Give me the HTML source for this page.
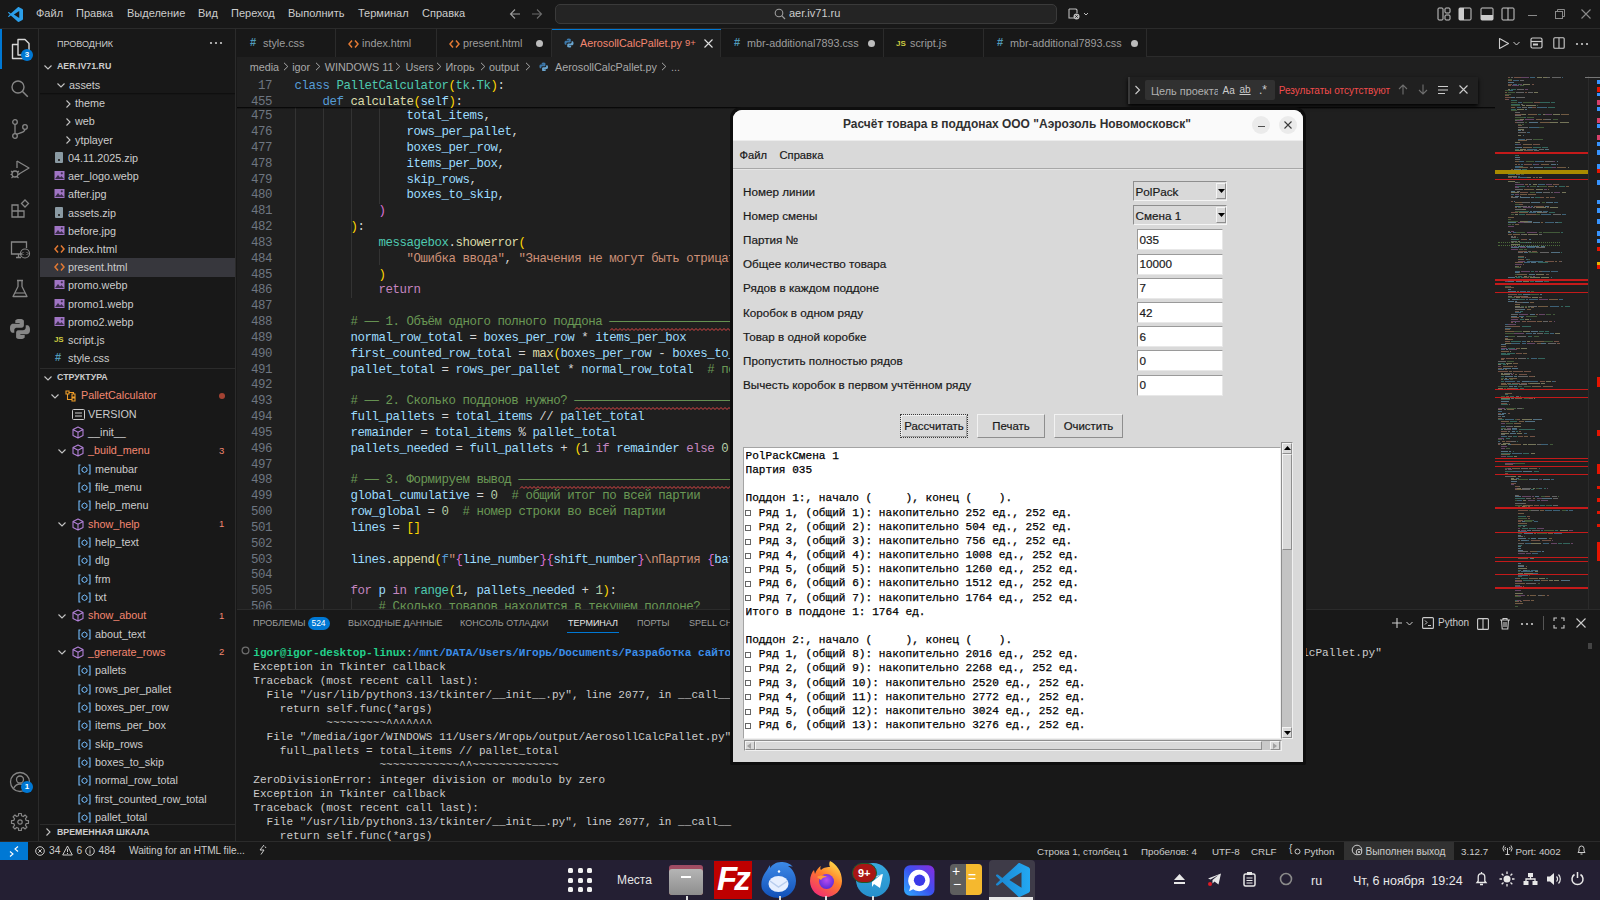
<!DOCTYPE html><html><head><meta charset="utf-8"><style>
*{box-sizing:border-box;margin:0;padding:0}
html,body{width:1600px;height:900px;overflow:hidden;background:#181818;font-family:"Liberation Sans",sans-serif;color:#ccc}
.a{position:absolute}
.t{position:absolute;white-space:pre;line-height:1}
.mono{font-family:"Liberation Mono",monospace}
svg{position:absolute;overflow:visible}
</style></head><body>
<div class="a" style="left:0;top:0;width:1600px;height:29px;background:#181818;border-bottom:1px solid #2b2b2b"></div>
<svg style="left:8px;top:7px" width="15" height="15" viewBox="0 0 100 100"><path d="M70.9 99.3L96 87.3C98.6 86 100 83.6 100 80.8V19.2C100 16.4 98.6 14 96 12.7L70.9.7C69.3 0 67.4 0 65.9 1L18.7 44 5.5 34.1C4.2 33.2 2.5 33.3 1.4 34.3L.9 34.8C-.3 35.9-.3 37.9.9 39L12.2 50 .9 61C-.3 62.1-.3 64.1.9 65.2L1.4 65.7C2.5 66.7 4.2 66.8 5.5 65.9L18.7 56 65.9 99C67.4 100 69.3 100 70.9 99.3ZM75 27.3L39.3 50 75 72.7Z" fill="#2b9fea" fill-rule="evenodd"/></svg>
<div class="t" style="left:36px;top:8px;font-size:11px;color:#cccccc">Файл</div>
<div class="t" style="left:76px;top:8px;font-size:11px;color:#cccccc">Правка</div>
<div class="t" style="left:127px;top:8px;font-size:11px;color:#cccccc">Выделение</div>
<div class="t" style="left:198px;top:8px;font-size:11px;color:#cccccc">Вид</div>
<div class="t" style="left:231px;top:8px;font-size:11px;color:#cccccc">Переход</div>
<div class="t" style="left:288px;top:8px;font-size:11px;color:#cccccc">Выполнить</div>
<div class="t" style="left:358px;top:8px;font-size:11px;color:#cccccc">Терминал</div>
<div class="t" style="left:422px;top:8px;font-size:11px;color:#cccccc">Справка</div>
<svg style="left:509px;top:8px" width="12" height="12" viewBox="0 0 12 12"><path d="M11 6H1.5M6 1.5L1.5 6 6 10.5" stroke="#9d9d9d" stroke-width="1.1" fill="none"/></svg>
<svg style="left:531px;top:8px" width="12" height="12" viewBox="0 0 12 12"><path d="M1 6h9.5M6 1.5l4.5 4.5L6 10.5" stroke="#6b6b6b" stroke-width="1.1" fill="none"/></svg>
<div class="a" style="left:555px;top:4px;width:502px;height:20px;background:#242424;border:1px solid #3a3a3a;border-radius:5px"></div>
<svg style="left:774px;top:8px" width="12" height="12" viewBox="0 0 12 12"><circle cx="5" cy="5" r="3.8" stroke="#9d9d9d" stroke-width="1.1" fill="none"/><path d="M7.7 7.7 11 11" stroke="#9d9d9d" stroke-width="1.2"/></svg>
<div class="t" style="left:789px;top:8px;font-size:11px;color:#cccccc">aer.iv71.ru</div>
<svg style="left:1067px;top:7px" width="24" height="14" viewBox="0 0 24 14"><path d="M2 2h7l1 1v3M2 2v9h5" stroke="#bdbdbd" stroke-width="1.1" fill="none"/><circle cx="9.5" cy="9.5" r="3" fill="#bdbdbd"/><path d="M8.3 8.3l2.4 2.4M10.7 8.3l-2.4 2.4" stroke="#181818" stroke-width=".9"/><path d="M17 6l2 2 2-2" stroke="#bdbdbd" stroke-width="1" fill="none"/></svg>
<svg style="left:1437px;top:7px" width="14" height="14" viewBox="0 0 14 14"><rect x="1" y="1" width="5" height="12" rx="1" stroke="#cccccc" fill="none"/><rect x="8" y="1" width="5" height="5" rx="1" stroke="#cccccc" fill="none"/><rect x="8" y="8" width="5" height="5" rx="1" stroke="#cccccc" fill="none"/></svg>
<svg style="left:1458px;top:7px" width="14" height="14" viewBox="0 0 14 14"><rect x="1" y="1" width="12" height="12" rx="1" stroke="#cccccc" fill="none"/><rect x="1" y="1" width="5" height="12" fill="#cccccc"/></svg>
<svg style="left:1480px;top:7px" width="14" height="14" viewBox="0 0 14 14"><rect x="1" y="1" width="12" height="12" rx="1" stroke="#cccccc" fill="none"/><rect x="1" y="8" width="12" height="5" fill="#cccccc"/></svg>
<svg style="left:1501px;top:7px" width="14" height="14" viewBox="0 0 14 14"><rect x="1" y="1" width="12" height="12" rx="1" stroke="#cccccc" fill="none"/><path d="M7 1v12" stroke="#cccccc"/></svg>
<div class="a" style="left:1528px;top:15px;width:9px;height:1px;background:#8a8a8a"></div>
<svg style="left:1555px;top:9px" width="10" height="10" viewBox="0 0 10 10"><rect x=".5" y="2.5" width="7" height="7" stroke="#8a8a8a" fill="none"/><path d="M2.5 2.5V.5h7v7h-2" stroke="#8a8a8a" fill="none"/></svg>
<svg style="left:1581px;top:9px" width="10" height="10" viewBox="0 0 10 10"><path d="M.5 .5l9 9M9.5 .5l-9 9" stroke="#8a8a8a" stroke-width="1.1"/></svg>
<div class="a" style="left:0;top:29px;width:39px;height:812px;background:#181818;border-right:1px solid #2b2b2b"></div>
<div class="a" style="left:0;top:29px;width:2px;height:40px;background:#0078d4"></div>
<svg style="left:10px;top:38px" width="22" height="22" viewBox="0 0 22 22"><path d="M8 1.5h7l4 4v11.5H8z" stroke="#d7d7d7" stroke-width="1.4" fill="none" stroke-linejoin="round"/><path d="M8 6.5H2.5v14h10.5v-3.5" stroke="#d7d7d7" stroke-width="1.4" fill="none" stroke-linejoin="round"/></svg>
<div class="a" style="left:21px;top:49px;width:12px;height:12px;border-radius:6px;background:#0078d4;color:#fff;font-size:8px;line-height:12px;text-align:center;font-weight:bold">3</div>
<svg style="left:9px;top:78px" width="22" height="22" viewBox="0 0 22 22"><circle cx="9" cy="9" r="6" stroke="#868686" stroke-width="1.4" fill="none"/><path d="M13.3 13.3l5.5 5.5" stroke="#868686" stroke-width="1.5"/></svg>
<svg style="left:9px;top:118px" width="22" height="22" viewBox="0 0 22 22"><circle cx="6" cy="4" r="2.3" stroke="#868686" stroke-width="1.3" fill="none"/><circle cx="6" cy="18" r="2.3" stroke="#868686" stroke-width="1.3" fill="none"/><circle cx="16" cy="9" r="2.3" stroke="#868686" stroke-width="1.3" fill="none"/><path d="M6 6.3v9.4M16 11.3c0 3-4 3.5-9 5" stroke="#868686" stroke-width="1.3" fill="none"/></svg>
<svg style="left:9px;top:158px" width="22" height="22" viewBox="0 0 22 22"><path d="M8 3l12 7-10 6" stroke="#868686" stroke-width="1.3" fill="none" stroke-linejoin="round"/><path d="M8 3v7" stroke="#868686" stroke-width="1.3"/><circle cx="6" cy="16" r="3" stroke="#868686" stroke-width="1.3" fill="none"/><path d="M2 13l2 1.5M10 13l-2 1.5M1.5 16.5h1.5M9 16.5h1.5M2.5 20l1.5-1.5M9.5 20L8 18.5" stroke="#868686" stroke-width="1.1"/></svg>
<svg style="left:9px;top:198px" width="22" height="22" viewBox="0 0 22 22"><path d="M3 7h6v6h6v6H3zM3 13h6v6M9 13v6" stroke="#868686" stroke-width="1.3" fill="none"/><path d="M12.5 5.5l3.5-3.5 3.5 3.5-3.5 3.5z" stroke="#868686" stroke-width="1.3" fill="none"/></svg>
<svg style="left:9px;top:238px" width="22" height="22" viewBox="0 0 22 22"><path d="M13 16H2.5V4h15v6" stroke="#868686" stroke-width="1.3" fill="none"/><path d="M7 19.5h5M9.5 16v3.5" stroke="#868686" stroke-width="1.3"/><circle cx="16" cy="15.5" r="4.5" stroke="#868686" stroke-width="1.2" fill="none"/><path d="M14.5 14l-1.5 1.5 1.5 1.5M17.5 14l1.5 1.5-1.5 1.5" stroke="#868686" stroke-width="1"/></svg>
<svg style="left:9px;top:278px" width="22" height="22" viewBox="0 0 22 22"><path d="M8 2.5h6M9 2.5v6L4 18.5h14L13 8.5v-6" stroke="#868686" stroke-width="1.3" fill="none" stroke-linejoin="round"/><path d="M6 15h10" stroke="#868686" stroke-width="1.2"/></svg>
<svg style="left:9px;top:318px" width="22" height="22" viewBox="0 0 22 22"><path d="M10.5 1C6 1 6.3 3 6.3 3v2.1h4.3v.7H4.1S1 5.5 1 10.2s2.7 4.5 2.7 4.5h1.6v-2.2s-.1-2.7 2.6-2.7h4.4s2.6 0 2.6-2.5V3.1S15.3 1 10.5 1z" fill="#868686"/><path d="M11.5 21c4.5 0 4.2-2 4.2-2v-2.1h-4.3v-.7h6.5s3.1.3 3.1-4.4-2.7-4.5-2.7-4.5h-1.6v2.2s.1 2.7-2.6 2.7H9.7s-2.6 0-2.6 2.5v4.2S6.7 21 11.5 21z" fill="#868686"/></svg>
<svg style="left:9px;top:771px" width="22" height="22" viewBox="0 0 22 22"><circle cx="11" cy="11" r="9.5" stroke="#868686" stroke-width="1.3" fill="none"/><circle cx="11" cy="8.5" r="3.5" stroke="#868686" stroke-width="1.3" fill="none"/><path d="M4.5 17.5c1.5-3 3.8-4.5 6.5-4.5s5 1.5 6.5 4.5" stroke="#868686" stroke-width="1.3" fill="none"/></svg>
<div class="a" style="left:21px;top:781px;width:12px;height:12px;border-radius:6px;background:#0078d4;color:#fff;font-size:8px;line-height:12px;text-align:center;font-weight:bold">1</div>
<svg style="left:10px;top:811.7px" width="20" height="20" viewBox="0 0 20 20"><path d="M18.49 8.65 L18.49 11.35 L16.22 11.49 L15.46 13.34 L16.96 15.05 L15.05 16.96 L13.34 15.46 L11.49 16.22 L11.35 18.49 L8.65 18.49 L8.51 16.22 L6.66 15.46 L4.95 16.96 L3.04 15.05 L4.54 13.34 L3.78 11.49 L1.51 11.35 L1.51 8.65 L3.78 8.51 L4.54 6.66 L3.04 4.95 L4.95 3.04 L6.66 4.54 L8.51 3.78 L8.65 1.51 L11.35 1.51 L11.49 3.78 L13.34 4.54 L15.05 3.04 L16.96 4.95 L15.46 6.66 L16.22 8.51Z" stroke="#868686" stroke-width="1.2" fill="none" stroke-linejoin="round"/><circle cx="10" cy="10" r="2.2" stroke="#868686" stroke-width="1.2" fill="none"/></svg>
<div class="a" style="left:39px;top:29px;width:197px;height:812px;background:#181818;border-right:1px solid #2b2b2b"></div>
<div class="t" style="left:57px;top:40px;font-size:9px;color:#cccccc">ПРОВОДНИК</div>
<svg style="left:209px;top:41px" width="14" height="4" viewBox="0 0 14 4"><circle cx="2" cy="2" r="1.1" fill="#cccccc"/><circle cx="7" cy="2" r="1.1" fill="#cccccc"/><circle cx="12" cy="2" r="1.1" fill="#cccccc"/></svg>
<svg style="left:43px;top:61.7px" width="10" height="10" viewBox="0 0 10 10"><path d="M1.5 3.5L5 7l3.5-3.5" stroke="#c5c5c5" stroke-width="1.1" fill="none"/></svg>
<div class="t" style="left:57px;top:62.2px;font-size:8.8px;font-weight:bold;color:#cccccc">AER.IV71.RU</div>
<div class="a" style="left:40px;top:258.23px;width:195px;height:18.33px;background:#37373d"></div>
<svg style="left:56px;top:80.43px" width="10" height="10" viewBox="0 0 10 10"><path d="M1.5 3.5L5 7l3.5-3.5" stroke="#c5c5c5" stroke-width="1.1" fill="none"/></svg>
<div class="t" style="left:69px;top:79.93px;font-size:10.8px;color:#cccccc">assets</div>
<svg style="left:63px;top:98.66px" width="10" height="10" viewBox="0 0 10 10"><path d="M3.5 1.5L7 5 3.5 8.5" stroke="#c5c5c5" stroke-width="1.1" fill="none"/></svg>
<div class="t" style="left:75px;top:98.16px;font-size:10.8px;color:#cccccc">theme</div>
<svg style="left:63px;top:116.89px" width="10" height="10" viewBox="0 0 10 10"><path d="M3.5 1.5L7 5 3.5 8.5" stroke="#c5c5c5" stroke-width="1.1" fill="none"/></svg>
<div class="t" style="left:75px;top:116.39px;font-size:10.8px;color:#cccccc">web</div>
<svg style="left:63px;top:135.12px" width="10" height="10" viewBox="0 0 10 10"><path d="M3.5 1.5L7 5 3.5 8.5" stroke="#c5c5c5" stroke-width="1.1" fill="none"/></svg>
<div class="t" style="left:75px;top:134.62px;font-size:10.8px;color:#cccccc">ytplayer</div>
<div class="a" style="left:55px;top:151.85000000000002px;width:8px;height:11px;background:#8a9aa3;border-radius:1px"></div><div class="a" style="left:58px;top:158.85000000000002px;width:2px;height:2px;background:#333"></div>
<div class="t" style="left:68px;top:152.85000000000002px;font-size:10.8px;color:#cccccc">04.11.2025.zip</div>
<svg style="left:54px;top:170.07999999999998px" width="11" height="11" viewBox="0 0 11 11"><rect x=".5" y="1" width="10" height="9" fill="#a074c4"/><path d="M1 9l3-4 2 2.5 1.5-1.5L10 9z" fill="#3a2d4a"/><circle cx="7.8" cy="3.3" r="1.1" fill="#3a2d4a"/></svg>
<div class="t" style="left:68px;top:171.07999999999998px;font-size:10.8px;color:#cccccc">aer_logo.webp</div>
<svg style="left:54px;top:188.31px" width="11" height="11" viewBox="0 0 11 11"><rect x=".5" y="1" width="10" height="9" fill="#a074c4"/><path d="M1 9l3-4 2 2.5 1.5-1.5L10 9z" fill="#3a2d4a"/><circle cx="7.8" cy="3.3" r="1.1" fill="#3a2d4a"/></svg>
<div class="t" style="left:68px;top:189.31px;font-size:10.8px;color:#cccccc">after.jpg</div>
<div class="a" style="left:55px;top:206.54000000000002px;width:8px;height:11px;background:#8a9aa3;border-radius:1px"></div><div class="a" style="left:58px;top:213.54000000000002px;width:2px;height:2px;background:#333"></div>
<div class="t" style="left:68px;top:207.54000000000002px;font-size:10.8px;color:#cccccc">assets.zip</div>
<svg style="left:54px;top:224.76999999999998px" width="11" height="11" viewBox="0 0 11 11"><rect x=".5" y="1" width="10" height="9" fill="#a074c4"/><path d="M1 9l3-4 2 2.5 1.5-1.5L10 9z" fill="#3a2d4a"/><circle cx="7.8" cy="3.3" r="1.1" fill="#3a2d4a"/></svg>
<div class="t" style="left:68px;top:225.76999999999998px;font-size:10.8px;color:#cccccc">before.jpg</div>
<svg style="left:54px;top:244.0px" width="11" height="10" viewBox="0 0 11 10"><path d="M4 1.5L1 5l3 3.5M7 1.5L10 5 7 8.5" stroke="#e37933" stroke-width="1.5" fill="none"/></svg>
<div class="t" style="left:68px;top:244.0px;font-size:10.8px;color:#cccccc">index.html</div>
<svg style="left:54px;top:262.23px" width="11" height="10" viewBox="0 0 11 10"><path d="M4 1.5L1 5l3 3.5M7 1.5L10 5 7 8.5" stroke="#e37933" stroke-width="1.5" fill="none"/></svg>
<div class="t" style="left:68px;top:262.23px;font-size:10.8px;color:#cccccc">present.html</div>
<svg style="left:54px;top:279.46px" width="11" height="11" viewBox="0 0 11 11"><rect x=".5" y="1" width="10" height="9" fill="#a074c4"/><path d="M1 9l3-4 2 2.5 1.5-1.5L10 9z" fill="#3a2d4a"/><circle cx="7.8" cy="3.3" r="1.1" fill="#3a2d4a"/></svg>
<div class="t" style="left:68px;top:280.46px;font-size:10.8px;color:#cccccc">promo.webp</div>
<svg style="left:54px;top:297.69px" width="11" height="11" viewBox="0 0 11 11"><rect x=".5" y="1" width="10" height="9" fill="#a074c4"/><path d="M1 9l3-4 2 2.5 1.5-1.5L10 9z" fill="#3a2d4a"/><circle cx="7.8" cy="3.3" r="1.1" fill="#3a2d4a"/></svg>
<div class="t" style="left:68px;top:298.69px;font-size:10.8px;color:#cccccc">promo1.webp</div>
<svg style="left:54px;top:315.92px" width="11" height="11" viewBox="0 0 11 11"><rect x=".5" y="1" width="10" height="9" fill="#a074c4"/><path d="M1 9l3-4 2 2.5 1.5-1.5L10 9z" fill="#3a2d4a"/><circle cx="7.8" cy="3.3" r="1.1" fill="#3a2d4a"/></svg>
<div class="t" style="left:68px;top:316.92px;font-size:10.8px;color:#cccccc">promo2.webp</div>
<div class="t" style="left:54px;top:336.15px;font-size:8px;font-weight:bold;color:#cbcb41;letter-spacing:-0.3px">JS</div>
<div class="t" style="left:68px;top:335.15px;font-size:10.8px;color:#cccccc">script.js</div>
<div class="t" style="left:55px;top:352.38px;font-size:11px;font-weight:bold;color:#519aba">#</div>
<div class="t" style="left:68px;top:353.38px;font-size:10.8px;color:#cccccc">style.css</div>
<div class="a" style="left:40px;top:93.16px;width:195px;height:2px;background:linear-gradient(#0c0c0c,#181818)"></div>
<div class="a" style="left:40px;top:368.2px;width:195px;height:1px;background:#2b2b2b"></div>
<svg style="left:43px;top:372.7px" width="10" height="10" viewBox="0 0 10 10"><path d="M1.5 3.5L5 7l3.5-3.5" stroke="#c5c5c5" stroke-width="1.1" fill="none"/></svg>
<div class="t" style="left:57px;top:373.2px;font-size:8.8px;font-weight:bold;color:#cccccc">СТРУКТУРА</div>
<svg style="left:50px;top:390.8px" width="10" height="10" viewBox="0 0 10 10"><path d="M1.5 3.5L5 7l3.5-3.5" stroke="#c5c5c5" stroke-width="1.1" fill="none"/></svg>
<svg style="left:64px;top:389.3px" width="13" height="13" viewBox="0 0 13 13"><path d="M2 2h3v3H2zM8 5h3v3H8zM8 9h3v3H8zM3.5 5v5.5H8M5 3.5h4.5V5" stroke="#ee9d28" stroke-width="1.1" fill="none"/></svg>
<div class="t" style="left:81px;top:390.3px;font-size:10.8px;color:#f48771">PalletCalculator</div>
<div class="a" style="left:219px;top:392.8px;width:6px;height:6px;border-radius:3px;background:#c74e39;opacity:.8"></div>
<svg style="left:72px;top:408.63px" width="13" height="11" viewBox="0 0 13 11"><rect x=".5" y=".5" width="12" height="10" rx="1" stroke="#cccccc" fill="none"/><path d="M3 4h7M3 7h7" stroke="#cccccc"/></svg>
<div class="t" style="left:88px;top:408.63px;font-size:10.8px;color:#cccccc">VERSION</div>
<svg style="left:72px;top:425.96000000000004px" width="12" height="13" viewBox="0 0 12 13"><path d="M6 1l5 2.6v5.8L6 12 1 9.4V3.6z M1 3.6l5 2.7 5-2.7M6 6.3V12" stroke="#b180d7" stroke-width="1.1" fill="none" stroke-linejoin="round"/></svg>
<div class="t" style="left:88px;top:426.96000000000004px;font-size:10.8px;color:#cccccc">__init__</div>
<svg style="left:57px;top:445.79px" width="10" height="10" viewBox="0 0 10 10"><path d="M1.5 3.5L5 7l3.5-3.5" stroke="#c5c5c5" stroke-width="1.1" fill="none"/></svg>
<svg style="left:72px;top:444.29px" width="12" height="13" viewBox="0 0 12 13"><path d="M6 1l5 2.6v5.8L6 12 1 9.4V3.6z M1 3.6l5 2.7 5-2.7M6 6.3V12" stroke="#b180d7" stroke-width="1.1" fill="none" stroke-linejoin="round"/></svg>
<div class="t" style="left:88px;top:445.29px;font-size:10.8px;color:#f48771">_build_menu</div>
<div class="t" style="left:219px;top:445.79px;font-size:9.5px;color:#f48771">3</div>
<svg style="left:78px;top:463.62px" width="13" height="11" viewBox="0 0 13 11"><path d="M2.5 1H1v9h1.5M10.5 1H12v9h-1.5" stroke="#75beff" stroke-width="1.1" fill="none"/><path d="M4 4.5l2.5-1.5 2.5 1.5v2.5L6.5 8.5 4 7z" stroke="#75beff" stroke-width="1" fill="none"/></svg>
<div class="t" style="left:95px;top:463.62px;font-size:10.8px;color:#cccccc">menubar</div>
<svg style="left:78px;top:481.95px" width="13" height="11" viewBox="0 0 13 11"><path d="M2.5 1H1v9h1.5M10.5 1H12v9h-1.5" stroke="#75beff" stroke-width="1.1" fill="none"/><path d="M4 4.5l2.5-1.5 2.5 1.5v2.5L6.5 8.5 4 7z" stroke="#75beff" stroke-width="1" fill="none"/></svg>
<div class="t" style="left:95px;top:481.95px;font-size:10.8px;color:#cccccc">file_menu</div>
<svg style="left:78px;top:500.28px" width="13" height="11" viewBox="0 0 13 11"><path d="M2.5 1H1v9h1.5M10.5 1H12v9h-1.5" stroke="#75beff" stroke-width="1.1" fill="none"/><path d="M4 4.5l2.5-1.5 2.5 1.5v2.5L6.5 8.5 4 7z" stroke="#75beff" stroke-width="1" fill="none"/></svg>
<div class="t" style="left:95px;top:500.28px;font-size:10.8px;color:#cccccc">help_menu</div>
<svg style="left:57px;top:519.11px" width="10" height="10" viewBox="0 0 10 10"><path d="M1.5 3.5L5 7l3.5-3.5" stroke="#c5c5c5" stroke-width="1.1" fill="none"/></svg>
<svg style="left:72px;top:517.61px" width="12" height="13" viewBox="0 0 12 13"><path d="M6 1l5 2.6v5.8L6 12 1 9.4V3.6z M1 3.6l5 2.7 5-2.7M6 6.3V12" stroke="#b180d7" stroke-width="1.1" fill="none" stroke-linejoin="round"/></svg>
<div class="t" style="left:88px;top:518.61px;font-size:10.8px;color:#f48771">show_help</div>
<div class="t" style="left:219px;top:519.11px;font-size:9.5px;color:#f48771">1</div>
<svg style="left:78px;top:536.94px" width="13" height="11" viewBox="0 0 13 11"><path d="M2.5 1H1v9h1.5M10.5 1H12v9h-1.5" stroke="#75beff" stroke-width="1.1" fill="none"/><path d="M4 4.5l2.5-1.5 2.5 1.5v2.5L6.5 8.5 4 7z" stroke="#75beff" stroke-width="1" fill="none"/></svg>
<div class="t" style="left:95px;top:536.94px;font-size:10.8px;color:#cccccc">help_text</div>
<svg style="left:78px;top:555.27px" width="13" height="11" viewBox="0 0 13 11"><path d="M2.5 1H1v9h1.5M10.5 1H12v9h-1.5" stroke="#75beff" stroke-width="1.1" fill="none"/><path d="M4 4.5l2.5-1.5 2.5 1.5v2.5L6.5 8.5 4 7z" stroke="#75beff" stroke-width="1" fill="none"/></svg>
<div class="t" style="left:95px;top:555.27px;font-size:10.8px;color:#cccccc">dlg</div>
<svg style="left:78px;top:573.6px" width="13" height="11" viewBox="0 0 13 11"><path d="M2.5 1H1v9h1.5M10.5 1H12v9h-1.5" stroke="#75beff" stroke-width="1.1" fill="none"/><path d="M4 4.5l2.5-1.5 2.5 1.5v2.5L6.5 8.5 4 7z" stroke="#75beff" stroke-width="1" fill="none"/></svg>
<div class="t" style="left:95px;top:573.6px;font-size:10.8px;color:#cccccc">frm</div>
<svg style="left:78px;top:591.9300000000001px" width="13" height="11" viewBox="0 0 13 11"><path d="M2.5 1H1v9h1.5M10.5 1H12v9h-1.5" stroke="#75beff" stroke-width="1.1" fill="none"/><path d="M4 4.5l2.5-1.5 2.5 1.5v2.5L6.5 8.5 4 7z" stroke="#75beff" stroke-width="1" fill="none"/></svg>
<div class="t" style="left:95px;top:591.9300000000001px;font-size:10.8px;color:#cccccc">txt</div>
<svg style="left:57px;top:610.76px" width="10" height="10" viewBox="0 0 10 10"><path d="M1.5 3.5L5 7l3.5-3.5" stroke="#c5c5c5" stroke-width="1.1" fill="none"/></svg>
<svg style="left:72px;top:609.26px" width="12" height="13" viewBox="0 0 12 13"><path d="M6 1l5 2.6v5.8L6 12 1 9.4V3.6z M1 3.6l5 2.7 5-2.7M6 6.3V12" stroke="#b180d7" stroke-width="1.1" fill="none" stroke-linejoin="round"/></svg>
<div class="t" style="left:88px;top:610.26px;font-size:10.8px;color:#f48771">show_about</div>
<div class="t" style="left:219px;top:610.76px;font-size:9.5px;color:#f48771">1</div>
<svg style="left:78px;top:628.5899999999999px" width="13" height="11" viewBox="0 0 13 11"><path d="M2.5 1H1v9h1.5M10.5 1H12v9h-1.5" stroke="#75beff" stroke-width="1.1" fill="none"/><path d="M4 4.5l2.5-1.5 2.5 1.5v2.5L6.5 8.5 4 7z" stroke="#75beff" stroke-width="1" fill="none"/></svg>
<div class="t" style="left:95px;top:628.5899999999999px;font-size:10.8px;color:#cccccc">about_text</div>
<svg style="left:57px;top:647.4200000000001px" width="10" height="10" viewBox="0 0 10 10"><path d="M1.5 3.5L5 7l3.5-3.5" stroke="#c5c5c5" stroke-width="1.1" fill="none"/></svg>
<svg style="left:72px;top:645.9200000000001px" width="12" height="13" viewBox="0 0 12 13"><path d="M6 1l5 2.6v5.8L6 12 1 9.4V3.6z M1 3.6l5 2.7 5-2.7M6 6.3V12" stroke="#b180d7" stroke-width="1.1" fill="none" stroke-linejoin="round"/></svg>
<div class="t" style="left:88px;top:646.9200000000001px;font-size:10.8px;color:#f48771">_generate_rows</div>
<div class="t" style="left:219px;top:647.4200000000001px;font-size:9.5px;color:#f48771">2</div>
<svg style="left:78px;top:665.25px" width="13" height="11" viewBox="0 0 13 11"><path d="M2.5 1H1v9h1.5M10.5 1H12v9h-1.5" stroke="#75beff" stroke-width="1.1" fill="none"/><path d="M4 4.5l2.5-1.5 2.5 1.5v2.5L6.5 8.5 4 7z" stroke="#75beff" stroke-width="1" fill="none"/></svg>
<div class="t" style="left:95px;top:665.25px;font-size:10.8px;color:#cccccc">pallets</div>
<svg style="left:78px;top:683.5799999999999px" width="13" height="11" viewBox="0 0 13 11"><path d="M2.5 1H1v9h1.5M10.5 1H12v9h-1.5" stroke="#75beff" stroke-width="1.1" fill="none"/><path d="M4 4.5l2.5-1.5 2.5 1.5v2.5L6.5 8.5 4 7z" stroke="#75beff" stroke-width="1" fill="none"/></svg>
<div class="t" style="left:95px;top:683.5799999999999px;font-size:10.8px;color:#cccccc">rows_per_pallet</div>
<svg style="left:78px;top:701.91px" width="13" height="11" viewBox="0 0 13 11"><path d="M2.5 1H1v9h1.5M10.5 1H12v9h-1.5" stroke="#75beff" stroke-width="1.1" fill="none"/><path d="M4 4.5l2.5-1.5 2.5 1.5v2.5L6.5 8.5 4 7z" stroke="#75beff" stroke-width="1" fill="none"/></svg>
<div class="t" style="left:95px;top:701.91px;font-size:10.8px;color:#cccccc">boxes_per_row</div>
<svg style="left:78px;top:720.24px" width="13" height="11" viewBox="0 0 13 11"><path d="M2.5 1H1v9h1.5M10.5 1H12v9h-1.5" stroke="#75beff" stroke-width="1.1" fill="none"/><path d="M4 4.5l2.5-1.5 2.5 1.5v2.5L6.5 8.5 4 7z" stroke="#75beff" stroke-width="1" fill="none"/></svg>
<div class="t" style="left:95px;top:720.24px;font-size:10.8px;color:#cccccc">items_per_box</div>
<svg style="left:78px;top:738.5699999999999px" width="13" height="11" viewBox="0 0 13 11"><path d="M2.5 1H1v9h1.5M10.5 1H12v9h-1.5" stroke="#75beff" stroke-width="1.1" fill="none"/><path d="M4 4.5l2.5-1.5 2.5 1.5v2.5L6.5 8.5 4 7z" stroke="#75beff" stroke-width="1" fill="none"/></svg>
<div class="t" style="left:95px;top:738.5699999999999px;font-size:10.8px;color:#cccccc">skip_rows</div>
<svg style="left:78px;top:756.9px" width="13" height="11" viewBox="0 0 13 11"><path d="M2.5 1H1v9h1.5M10.5 1H12v9h-1.5" stroke="#75beff" stroke-width="1.1" fill="none"/><path d="M4 4.5l2.5-1.5 2.5 1.5v2.5L6.5 8.5 4 7z" stroke="#75beff" stroke-width="1" fill="none"/></svg>
<div class="t" style="left:95px;top:756.9px;font-size:10.8px;color:#cccccc">boxes_to_skip</div>
<svg style="left:78px;top:775.23px" width="13" height="11" viewBox="0 0 13 11"><path d="M2.5 1H1v9h1.5M10.5 1H12v9h-1.5" stroke="#75beff" stroke-width="1.1" fill="none"/><path d="M4 4.5l2.5-1.5 2.5 1.5v2.5L6.5 8.5 4 7z" stroke="#75beff" stroke-width="1" fill="none"/></svg>
<div class="t" style="left:95px;top:775.23px;font-size:10.8px;color:#cccccc">normal_row_total</div>
<svg style="left:78px;top:793.56px" width="13" height="11" viewBox="0 0 13 11"><path d="M2.5 1H1v9h1.5M10.5 1H12v9h-1.5" stroke="#75beff" stroke-width="1.1" fill="none"/><path d="M4 4.5l2.5-1.5 2.5 1.5v2.5L6.5 8.5 4 7z" stroke="#75beff" stroke-width="1" fill="none"/></svg>
<div class="t" style="left:95px;top:793.56px;font-size:10.8px;color:#cccccc">first_counted_row_total</div>
<svg style="left:78px;top:811.89px" width="13" height="11" viewBox="0 0 13 11"><path d="M2.5 1H1v9h1.5M10.5 1H12v9h-1.5" stroke="#75beff" stroke-width="1.1" fill="none"/><path d="M4 4.5l2.5-1.5 2.5 1.5v2.5L6.5 8.5 4 7z" stroke="#75beff" stroke-width="1" fill="none"/></svg>
<div class="t" style="left:95px;top:811.89px;font-size:10.8px;color:#cccccc">pallet_total</div>
<div class="a" style="left:40px;top:823.5px;width:195px;height:1px;background:#2b2b2b"></div>
<svg style="left:43px;top:827.0px" width="10" height="10" viewBox="0 0 10 10"><path d="M3.5 1.5L7 5 3.5 8.5" stroke="#c5c5c5" stroke-width="1.1" fill="none"/></svg>
<div class="t" style="left:57px;top:827.5px;font-size:8.8px;font-weight:bold;color:#cccccc">ВРЕМЕННАЯ ШКАЛА</div>
<div class="a" style="left:237px;top:29px;width:1363px;height:28px;background:#181818;border-bottom:1px solid #2b2b2b"></div>
<div class="a" style="left:237px;top:29px;width:99px;height:28px;background:#181818;border-right:1px solid #2b2b2b"></div>
<div class="t" style="left:250px;top:37px;font-size:11px;font-weight:bold;color:#519aba">#</div>
<div class="t" style="left:263px;top:38px;font-size:10.8px;color:#9d9d9d">style.css</div>
<div class="a" style="left:336px;top:29px;width:101px;height:28px;background:#181818;border-right:1px solid #2b2b2b"></div>
<svg style="left:348px;top:39px" width="11" height="10" viewBox="0 0 11 10"><path d="M4 1.5L1 5l3 3.5M7 1.5L10 5 7 8.5" stroke="#e37933" stroke-width="1.5" fill="none"/></svg>
<div class="t" style="left:362px;top:38px;font-size:10.8px;color:#9d9d9d">index.html</div>
<div class="a" style="left:437px;top:29px;width:115px;height:28px;background:#181818;border-right:1px solid #2b2b2b"></div>
<svg style="left:449px;top:39px" width="11" height="10" viewBox="0 0 11 10"><path d="M4 1.5L1 5l3 3.5M7 1.5L10 5 7 8.5" stroke="#e37933" stroke-width="1.5" fill="none"/></svg>
<div class="t" style="left:463px;top:38px;font-size:10.8px;color:#9d9d9d">present.html</div>
<div class="a" style="left:536px;top:40px;width:7px;height:7px;border-radius:4px;background:#bcbcbc"></div>
<div class="a" style="left:552px;top:29px;width:169px;height:28px;background:#1f1f1f;border-right:1px solid #2b2b2b;border-bottom:1px solid #1f1f1f;height:29px"></div>
<div class="a" style="left:552px;top:29px;width:169px;height:1px;background:#0078d4"></div>
<svg style="left:564px;top:38px" width="10" height="10" viewBox="0 0 22 22"><path d="M10.5 1C6 1 6.3 3 6.3 3v2.1h4.3v.7H4.1S1 5.5 1 10.2s2.7 4.5 2.7 4.5h1.6v-2.2s-.1-2.7 2.6-2.7h4.4s2.6 0 2.6-2.5V3.1S15.3 1 10.5 1z" fill="#3c78aa"/><path d="M11.5 21c4.5 0 4.2-2 4.2-2v-2.1h-4.3v-.7h6.5s3.1.3 3.1-4.4-2.7-4.5-2.7-4.5h-1.6v2.2s.1 2.7-2.6 2.7H9.7s-2.6 0-2.6 2.5v4.2S6.7 21 11.5 21z" fill="#6aa5cf"/></svg>
<div class="t" style="left:580px;top:38px;font-size:10.8px;color:#f48771">AerosollCalcPallet.py</div>
<div class="t" style="left:685px;top:38px;font-size:9.5px;color:#f48771">9+</div>
<svg style="left:704px;top:39px" width="9" height="9" viewBox="0 0 9 9"><path d="M.5.5l8 8M8.5.5l-8 8" stroke="#e0e0e0" stroke-width="1.1"/></svg>
<div class="a" style="left:721px;top:29px;width:163px;height:28px;background:#181818;border-right:1px solid #2b2b2b"></div>
<div class="t" style="left:734px;top:37px;font-size:11px;font-weight:bold;color:#519aba">#</div>
<div class="t" style="left:747px;top:38px;font-size:10.8px;color:#9d9d9d">mbr-additional7893.css</div>
<div class="a" style="left:868px;top:40px;width:7px;height:7px;border-radius:4px;background:#bcbcbc"></div>
<div class="a" style="left:884px;top:29px;width:100px;height:28px;background:#181818;border-right:1px solid #2b2b2b"></div>
<div class="t" style="left:896px;top:40px;font-size:8px;font-weight:bold;color:#cbcb41">JS</div>
<div class="t" style="left:910px;top:38px;font-size:10.8px;color:#9d9d9d">script.js</div>
<div class="a" style="left:984px;top:29px;width:163px;height:28px;background:#181818;border-right:1px solid #2b2b2b"></div>
<div class="t" style="left:997px;top:37px;font-size:11px;font-weight:bold;color:#519aba">#</div>
<div class="t" style="left:1010px;top:38px;font-size:10.8px;color:#9d9d9d">mbr-additional7893.css</div>
<div class="a" style="left:1131px;top:40px;width:7px;height:7px;border-radius:4px;background:#bcbcbc"></div>
<svg style="left:1498px;top:37px" width="12" height="13" viewBox="0 0 12 13"><path d="M1.5 1.5l9 5-9 5z" stroke="#cccccc" stroke-width="1.1" fill="none" stroke-linejoin="round"/></svg>
<svg style="left:1513px;top:41px" width="7" height="5" viewBox="0 0 7 5"><path d="M.5 1l3 3 3-3" stroke="#cccccc" fill="none"/></svg>
<svg style="left:1530px;top:37px" width="13" height="12" viewBox="0 0 13 12"><rect x="1" y="1" width="11" height="10" rx="1.5" stroke="#cccccc" stroke-width="1.2" fill="none"/><path d="M1 4.5h11" stroke="#cccccc" stroke-width="1.2"/><rect x="3" y="6.5" width="5" height="2" fill="#cccccc"/></svg>
<svg style="left:1553px;top:37px" width="12" height="12" viewBox="0 0 12 12"><rect x=".8" y=".8" width="10.4" height="10.4" rx="1" stroke="#cccccc" stroke-width="1.1" fill="none"/><path d="M6 1v10" stroke="#cccccc" stroke-width="1.1"/></svg>
<svg style="left:1575px;top:42px" width="14" height="4" viewBox="0 0 14 4"><circle cx="2" cy="2" r="1.1" fill="#cccccc"/><circle cx="7" cy="2" r="1.1" fill="#cccccc"/><circle cx="12" cy="2" r="1.1" fill="#cccccc"/></svg>
<div class="a" style="left:237px;top:57px;width:1363px;height:552px;background:#1f1f1f"></div>
<div class="a" style="left:295px;top:107px;width:1px;height:502px;background:#333333"></div>
<div class="a" style="left:323px;top:107px;width:1px;height:502px;background:#333333"></div>
<div class="a" style="left:351px;top:107px;width:1px;height:191px;background:#333333"></div>
<div class="a" style="left:379px;top:107px;width:1px;height:97px;background:#333333"></div>
<div class="a" style="left:379px;top:249px;width:1px;height:16px;background:#333333"></div>
<div class="a" style="left:351px;top:598px;width:1px;height:11px;background:#333333"></div>
<div class="t mono" style="left:232px;top:109.3px;width:40px;text-align:right;font-size:12.4px;letter-spacing:-0.44px;line-height:15.83px;color:#6e7681">475</div>
<div class="t mono" style="left:294.5px;top:109.3px;font-size:12.4px;letter-spacing:-0.44px;line-height:15.83px;color:#cccccc"><span style="color:#d4d4d4">                </span><span style="color:#9cdcfe">total_items</span><span style="color:#d4d4d4">,</span></div>
<div class="t mono" style="left:232px;top:125.13px;width:40px;text-align:right;font-size:12.4px;letter-spacing:-0.44px;line-height:15.83px;color:#6e7681">476</div>
<div class="t mono" style="left:294.5px;top:125.13px;font-size:12.4px;letter-spacing:-0.44px;line-height:15.83px;color:#cccccc"><span style="color:#d4d4d4">                </span><span style="color:#9cdcfe">rows_per_pallet</span><span style="color:#d4d4d4">,</span></div>
<div class="t mono" style="left:232px;top:140.96px;width:40px;text-align:right;font-size:12.4px;letter-spacing:-0.44px;line-height:15.83px;color:#6e7681">477</div>
<div class="t mono" style="left:294.5px;top:140.96px;font-size:12.4px;letter-spacing:-0.44px;line-height:15.83px;color:#cccccc"><span style="color:#d4d4d4">                </span><span style="color:#9cdcfe">boxes_per_row</span><span style="color:#d4d4d4">,</span></div>
<div class="t mono" style="left:232px;top:156.79px;width:40px;text-align:right;font-size:12.4px;letter-spacing:-0.44px;line-height:15.83px;color:#6e7681">478</div>
<div class="t mono" style="left:294.5px;top:156.79px;font-size:12.4px;letter-spacing:-0.44px;line-height:15.83px;color:#cccccc"><span style="color:#d4d4d4">                </span><span style="color:#9cdcfe">items_per_box</span><span style="color:#d4d4d4">,</span></div>
<div class="t mono" style="left:232px;top:172.62px;width:40px;text-align:right;font-size:12.4px;letter-spacing:-0.44px;line-height:15.83px;color:#6e7681">479</div>
<div class="t mono" style="left:294.5px;top:172.62px;font-size:12.4px;letter-spacing:-0.44px;line-height:15.83px;color:#cccccc"><span style="color:#d4d4d4">                </span><span style="color:#9cdcfe">skip_rows</span><span style="color:#d4d4d4">,</span></div>
<div class="t mono" style="left:232px;top:188.45px;width:40px;text-align:right;font-size:12.4px;letter-spacing:-0.44px;line-height:15.83px;color:#6e7681">480</div>
<div class="t mono" style="left:294.5px;top:188.45px;font-size:12.4px;letter-spacing:-0.44px;line-height:15.83px;color:#cccccc"><span style="color:#d4d4d4">                </span><span style="color:#9cdcfe">boxes_to_skip</span><span style="color:#d4d4d4">,</span></div>
<div class="t mono" style="left:232px;top:204.28px;width:40px;text-align:right;font-size:12.4px;letter-spacing:-0.44px;line-height:15.83px;color:#6e7681">481</div>
<div class="t mono" style="left:294.5px;top:204.28px;font-size:12.4px;letter-spacing:-0.44px;line-height:15.83px;color:#cccccc"><span style="color:#d4d4d4">            </span><span style="color:#da70d6">)</span></div>
<div class="t mono" style="left:232px;top:220.11px;width:40px;text-align:right;font-size:12.4px;letter-spacing:-0.44px;line-height:15.83px;color:#6e7681">482</div>
<div class="t mono" style="left:294.5px;top:220.11px;font-size:12.4px;letter-spacing:-0.44px;line-height:15.83px;color:#cccccc"><span style="color:#d4d4d4">        </span><span style="color:#ffd700">)</span><span style="color:#d4d4d4">:</span></div>
<div class="t mono" style="left:232px;top:235.94px;width:40px;text-align:right;font-size:12.4px;letter-spacing:-0.44px;line-height:15.83px;color:#6e7681">483</div>
<div class="t mono" style="left:294.5px;top:235.94px;font-size:12.4px;letter-spacing:-0.44px;line-height:15.83px;color:#cccccc"><span style="color:#d4d4d4">            </span><span style="color:#4ec9b0">messagebox</span><span style="color:#d4d4d4">.</span><span style="color:#dcdcaa">showerror</span><span style="color:#ffd700">(</span></div>
<div class="t mono" style="left:232px;top:251.76999999999998px;width:40px;text-align:right;font-size:12.4px;letter-spacing:-0.44px;line-height:15.83px;color:#6e7681">484</div>
<div class="t mono" style="left:294.5px;top:251.76999999999998px;font-size:12.4px;letter-spacing:-0.44px;line-height:15.83px;color:#cccccc"><span style="color:#d4d4d4">                </span><span style="color:#ce9178">"Ошибка ввода"</span><span style="color:#d4d4d4">, </span><span style="color:#ce9178">"Значения не могут быть отрицательными"</span></div>
<div class="t mono" style="left:232px;top:267.6px;width:40px;text-align:right;font-size:12.4px;letter-spacing:-0.44px;line-height:15.83px;color:#6e7681">485</div>
<div class="t mono" style="left:294.5px;top:267.6px;font-size:12.4px;letter-spacing:-0.44px;line-height:15.83px;color:#cccccc"><span style="color:#d4d4d4">            </span><span style="color:#ffd700">)</span></div>
<div class="t mono" style="left:232px;top:283.43px;width:40px;text-align:right;font-size:12.4px;letter-spacing:-0.44px;line-height:15.83px;color:#6e7681">486</div>
<div class="t mono" style="left:294.5px;top:283.43px;font-size:12.4px;letter-spacing:-0.44px;line-height:15.83px;color:#cccccc"><span style="color:#d4d4d4">            </span><span style="color:#c586c0">return</span></div>
<div class="t mono" style="left:232px;top:299.26px;width:40px;text-align:right;font-size:12.4px;letter-spacing:-0.44px;line-height:15.83px;color:#6e7681">487</div>
<div class="t mono" style="left:294.5px;top:299.26px;font-size:12.4px;letter-spacing:-0.44px;line-height:15.83px;color:#cccccc"></div>
<div class="t mono" style="left:232px;top:315.09px;width:40px;text-align:right;font-size:12.4px;letter-spacing:-0.44px;line-height:15.83px;color:#6e7681">488</div>
<div class="t mono" style="left:294.5px;top:315.09px;font-size:12.4px;letter-spacing:-0.44px;line-height:15.83px;color:#cccccc"><span style="color:#d4d4d4">        </span><span style="color:#6a9955"># ── 1. Объём одного полного поддона ─────────────────────────────</span></div>
<div class="t mono" style="left:232px;top:330.92px;width:40px;text-align:right;font-size:12.4px;letter-spacing:-0.44px;line-height:15.83px;color:#6e7681">489</div>
<div class="t mono" style="left:294.5px;top:330.92px;font-size:12.4px;letter-spacing:-0.44px;line-height:15.83px;color:#cccccc"><span style="color:#d4d4d4">        </span><span style="color:#9cdcfe">normal_row_total</span><span style="color:#d4d4d4"> = </span><span style="color:#9cdcfe">boxes_per_row</span><span style="color:#d4d4d4"> * </span><span style="color:#9cdcfe">items_per_box</span></div>
<div class="t mono" style="left:232px;top:346.75px;width:40px;text-align:right;font-size:12.4px;letter-spacing:-0.44px;line-height:15.83px;color:#6e7681">490</div>
<div class="t mono" style="left:294.5px;top:346.75px;font-size:12.4px;letter-spacing:-0.44px;line-height:15.83px;color:#cccccc"><span style="color:#d4d4d4">        </span><span style="color:#9cdcfe">first_counted_row_total</span><span style="color:#d4d4d4"> = </span><span style="color:#dcdcaa">max</span><span style="color:#ffd700">(</span><span style="color:#9cdcfe">boxes_per_row</span><span style="color:#d4d4d4"> - </span><span style="color:#9cdcfe">boxes_to_skip</span><span style="color:#d4d4d4">, </span><span style="color:#b5cea8">0</span><span style="color:#ffd700">)</span></div>
<div class="t mono" style="left:232px;top:362.58px;width:40px;text-align:right;font-size:12.4px;letter-spacing:-0.44px;line-height:15.83px;color:#6e7681">491</div>
<div class="t mono" style="left:294.5px;top:362.58px;font-size:12.4px;letter-spacing:-0.44px;line-height:15.83px;color:#cccccc"><span style="color:#d4d4d4">        </span><span style="color:#9cdcfe">pallet_total</span><span style="color:#d4d4d4"> = </span><span style="color:#9cdcfe">rows_per_pallet</span><span style="color:#d4d4d4"> * </span><span style="color:#9cdcfe">normal_row_total</span><span style="color:#6a9955">  # полный поддон</span></div>
<div class="t mono" style="left:232px;top:378.41px;width:40px;text-align:right;font-size:12.4px;letter-spacing:-0.44px;line-height:15.83px;color:#6e7681">492</div>
<div class="t mono" style="left:294.5px;top:378.41px;font-size:12.4px;letter-spacing:-0.44px;line-height:15.83px;color:#cccccc"></div>
<div class="t mono" style="left:232px;top:394.24px;width:40px;text-align:right;font-size:12.4px;letter-spacing:-0.44px;line-height:15.83px;color:#6e7681">493</div>
<div class="t mono" style="left:294.5px;top:394.24px;font-size:12.4px;letter-spacing:-0.44px;line-height:15.83px;color:#cccccc"><span style="color:#d4d4d4">        </span><span style="color:#6a9955"># ── 2. Сколько поддонов нужно? ─────────────────────────────</span></div>
<div class="t mono" style="left:232px;top:410.07px;width:40px;text-align:right;font-size:12.4px;letter-spacing:-0.44px;line-height:15.83px;color:#6e7681">494</div>
<div class="t mono" style="left:294.5px;top:410.07px;font-size:12.4px;letter-spacing:-0.44px;line-height:15.83px;color:#cccccc"><span style="color:#d4d4d4">        </span><span style="color:#9cdcfe">full_pallets</span><span style="color:#d4d4d4"> = </span><span style="color:#9cdcfe">total_items</span><span style="color:#d4d4d4"> // </span><span style="color:#9cdcfe">pallet_total</span></div>
<div class="t mono" style="left:232px;top:425.90000000000003px;width:40px;text-align:right;font-size:12.4px;letter-spacing:-0.44px;line-height:15.83px;color:#6e7681">495</div>
<div class="t mono" style="left:294.5px;top:425.90000000000003px;font-size:12.4px;letter-spacing:-0.44px;line-height:15.83px;color:#cccccc"><span style="color:#d4d4d4">        </span><span style="color:#9cdcfe">remainder</span><span style="color:#d4d4d4"> = </span><span style="color:#9cdcfe">total_items</span><span style="color:#d4d4d4"> % </span><span style="color:#9cdcfe">pallet_total</span></div>
<div class="t mono" style="left:232px;top:441.73px;width:40px;text-align:right;font-size:12.4px;letter-spacing:-0.44px;line-height:15.83px;color:#6e7681">496</div>
<div class="t mono" style="left:294.5px;top:441.73px;font-size:12.4px;letter-spacing:-0.44px;line-height:15.83px;color:#cccccc"><span style="color:#d4d4d4">        </span><span style="color:#9cdcfe">pallets_needed</span><span style="color:#d4d4d4"> = </span><span style="color:#9cdcfe">full_pallets</span><span style="color:#d4d4d4"> + </span><span style="color:#ffd700">(</span><span style="color:#b5cea8">1</span><span style="color:#d4d4d4"> </span><span style="color:#c586c0">if</span><span style="color:#9cdcfe"> remainder </span><span style="color:#c586c0">else</span><span style="color:#d4d4d4"> </span><span style="color:#b5cea8">0</span><span style="color:#ffd700">)</span></div>
<div class="t mono" style="left:232px;top:457.56px;width:40px;text-align:right;font-size:12.4px;letter-spacing:-0.44px;line-height:15.83px;color:#6e7681">497</div>
<div class="t mono" style="left:294.5px;top:457.56px;font-size:12.4px;letter-spacing:-0.44px;line-height:15.83px;color:#cccccc"></div>
<div class="t mono" style="left:232px;top:473.39px;width:40px;text-align:right;font-size:12.4px;letter-spacing:-0.44px;line-height:15.83px;color:#6e7681">498</div>
<div class="t mono" style="left:294.5px;top:473.39px;font-size:12.4px;letter-spacing:-0.44px;line-height:15.83px;color:#cccccc"><span style="color:#d4d4d4">        </span><span style="color:#6a9955"># ── 3. Формируем вывод ──────────────────────────────────────</span></div>
<div class="t mono" style="left:232px;top:489.22px;width:40px;text-align:right;font-size:12.4px;letter-spacing:-0.44px;line-height:15.83px;color:#6e7681">499</div>
<div class="t mono" style="left:294.5px;top:489.22px;font-size:12.4px;letter-spacing:-0.44px;line-height:15.83px;color:#cccccc"><span style="color:#d4d4d4">        </span><span style="color:#9cdcfe">global_cumulative</span><span style="color:#d4d4d4"> = </span><span style="color:#b5cea8">0</span><span style="color:#6a9955">  # общий итог по всей партии</span></div>
<div class="t mono" style="left:232px;top:505.05px;width:40px;text-align:right;font-size:12.4px;letter-spacing:-0.44px;line-height:15.83px;color:#6e7681">500</div>
<div class="t mono" style="left:294.5px;top:505.05px;font-size:12.4px;letter-spacing:-0.44px;line-height:15.83px;color:#cccccc"><span style="color:#d4d4d4">        </span><span style="color:#9cdcfe">row_global</span><span style="color:#d4d4d4"> = </span><span style="color:#b5cea8">0</span><span style="color:#6a9955">  # номер строки во всей партии</span></div>
<div class="t mono" style="left:232px;top:520.88px;width:40px;text-align:right;font-size:12.4px;letter-spacing:-0.44px;line-height:15.83px;color:#6e7681">501</div>
<div class="t mono" style="left:294.5px;top:520.88px;font-size:12.4px;letter-spacing:-0.44px;line-height:15.83px;color:#cccccc"><span style="color:#d4d4d4">        </span><span style="color:#9cdcfe">lines</span><span style="color:#d4d4d4"> = </span><span style="color:#ffd700">[]</span></div>
<div class="t mono" style="left:232px;top:536.71px;width:40px;text-align:right;font-size:12.4px;letter-spacing:-0.44px;line-height:15.83px;color:#6e7681">502</div>
<div class="t mono" style="left:294.5px;top:536.71px;font-size:12.4px;letter-spacing:-0.44px;line-height:15.83px;color:#cccccc"></div>
<div class="t mono" style="left:232px;top:552.54px;width:40px;text-align:right;font-size:12.4px;letter-spacing:-0.44px;line-height:15.83px;color:#6e7681">503</div>
<div class="t mono" style="left:294.5px;top:552.54px;font-size:12.4px;letter-spacing:-0.44px;line-height:15.83px;color:#cccccc"><span style="color:#d4d4d4">        </span><span style="color:#9cdcfe">lines</span><span style="color:#d4d4d4">.</span><span style="color:#dcdcaa">append</span><span style="color:#ffd700">(</span><span style="color:#569cd6">f</span><span style="color:#ce9178">"</span><span style="color:#da70d6">{</span><span style="color:#9cdcfe">line_number</span><span style="color:#da70d6">}</span><span style="color:#da70d6">{</span><span style="color:#9cdcfe">shift_number</span><span style="color:#da70d6">}</span><span style="color:#ce9178">\n</span><span style="color:#ce9178">Партия </span><span style="color:#da70d6">{</span><span style="color:#9cdcfe">batch</span></div>
<div class="t mono" style="left:232px;top:568.37px;width:40px;text-align:right;font-size:12.4px;letter-spacing:-0.44px;line-height:15.83px;color:#6e7681">504</div>
<div class="t mono" style="left:294.5px;top:568.37px;font-size:12.4px;letter-spacing:-0.44px;line-height:15.83px;color:#cccccc"></div>
<div class="t mono" style="left:232px;top:584.1999999999999px;width:40px;text-align:right;font-size:12.4px;letter-spacing:-0.44px;line-height:15.83px;color:#6e7681">505</div>
<div class="t mono" style="left:294.5px;top:584.1999999999999px;font-size:12.4px;letter-spacing:-0.44px;line-height:15.83px;color:#cccccc"><span style="color:#d4d4d4">        </span><span style="color:#c586c0">for</span><span style="color:#9cdcfe"> p </span><span style="color:#c586c0">in</span><span style="color:#d4d4d4"> </span><span style="color:#4ec9b0">range</span><span style="color:#ffd700">(</span><span style="color:#b5cea8">1</span><span style="color:#d4d4d4">, </span><span style="color:#9cdcfe">pallets_needed</span><span style="color:#d4d4d4"> + </span><span style="color:#b5cea8">1</span><span style="color:#ffd700">)</span><span style="color:#d4d4d4">:</span></div>
<div class="t mono" style="left:232px;top:600.03px;width:40px;text-align:right;font-size:12.4px;letter-spacing:-0.44px;line-height:15.83px;color:#6e7681">506</div>
<div class="t mono" style="left:294.5px;top:600.03px;font-size:12.4px;letter-spacing:-0.44px;line-height:15.83px;color:#cccccc"><span style="color:#d4d4d4">            </span><span style="color:#6a9955"># Сколько товаров находится в текущем поддоне?</span></div>
<svg style="left:610px;top:328.09px" width="150" height="3" viewBox="0 0 150 3"><path d="M0 2.5l2-2 2 2M4 2.5l2-2 2 2M8 2.5l2-2 2 2M12 2.5l2-2 2 2M16 2.5l2-2 2 2M20 2.5l2-2 2 2M24 2.5l2-2 2 2M28 2.5l2-2 2 2M32 2.5l2-2 2 2M36 2.5l2-2 2 2M40 2.5l2-2 2 2M44 2.5l2-2 2 2M48 2.5l2-2 2 2M52 2.5l2-2 2 2M56 2.5l2-2 2 2M60 2.5l2-2 2 2M64 2.5l2-2 2 2M68 2.5l2-2 2 2M72 2.5l2-2 2 2M76 2.5l2-2 2 2M80 2.5l2-2 2 2M84 2.5l2-2 2 2M88 2.5l2-2 2 2M92 2.5l2-2 2 2M96 2.5l2-2 2 2M100 2.5l2-2 2 2M104 2.5l2-2 2 2M108 2.5l2-2 2 2M112 2.5l2-2 2 2M116 2.5l2-2 2 2M120 2.5l2-2 2 2M124 2.5l2-2 2 2M128 2.5l2-2 2 2M132 2.5l2-2 2 2M136 2.5l2-2 2 2M140 2.5l2-2 2 2M144 2.5l2-2 2 2" stroke="#f14c4c" stroke-width=".9" fill="none"/></svg>
<svg style="left:575px;top:407.24px" width="185" height="3" viewBox="0 0 185 3"><path d="M0 2.5l2-2 2 2M4 2.5l2-2 2 2M8 2.5l2-2 2 2M12 2.5l2-2 2 2M16 2.5l2-2 2 2M20 2.5l2-2 2 2M24 2.5l2-2 2 2M28 2.5l2-2 2 2M32 2.5l2-2 2 2M36 2.5l2-2 2 2M40 2.5l2-2 2 2M44 2.5l2-2 2 2M48 2.5l2-2 2 2M52 2.5l2-2 2 2M56 2.5l2-2 2 2M60 2.5l2-2 2 2M64 2.5l2-2 2 2M68 2.5l2-2 2 2M72 2.5l2-2 2 2M76 2.5l2-2 2 2M80 2.5l2-2 2 2M84 2.5l2-2 2 2M88 2.5l2-2 2 2M92 2.5l2-2 2 2M96 2.5l2-2 2 2M100 2.5l2-2 2 2M104 2.5l2-2 2 2M108 2.5l2-2 2 2M112 2.5l2-2 2 2M116 2.5l2-2 2 2M120 2.5l2-2 2 2M124 2.5l2-2 2 2M128 2.5l2-2 2 2M132 2.5l2-2 2 2M136 2.5l2-2 2 2M140 2.5l2-2 2 2M144 2.5l2-2 2 2M148 2.5l2-2 2 2M152 2.5l2-2 2 2M156 2.5l2-2 2 2M160 2.5l2-2 2 2M164 2.5l2-2 2 2M168 2.5l2-2 2 2M172 2.5l2-2 2 2M176 2.5l2-2 2 2M180 2.5l2-2 2 2" stroke="#f14c4c" stroke-width=".9" fill="none"/></svg>
<svg style="left:520px;top:486.39px" width="240" height="3" viewBox="0 0 240 3"><path d="M0 2.5l2-2 2 2M4 2.5l2-2 2 2M8 2.5l2-2 2 2M12 2.5l2-2 2 2M16 2.5l2-2 2 2M20 2.5l2-2 2 2M24 2.5l2-2 2 2M28 2.5l2-2 2 2M32 2.5l2-2 2 2M36 2.5l2-2 2 2M40 2.5l2-2 2 2M44 2.5l2-2 2 2M48 2.5l2-2 2 2M52 2.5l2-2 2 2M56 2.5l2-2 2 2M60 2.5l2-2 2 2M64 2.5l2-2 2 2M68 2.5l2-2 2 2M72 2.5l2-2 2 2M76 2.5l2-2 2 2M80 2.5l2-2 2 2M84 2.5l2-2 2 2M88 2.5l2-2 2 2M92 2.5l2-2 2 2M96 2.5l2-2 2 2M100 2.5l2-2 2 2M104 2.5l2-2 2 2M108 2.5l2-2 2 2M112 2.5l2-2 2 2M116 2.5l2-2 2 2M120 2.5l2-2 2 2M124 2.5l2-2 2 2M128 2.5l2-2 2 2M132 2.5l2-2 2 2M136 2.5l2-2 2 2M140 2.5l2-2 2 2M144 2.5l2-2 2 2M148 2.5l2-2 2 2M152 2.5l2-2 2 2M156 2.5l2-2 2 2M160 2.5l2-2 2 2M164 2.5l2-2 2 2M168 2.5l2-2 2 2M172 2.5l2-2 2 2M176 2.5l2-2 2 2M180 2.5l2-2 2 2M184 2.5l2-2 2 2M188 2.5l2-2 2 2M192 2.5l2-2 2 2M196 2.5l2-2 2 2M200 2.5l2-2 2 2M204 2.5l2-2 2 2M208 2.5l2-2 2 2M212 2.5l2-2 2 2M216 2.5l2-2 2 2M220 2.5l2-2 2 2M224 2.5l2-2 2 2M228 2.5l2-2 2 2M232 2.5l2-2 2 2M236 2.5l2-2 2 2" stroke="#f14c4c" stroke-width=".9" fill="none"/></svg>
<div class="a" style="left:237px;top:76px;width:1258px;height:31px;background:#1f1f1f"></div>
<div class="a" style="left:237px;top:107px;width:1258px;height:2px;background:linear-gradient(#000000,rgba(0,0,0,0))"></div>
<div class="t mono" style="left:232px;top:78.9px;width:40px;text-align:right;font-size:12.4px;letter-spacing:-0.44px;line-height:15.83px;color:#6e7681">17</div>
<div class="t mono" style="left:294.5px;top:78.9px;font-size:12.4px;letter-spacing:-0.44px;line-height:15.83px;color:#cccccc"><span style="color:#569cd6">class</span><span style="color:#d4d4d4"> </span><span style="color:#4ec9b0">PalletCalculator</span><span style="color:#ffd700">(</span><span style="color:#4ec9b0">tk</span><span style="color:#d4d4d4">.</span><span style="color:#4ec9b0">Tk</span><span style="color:#ffd700">)</span><span style="color:#d4d4d4">:</span></div>
<div class="t mono" style="left:232px;top:94.75px;width:40px;text-align:right;font-size:12.4px;letter-spacing:-0.44px;line-height:15.83px;color:#6e7681">455</div>
<div class="t mono" style="left:294.5px;top:94.75px;font-size:12.4px;letter-spacing:-0.44px;line-height:15.83px;color:#cccccc"><span style="color:#d4d4d4">    </span><span style="color:#569cd6">def</span><span style="color:#d4d4d4"> </span><span style="color:#dcdcaa">calculate</span><span style="color:#ffd700">(</span><span style="color:#9cdcfe">self</span><span style="color:#ffd700">)</span><span style="color:#d4d4d4">:</span></div>
<div class="t" style="left:249.7px;top:62px;font-size:10.8px;color:#a9a9a9">media</div>
<div class="t" style="left:292.2px;top:62px;font-size:10.8px;color:#a9a9a9">igor</div>
<div class="t" style="left:324.7px;top:62px;font-size:10.8px;color:#a9a9a9">WINDOWS 11</div>
<div class="t" style="left:405.5px;top:62px;font-size:10.8px;color:#a9a9a9">Users</div>
<div class="t" style="left:445.5px;top:62px;font-size:10.8px;color:#a9a9a9">Игорь</div>
<div class="t" style="left:489px;top:62px;font-size:10.8px;color:#a9a9a9">output</div>
<svg style="left:282.8px;top:62px" width="6" height="9" viewBox="0 0 6 9"><path d="M1 .8L4.8 4.5 1 8.2" stroke="#a9a9a9" stroke-width="1" fill="none"/></svg>
<svg style="left:315.3px;top:62px" width="6" height="9" viewBox="0 0 6 9"><path d="M1 .8L4.8 4.5 1 8.2" stroke="#a9a9a9" stroke-width="1" fill="none"/></svg>
<svg style="left:395.3px;top:62px" width="6" height="9" viewBox="0 0 6 9"><path d="M1 .8L4.8 4.5 1 8.2" stroke="#a9a9a9" stroke-width="1" fill="none"/></svg>
<svg style="left:436px;top:62px" width="6" height="9" viewBox="0 0 6 9"><path d="M1 .8L4.8 4.5 1 8.2" stroke="#a9a9a9" stroke-width="1" fill="none"/></svg>
<svg style="left:480.3px;top:62px" width="6" height="9" viewBox="0 0 6 9"><path d="M1 .8L4.8 4.5 1 8.2" stroke="#a9a9a9" stroke-width="1" fill="none"/></svg>
<svg style="left:525.3px;top:62px" width="6" height="9" viewBox="0 0 6 9"><path d="M1 .8L4.8 4.5 1 8.2" stroke="#a9a9a9" stroke-width="1" fill="none"/></svg>
<svg style="left:539px;top:62px" width="9.5" height="9.5" viewBox="0 0 22 22"><path d="M10.5 1C6 1 6.3 3 6.3 3v2.1h4.3v.7H4.1S1 5.5 1 10.2s2.7 4.5 2.7 4.5h1.6v-2.2s-.1-2.7 2.6-2.7h4.4s2.6 0 2.6-2.5V3.1S15.3 1 10.5 1z" fill="#3c78aa"/><path d="M11.5 21c4.5 0 4.2-2 4.2-2v-2.1h-4.3v-.7h6.5s3.1.3 3.1-4.4-2.7-4.5-2.7-4.5h-1.6v2.2s.1 2.7-2.6 2.7H9.7s-2.6 0-2.6 2.5v4.2S6.7 21 11.5 21z" fill="#6aa5cf"/></svg>
<div class="t" style="left:555px;top:62px;font-size:10.8px;color:#a9a9a9">AerosollCalcPallet.py</div>
<svg style="left:661px;top:62px" width="6" height="9" viewBox="0 0 6 9"><path d="M1 .8L4.8 4.5 1 8.2" stroke="#a9a9a9" stroke-width="1" fill="none"/></svg>
<div class="t" style="left:671px;top:62px;font-size:10.8px;color:#a9a9a9">...</div>
<div class="a" style="left:1128px;top:77px;width:350px;height:27px;background:#202020;box-shadow:0 2px 4px 0 #000;border-left:2px solid #3a3a3a"></div>
<svg style="left:1134px;top:85px" width="7" height="10" viewBox="0 0 7 10"><path d="M1.5 1l4 4-4 4" stroke="#cccccc" stroke-width="1.1" fill="none"/></svg>
<div class="a" style="left:1145px;top:80px;width:130px;height:20px;background:#313131;border-radius:2px"></div>
<div class="t" style="left:1151px;top:85.5px;font-size:10.9px;color:#b0b0b0;width:67px;overflow:hidden">Цель проекта</div>
<div class="t" style="left:1222.5px;top:85.5px;font-size:10px;color:#cccccc">Aa</div>
<div class="t" style="left:1239.5px;top:85px;font-size:10px;color:#cccccc;text-decoration:underline">ab</div>
<div class="t" style="left:1259px;top:84px;font-size:12px;color:#cccccc">.*</div>
<div class="t" style="left:1278.8px;top:85.5px;font-size:10px;color:#f14c4c">Результаты отсутствуют</div>
<svg style="left:1398px;top:84px" width="10" height="11" viewBox="0 0 10 11"><path d="M5 10.5V1M1 5l4-4 4 4" stroke="#6f6f6f" stroke-width="1.1" fill="none"/></svg>
<svg style="left:1418px;top:84px" width="10" height="11" viewBox="0 0 10 11"><path d="M5 .5V10M1 6l4 4 4-4" stroke="#6f6f6f" stroke-width="1.1" fill="none"/></svg>
<svg style="left:1437px;top:85px" width="12" height="10" viewBox="0 0 12 10"><path d="M1 1.5h10M1 5h10M1 8.5h7" stroke="#cccccc" stroke-width="1.1"/></svg>
<svg style="left:1459px;top:85px" width="9" height="9" viewBox="0 0 9 9"><path d="M.5.5l8 8M8.5.5l-8 8" stroke="#cccccc" stroke-width="1.1"/></svg>
<div class="a" style="left:1507.9px;top:77.00px;width:2.0px;height:1px;background:#a06e5a;opacity:.65"></div>
<div class="a" style="left:1510.7px;top:77.00px;width:2.0px;height:1px;background:#8a8a8a;opacity:.65"></div>
<div class="a" style="left:1513.5px;top:77.00px;width:7.0px;height:1px;background:#a06e5a;opacity:.65"></div>
<div class="a" style="left:1521.3px;top:77.00px;width:8.0px;height:1px;background:#8c5a8c;opacity:.65"></div>
<div class="a" style="left:1530.1px;top:77.00px;width:5.0px;height:1px;background:#4f86a8;opacity:.65"></div>
<div class="a" style="left:1536.8px;top:77.00px;width:5.0px;height:1px;background:#a5a57a;opacity:.65"></div>
<div class="a" style="left:1542.6px;top:77.00px;width:4.0px;height:1px;background:#a5a57a;opacity:.65"></div>
<div class="a" style="left:1547.4px;top:77.00px;width:3.0px;height:1px;background:#8a8a8a;opacity:.65"></div>
<div class="a" style="left:1552.1px;top:77.00px;width:9.0px;height:1px;background:#8a8a8a;opacity:.65"></div>
<div class="a" style="left:1561.9px;top:77.00px;width:1.0px;height:1px;background:#4f86a8;opacity:.65"></div>
<div class="a" style="left:1507.9px;top:78.67px;width:4.0px;height:1px;background:#547a48;opacity:.65"></div>
<div class="a" style="left:1507.9px;top:80.34px;width:4.0px;height:1px;background:#a07c58;opacity:.65"></div>
<div class="a" style="left:1512.7px;top:80.34px;width:6.0px;height:1px;background:#4f86a8;opacity:.65"></div>
<div class="a" style="left:1519.5px;top:80.34px;width:4.4px;height:1px;background:#8a8a8a;opacity:.65"></div>
<div class="a" style="left:1507.9px;top:82.01px;width:6.0px;height:1px;background:#6f9cb8;opacity:.65"></div>
<div class="a" style="left:1507.9px;top:83.68px;width:4.0px;height:1px;background:#a06e5a;opacity:.65"></div>
<div class="a" style="left:1512.7px;top:83.68px;width:4.0px;height:1px;background:#4f86a8;opacity:.65"></div>
<div class="a" style="left:1517.5px;top:83.68px;width:2.0px;height:1px;background:#3f8c7e;opacity:.65"></div>
<div class="a" style="left:1520.3px;top:83.68px;width:2.0px;height:1px;background:#8c5a8c;opacity:.65"></div>
<div class="a" style="left:1523.1px;top:83.68px;width:7.0px;height:1px;background:#a5a57a;opacity:.65"></div>
<div class="a" style="left:1531.8px;top:83.68px;width:2.0px;height:1px;background:#a06e5a;opacity:.65"></div>
<div class="a" style="left:1507.9px;top:85.35px;width:3.0px;height:1px;background:#a07c58;opacity:.65"></div>
<div class="a" style="left:1511.7px;top:85.35px;width:7.0px;height:1px;background:#8c5a8c;opacity:.65"></div>
<div class="a" style="left:1519.5px;top:85.35px;width:4.4px;height:1px;background:#547a48;opacity:.65"></div>
<div class="a" style="left:1507.9px;top:88.69px;width:2.0px;height:1px;background:#a5a57a;opacity:.65"></div>
<div class="a" style="left:1510.7px;top:88.69px;width:5.0px;height:1px;background:#3f8c7e;opacity:.65"></div>
<div class="a" style="left:1517.4px;top:88.69px;width:7.0px;height:1px;background:#8a8a8a;opacity:.65"></div>
<div class="a" style="left:1525.2px;top:88.69px;width:2.7px;height:1px;background:#8c5a8c;opacity:.65"></div>
<div class="a" style="left:1504.6px;top:90.36px;width:4.0px;height:1px;background:#547a48;opacity:.65"></div>
<div class="a" style="left:1509.4px;top:90.36px;width:4.0px;height:1px;background:#4f86a8;opacity:.65"></div>
<div class="a" style="left:1504.6px;top:92.03px;width:2.0px;height:1px;background:#a07c58;opacity:.65"></div>
<div class="a" style="left:1508.3px;top:92.03px;width:7.0px;height:1px;background:#547a48;opacity:.65"></div>
<div class="a" style="left:1516.1px;top:92.03px;width:8.0px;height:1px;background:#8a8a8a;opacity:.65"></div>
<div class="a" style="left:1524.9px;top:92.03px;width:2.0px;height:1px;background:#a06e5a;opacity:.65"></div>
<div class="a" style="left:1527.7px;top:92.03px;width:5.0px;height:1px;background:#8a8a8a;opacity:.65"></div>
<div class="a" style="left:1534.4px;top:92.03px;width:4.0px;height:1px;background:#a5a57a;opacity:.65"></div>
<div class="a" style="left:1504.6px;top:93.70px;width:6.0px;height:1px;background:#547a48;opacity:.65"></div>
<div class="a" style="left:1504.6px;top:95.37px;width:4.0px;height:1px;background:#a06e5a;opacity:.65"></div>
<div class="a" style="left:1504.6px;top:97.04px;width:6.0px;height:1px;background:#a06e5a;opacity:.65"></div>
<div class="a" style="left:1511.4px;top:97.04px;width:4.0px;height:1px;background:#6f9cb8;opacity:.65"></div>
<div class="a" style="left:1516.2px;top:97.04px;width:8.4px;height:1px;background:#8a8a8a;opacity:.65"></div>
<div class="a" style="left:1504.6px;top:98.71px;width:3.0px;height:1px;background:#a06e5a;opacity:.65"></div>
<div class="a" style="left:1508.4px;top:98.71px;width:0.2px;height:1px;background:#8c5a8c;opacity:.65"></div>
<div class="a" style="left:1511.2px;top:100.38px;width:6.0px;height:1px;background:#3f8c7e;opacity:.65"></div>
<div class="a" style="left:1511.2px;top:102.05px;width:6.0px;height:1px;background:#547a48;opacity:.65"></div>
<div class="a" style="left:1518.0px;top:102.05px;width:4.0px;height:1px;background:#4f86a8;opacity:.65"></div>
<div class="a" style="left:1522.8px;top:102.05px;width:10.0px;height:1px;background:#547a48;opacity:.65"></div>
<div class="a" style="left:1533.6px;top:102.05px;width:6.0px;height:1px;background:#a06e5a;opacity:.65"></div>
<div class="a" style="left:1540.4px;top:102.05px;width:10.0px;height:1px;background:#3f8c7e;opacity:.65"></div>
<div class="a" style="left:1551.2px;top:102.05px;width:4.0px;height:1px;background:#3f8c7e;opacity:.65"></div>
<div class="a" style="left:1511.2px;top:103.72px;width:9.0px;height:1px;background:#3f8c7e;opacity:.65"></div>
<div class="a" style="left:1521.0px;top:103.72px;width:2.2px;height:1px;background:#8a8a8a;opacity:.65"></div>
<div class="a" style="left:1511.2px;top:105.39px;width:9.0px;height:1px;background:#547a48;opacity:.65"></div>
<div class="a" style="left:1521.9px;top:105.39px;width:3.0px;height:1px;background:#a5a57a;opacity:.65"></div>
<div class="a" style="left:1525.7px;top:105.39px;width:10.0px;height:1px;background:#a5a57a;opacity:.65"></div>
<div class="a" style="left:1536.5px;top:105.39px;width:0.7px;height:1px;background:#547a48;opacity:.65"></div>
<div class="a" style="left:1511.2px;top:107.06px;width:4.0px;height:1px;background:#a07c58;opacity:.65"></div>
<div class="a" style="left:1516.9px;top:107.06px;width:4.0px;height:1px;background:#4f86a8;opacity:.65"></div>
<div class="a" style="left:1521.7px;top:107.06px;width:5.0px;height:1px;background:#8a8a8a;opacity:.65"></div>
<div class="a" style="left:1527.5px;top:107.06px;width:4.0px;height:1px;background:#6f9cb8;opacity:.65"></div>
<div class="a" style="left:1532.3px;top:107.06px;width:4.0px;height:1px;background:#a06e5a;opacity:.65"></div>
<div class="a" style="left:1537.1px;top:107.06px;width:10.0px;height:1px;background:#4f86a8;opacity:.65"></div>
<div class="a" style="left:1547.9px;top:107.06px;width:7.3px;height:1px;background:#3f8c7e;opacity:.65"></div>
<div class="a" style="left:1511.2px;top:108.73px;width:5.0px;height:1px;background:#3f8c7e;opacity:.65"></div>
<div class="a" style="left:1517.0px;top:108.73px;width:7.0px;height:1px;background:#a5a57a;opacity:.65"></div>
<div class="a" style="left:1524.8px;top:108.73px;width:2.4px;height:1px;background:#6f9cb8;opacity:.65"></div>
<div class="a" style="left:1511.2px;top:110.40px;width:6.0px;height:1px;background:#547a48;opacity:.65"></div>
<div class="a" style="left:1514.5px;top:112.07px;width:5.0px;height:1px;background:#8a8a8a;opacity:.65"></div>
<div class="a" style="left:1514.5px;top:113.74px;width:7.0px;height:1px;background:#a06e5a;opacity:.65"></div>
<div class="a" style="left:1522.3px;top:113.74px;width:4.0px;height:1px;background:#a5a57a;opacity:.65"></div>
<div class="a" style="left:1528.0px;top:113.74px;width:9.0px;height:1px;background:#a07c58;opacity:.65"></div>
<div class="a" style="left:1537.8px;top:113.74px;width:3.0px;height:1px;background:#3f8c7e;opacity:.65"></div>
<div class="a" style="left:1542.5px;top:113.74px;width:2.0px;height:1px;background:#a5a57a;opacity:.65"></div>
<div class="a" style="left:1545.3px;top:113.74px;width:7.0px;height:1px;background:#8c5a8c;opacity:.65"></div>
<div class="a" style="left:1553.1px;top:113.74px;width:7.0px;height:1px;background:#a5a57a;opacity:.65"></div>
<div class="a" style="left:1560.9px;top:113.74px;width:8.0px;height:1px;background:#a07c58;opacity:.65"></div>
<div class="a" style="left:1514.5px;top:115.41px;width:6.0px;height:1px;background:#8a8a8a;opacity:.65"></div>
<div class="a" style="left:1514.5px;top:117.08px;width:9.0px;height:1px;background:#547a48;opacity:.65"></div>
<div class="a" style="left:1524.3px;top:117.08px;width:2.0px;height:1px;background:#3f8c7e;opacity:.65"></div>
<div class="a" style="left:1527.1px;top:117.08px;width:7.4px;height:1px;background:#547a48;opacity:.65"></div>
<div class="a" style="left:1514.5px;top:118.75px;width:5.0px;height:1px;background:#547a48;opacity:.65"></div>
<div class="a" style="left:1520.3px;top:118.75px;width:4.0px;height:1px;background:#a5a57a;opacity:.65"></div>
<div class="a" style="left:1525.1px;top:118.75px;width:9.0px;height:1px;background:#8c5a8c;opacity:.65"></div>
<div class="a" style="left:1535.8px;top:118.75px;width:6.0px;height:1px;background:#a07c58;opacity:.65"></div>
<div class="a" style="left:1542.6px;top:118.75px;width:2.0px;height:1px;background:#a07c58;opacity:.65"></div>
<div class="a" style="left:1545.4px;top:118.75px;width:6.0px;height:1px;background:#8a8a8a;opacity:.65"></div>
<div class="a" style="left:1553.1px;top:118.75px;width:5.4px;height:1px;background:#547a48;opacity:.65"></div>
<div class="a" style="left:1514.5px;top:120.42px;width:2.0px;height:1px;background:#8a8a8a;opacity:.65"></div>
<div class="a" style="left:1517.3px;top:120.42px;width:6.0px;height:1px;background:#8c5a8c;opacity:.65"></div>
<div class="a" style="left:1514.5px;top:122.09px;width:2.0px;height:1px;background:#a06e5a;opacity:.65"></div>
<div class="a" style="left:1517.3px;top:122.09px;width:7.0px;height:1px;background:#8a8a8a;opacity:.65"></div>
<div class="a" style="left:1525.1px;top:122.09px;width:2.0px;height:1px;background:#547a48;opacity:.65"></div>
<div class="a" style="left:1528.8px;top:122.09px;width:9.0px;height:1px;background:#6f9cb8;opacity:.65"></div>
<div class="a" style="left:1539.5px;top:122.09px;width:10.0px;height:1px;background:#a07c58;opacity:.65"></div>
<div class="a" style="left:1550.3px;top:122.09px;width:8.0px;height:1px;background:#a5a57a;opacity:.65"></div>
<div class="a" style="left:1560.0px;top:122.09px;width:9.0px;height:1px;background:#a5a57a;opacity:.65"></div>
<div class="a" style="left:1517.8px;top:123.76px;width:3.0px;height:1px;background:#547a48;opacity:.65"></div>
<div class="a" style="left:1521.6px;top:123.76px;width:2.2px;height:1px;background:#547a48;opacity:.65"></div>
<div class="a" style="left:1517.8px;top:125.43px;width:4.0px;height:1px;background:#a06e5a;opacity:.65"></div>
<div class="a" style="left:1517.8px;top:127.10px;width:10.0px;height:1px;background:#8a8a8a;opacity:.65"></div>
<div class="a" style="left:1528.6px;top:127.10px;width:10.0px;height:1px;background:#4f86a8;opacity:.65"></div>
<div class="a" style="left:1539.4px;top:127.10px;width:4.4px;height:1px;background:#547a48;opacity:.65"></div>
<div class="a" style="left:1517.8px;top:128.77px;width:6.0px;height:1px;background:#a5a57a;opacity:.65"></div>
<div class="a" style="left:1517.8px;top:130.44px;width:3.0px;height:1px;background:#6f9cb8;opacity:.65"></div>
<div class="a" style="left:1521.6px;top:130.44px;width:2.2px;height:1px;background:#8a8a8a;opacity:.65"></div>
<div class="a" style="left:1517.8px;top:132.11px;width:8.0px;height:1px;background:#8a8a8a;opacity:.65"></div>
<div class="a" style="left:1526.6px;top:132.11px;width:3.2px;height:1px;background:#4f86a8;opacity:.65"></div>
<div class="a" style="left:1517.8px;top:135.45px;width:3.0px;height:1px;background:#a5a57a;opacity:.65"></div>
<div class="a" style="left:1522.5px;top:135.45px;width:1.3px;height:1px;background:#4f86a8;opacity:.65"></div>
<div class="a" style="left:1517.8px;top:138.79px;width:7.0px;height:1px;background:#4f86a8;opacity:.65"></div>
<div class="a" style="left:1525.6px;top:138.79px;width:6.0px;height:1px;background:#8a8a8a;opacity:.65"></div>
<div class="a" style="left:1533.3px;top:138.79px;width:10.0px;height:1px;background:#547a48;opacity:.65"></div>
<div class="a" style="left:1517.8px;top:140.46px;width:9.0px;height:1px;background:#a07c58;opacity:.65"></div>
<div class="a" style="left:1514.5px;top:142.13px;width:5.0px;height:1px;background:#a5a57a;opacity:.65"></div>
<div class="a" style="left:1514.5px;top:143.80px;width:3.0px;height:1px;background:#4f86a8;opacity:.65"></div>
<div class="a" style="left:1518.3px;top:143.80px;width:3.0px;height:1px;background:#8c5a8c;opacity:.65"></div>
<div class="a" style="left:1523.0px;top:143.80px;width:9.0px;height:1px;background:#a07c58;opacity:.65"></div>
<div class="a" style="left:1532.8px;top:143.80px;width:7.7px;height:1px;background:#a06e5a;opacity:.65"></div>
<div class="a" style="left:1514.5px;top:147.14px;width:2.0px;height:1px;background:#8a8a8a;opacity:.65"></div>
<div class="a" style="left:1517.3px;top:147.14px;width:5.0px;height:1px;background:#6f9cb8;opacity:.65"></div>
<div class="a" style="left:1523.1px;top:147.14px;width:9.0px;height:1px;background:#a07c58;opacity:.65"></div>
<div class="a" style="left:1532.9px;top:147.14px;width:8.0px;height:1px;background:#3f8c7e;opacity:.65"></div>
<div class="a" style="left:1541.7px;top:147.14px;width:6.0px;height:1px;background:#3f8c7e;opacity:.65"></div>
<div class="a" style="left:1514.5px;top:148.81px;width:4.0px;height:1px;background:#3f8c7e;opacity:.65"></div>
<div class="a" style="left:1520.2px;top:148.81px;width:6.0px;height:1px;background:#a5a57a;opacity:.65"></div>
<div class="a" style="left:1527.0px;top:148.81px;width:10.0px;height:1px;background:#4f86a8;opacity:.65"></div>
<div class="a" style="left:1538.7px;top:148.81px;width:5.0px;height:1px;background:#8a8a8a;opacity:.65"></div>
<div class="a" style="left:1544.5px;top:148.81px;width:3.0px;height:1px;background:#6f9cb8;opacity:.65"></div>
<div class="a" style="left:1548.3px;top:148.81px;width:0.2px;height:1px;background:#8a8a8a;opacity:.65"></div>
<div class="a" style="left:1514.5px;top:150.48px;width:2.0px;height:1px;background:#a5a57a;opacity:.65"></div>
<div class="a" style="left:1517.3px;top:150.48px;width:6.0px;height:1px;background:#a5a57a;opacity:.65"></div>
<div class="a" style="left:1524.1px;top:150.48px;width:9.0px;height:1px;background:#a06e5a;opacity:.65"></div>
<div class="a" style="left:1533.9px;top:150.48px;width:5.0px;height:1px;background:#8a8a8a;opacity:.65"></div>
<div class="a" style="left:1514.5px;top:152.15px;width:9.0px;height:1px;background:#8a8a8a;opacity:.65"></div>
<div class="a" style="left:1525.2px;top:152.15px;width:6.0px;height:1px;background:#6f9cb8;opacity:.65"></div>
<div class="a" style="left:1532.0px;top:152.15px;width:4.0px;height:1px;background:#547a48;opacity:.65"></div>
<div class="a" style="left:1537.7px;top:152.15px;width:5.0px;height:1px;background:#4f86a8;opacity:.65"></div>
<div class="a" style="left:1543.5px;top:152.15px;width:2.0px;height:1px;background:#3f8c7e;opacity:.65"></div>
<div class="a" style="left:1546.3px;top:152.15px;width:2.2px;height:1px;background:#4f86a8;opacity:.65"></div>
<div class="a" style="left:1514.5px;top:155.49px;width:3.0px;height:1px;background:#3f8c7e;opacity:.65"></div>
<div class="a" style="left:1518.3px;top:155.49px;width:0.2px;height:1px;background:#a07c58;opacity:.65"></div>
<div class="a" style="left:1514.5px;top:157.16px;width:5.0px;height:1px;background:#6f9cb8;opacity:.65"></div>
<div class="a" style="left:1514.5px;top:158.83px;width:5.0px;height:1px;background:#8a8a8a;opacity:.65"></div>
<div class="a" style="left:1514.5px;top:160.50px;width:4.0px;height:1px;background:#a07c58;opacity:.65"></div>
<div class="a" style="left:1519.3px;top:160.50px;width:5.0px;height:1px;background:#4f86a8;opacity:.65"></div>
<div class="a" style="left:1526.0px;top:160.50px;width:8.0px;height:1px;background:#547a48;opacity:.65"></div>
<div class="a" style="left:1534.8px;top:160.50px;width:9.0px;height:1px;background:#4f86a8;opacity:.65"></div>
<div class="a" style="left:1544.6px;top:160.50px;width:8.0px;height:1px;background:#8a8a8a;opacity:.65"></div>
<div class="a" style="left:1553.4px;top:160.50px;width:2.0px;height:1px;background:#8c5a8c;opacity:.65"></div>
<div class="a" style="left:1557.1px;top:160.50px;width:1.4px;height:1px;background:#6f9cb8;opacity:.65"></div>
<div class="a" style="left:1514.5px;top:163.84px;width:2.0px;height:1px;background:#a07c58;opacity:.65"></div>
<div class="a" style="left:1518.2px;top:163.84px;width:2.0px;height:1px;background:#a06e5a;opacity:.65"></div>
<div class="a" style="left:1521.0px;top:163.84px;width:2.0px;height:1px;background:#4f86a8;opacity:.65"></div>
<div class="a" style="left:1523.8px;top:163.84px;width:8.0px;height:1px;background:#a06e5a;opacity:.65"></div>
<div class="a" style="left:1532.6px;top:163.84px;width:2.0px;height:1px;background:#4f86a8;opacity:.65"></div>
<div class="a" style="left:1535.4px;top:163.84px;width:4.0px;height:1px;background:#8c5a8c;opacity:.65"></div>
<div class="a" style="left:1541.1px;top:163.84px;width:8.0px;height:1px;background:#a07c58;opacity:.65"></div>
<div class="a" style="left:1550.8px;top:163.84px;width:5.0px;height:1px;background:#6f9cb8;opacity:.65"></div>
<div class="a" style="left:1556.6px;top:163.84px;width:1.9px;height:1px;background:#6f9cb8;opacity:.65"></div>
<div class="a" style="left:1514.5px;top:165.51px;width:5.0px;height:1px;background:#4f86a8;opacity:.65"></div>
<div class="a" style="left:1520.3px;top:165.51px;width:3.2px;height:1px;background:#3f8c7e;opacity:.65"></div>
<div class="a" style="left:1514.5px;top:167.18px;width:4.0px;height:1px;background:#4f86a8;opacity:.65"></div>
<div class="a" style="left:1519.3px;top:167.18px;width:9.0px;height:1px;background:#a07c58;opacity:.65"></div>
<div class="a" style="left:1530.0px;top:167.18px;width:3.0px;height:1px;background:#8a8a8a;opacity:.65"></div>
<div class="a" style="left:1533.8px;top:167.18px;width:9.0px;height:1px;background:#6f9cb8;opacity:.65"></div>
<div class="a" style="left:1543.6px;top:167.18px;width:8.0px;height:1px;background:#3f8c7e;opacity:.65"></div>
<div class="a" style="left:1552.4px;top:167.18px;width:4.0px;height:1px;background:#8c5a8c;opacity:.65"></div>
<div class="a" style="left:1557.2px;top:167.18px;width:9.0px;height:1px;background:#a07c58;opacity:.65"></div>
<div class="a" style="left:1567.9px;top:167.18px;width:1.6px;height:1px;background:#a5a57a;opacity:.65"></div>
<div class="a" style="left:1511.2px;top:168.85px;width:2.0px;height:1px;background:#a07c58;opacity:.65"></div>
<div class="a" style="left:1514.0px;top:168.85px;width:7.0px;height:1px;background:#6f9cb8;opacity:.65"></div>
<div class="a" style="left:1521.8px;top:168.85px;width:5.4px;height:1px;background:#3f8c7e;opacity:.65"></div>
<div class="a" style="left:1511.2px;top:170.52px;width:4.0px;height:1px;background:#4f86a8;opacity:.65"></div>
<div class="a" style="left:1516.0px;top:170.52px;width:4.0px;height:1px;background:#4f86a8;opacity:.65"></div>
<div class="a" style="left:1521.7px;top:170.52px;width:2.0px;height:1px;background:#a5a57a;opacity:.65"></div>
<div class="a" style="left:1524.5px;top:170.52px;width:3.0px;height:1px;background:#a5a57a;opacity:.65"></div>
<div class="a" style="left:1529.2px;top:170.52px;width:2.0px;height:1px;background:#3f8c7e;opacity:.65"></div>
<div class="a" style="left:1507.9px;top:172.19px;width:6.0px;height:1px;background:#4f86a8;opacity:.65"></div>
<div class="a" style="left:1514.7px;top:172.19px;width:10.0px;height:1px;background:#8c5a8c;opacity:.65"></div>
<div class="a" style="left:1525.5px;top:172.19px;width:2.0px;height:1px;background:#6f9cb8;opacity:.65"></div>
<div class="a" style="left:1528.3px;top:172.19px;width:4.0px;height:1px;background:#3f8c7e;opacity:.65"></div>
<div class="a" style="left:1533.1px;top:172.19px;width:0.8px;height:1px;background:#4f86a8;opacity:.65"></div>
<div class="a" style="left:1507.9px;top:173.86px;width:7.0px;height:1px;background:#3f8c7e;opacity:.65"></div>
<div class="a" style="left:1515.7px;top:173.86px;width:4.0px;height:1px;background:#8a8a8a;opacity:.65"></div>
<div class="a" style="left:1521.4px;top:173.86px;width:2.5px;height:1px;background:#547a48;opacity:.65"></div>
<div class="a" style="left:1507.9px;top:175.53px;width:9.0px;height:1px;background:#a5a57a;opacity:.65"></div>
<div class="a" style="left:1517.7px;top:175.53px;width:2.2px;height:1px;background:#3f8c7e;opacity:.65"></div>
<div class="a" style="left:1507.9px;top:177.20px;width:4.0px;height:1px;background:#a06e5a;opacity:.65"></div>
<div class="a" style="left:1512.7px;top:177.20px;width:4.0px;height:1px;background:#8c5a8c;opacity:.65"></div>
<div class="a" style="left:1517.5px;top:177.20px;width:9.0px;height:1px;background:#4f86a8;opacity:.65"></div>
<div class="a" style="left:1527.3px;top:177.20px;width:4.0px;height:1px;background:#a5a57a;opacity:.65"></div>
<div class="a" style="left:1533.0px;top:177.20px;width:2.0px;height:1px;background:#a07c58;opacity:.65"></div>
<div class="a" style="left:1535.8px;top:177.20px;width:2.0px;height:1px;background:#a07c58;opacity:.65"></div>
<div class="a" style="left:1538.6px;top:177.20px;width:3.3px;height:1px;background:#a5a57a;opacity:.65"></div>
<div class="a" style="left:1507.9px;top:178.87px;width:6.0px;height:1px;background:#8c5a8c;opacity:.65"></div>
<div class="a" style="left:1515.6px;top:178.87px;width:7.0px;height:1px;background:#a07c58;opacity:.65"></div>
<div class="a" style="left:1523.4px;top:178.87px;width:0.5px;height:1px;background:#a07c58;opacity:.65"></div>
<div class="a" style="left:1507.9px;top:180.54px;width:7.0px;height:1px;background:#a5a57a;opacity:.65"></div>
<div class="a" style="left:1514.5px;top:182.21px;width:3.0px;height:1px;background:#8a8a8a;opacity:.65"></div>
<div class="a" style="left:1518.3px;top:182.21px;width:2.2px;height:1px;background:#547a48;opacity:.65"></div>
<div class="a" style="left:1514.5px;top:183.88px;width:9.0px;height:1px;background:#8c5a8c;opacity:.65"></div>
<div class="a" style="left:1525.2px;top:183.88px;width:3.0px;height:1px;background:#a07c58;opacity:.65"></div>
<div class="a" style="left:1529.0px;top:183.88px;width:2.0px;height:1px;background:#6f9cb8;opacity:.65"></div>
<div class="a" style="left:1532.7px;top:183.88px;width:4.0px;height:1px;background:#a5a57a;opacity:.65"></div>
<div class="a" style="left:1537.5px;top:183.88px;width:7.0px;height:1px;background:#4f86a8;opacity:.65"></div>
<div class="a" style="left:1546.2px;top:183.88px;width:6.0px;height:1px;background:#8c5a8c;opacity:.65"></div>
<div class="a" style="left:1553.0px;top:183.88px;width:5.5px;height:1px;background:#a06e5a;opacity:.65"></div>
<div class="a" style="left:1514.5px;top:185.55px;width:2.0px;height:1px;background:#8c5a8c;opacity:.65"></div>
<div class="a" style="left:1517.3px;top:185.55px;width:8.0px;height:1px;background:#3f8c7e;opacity:.65"></div>
<div class="a" style="left:1527.0px;top:185.55px;width:2.0px;height:1px;background:#8c5a8c;opacity:.65"></div>
<div class="a" style="left:1529.8px;top:185.55px;width:6.0px;height:1px;background:#547a48;opacity:.65"></div>
<div class="a" style="left:1536.6px;top:185.55px;width:2.0px;height:1px;background:#6f9cb8;opacity:.65"></div>
<div class="a" style="left:1539.4px;top:185.55px;width:8.0px;height:1px;background:#547a48;opacity:.65"></div>
<div class="a" style="left:1548.2px;top:185.55px;width:6.0px;height:1px;background:#a07c58;opacity:.65"></div>
<div class="a" style="left:1555.0px;top:185.55px;width:2.0px;height:1px;background:#6f9cb8;opacity:.65"></div>
<div class="a" style="left:1558.7px;top:185.55px;width:6.0px;height:1px;background:#3f8c7e;opacity:.65"></div>
<div class="a" style="left:1566.4px;top:185.55px;width:3.1px;height:1px;background:#a07c58;opacity:.65"></div>
<div class="a" style="left:1514.5px;top:187.22px;width:4.0px;height:1px;background:#8c5a8c;opacity:.65"></div>
<div class="a" style="left:1514.5px;top:188.89px;width:8.0px;height:1px;background:#8a8a8a;opacity:.65"></div>
<div class="a" style="left:1524.2px;top:188.89px;width:10.0px;height:1px;background:#a07c58;opacity:.65"></div>
<div class="a" style="left:1535.9px;top:188.89px;width:7.0px;height:1px;background:#a5a57a;opacity:.65"></div>
<div class="a" style="left:1543.7px;top:188.89px;width:3.0px;height:1px;background:#8c5a8c;opacity:.65"></div>
<div class="a" style="left:1548.4px;top:188.89px;width:0.1px;height:1px;background:#a07c58;opacity:.65"></div>
<div class="a" style="left:1511.2px;top:190.56px;width:4.0px;height:1px;background:#6f9cb8;opacity:.65"></div>
<div class="a" style="left:1516.9px;top:190.56px;width:3.3px;height:1px;background:#8a8a8a;opacity:.65"></div>
<div class="a" style="left:1511.2px;top:192.23px;width:8.0px;height:1px;background:#a5a57a;opacity:.65"></div>
<div class="a" style="left:1520.0px;top:192.23px;width:8.0px;height:1px;background:#a06e5a;opacity:.65"></div>
<div class="a" style="left:1529.7px;top:192.23px;width:5.0px;height:1px;background:#547a48;opacity:.65"></div>
<div class="a" style="left:1535.5px;top:192.23px;width:6.0px;height:1px;background:#6f9cb8;opacity:.65"></div>
<div class="a" style="left:1543.2px;top:192.23px;width:7.0px;height:1px;background:#8a8a8a;opacity:.65"></div>
<div class="a" style="left:1551.0px;top:192.23px;width:2.0px;height:1px;background:#8a8a8a;opacity:.65"></div>
<div class="a" style="left:1553.8px;top:192.23px;width:6.0px;height:1px;background:#8c5a8c;opacity:.65"></div>
<div class="a" style="left:1561.5px;top:192.23px;width:4.0px;height:1px;background:#a5a57a;opacity:.65"></div>
<div class="a" style="left:1511.2px;top:193.90px;width:3.0px;height:1px;background:#4f86a8;opacity:.65"></div>
<div class="a" style="left:1515.0px;top:193.90px;width:4.0px;height:1px;background:#8c5a8c;opacity:.65"></div>
<div class="a" style="left:1519.8px;top:193.90px;width:7.0px;height:1px;background:#a07c58;opacity:.65"></div>
<div class="a" style="left:1527.6px;top:193.90px;width:8.0px;height:1px;background:#a07c58;opacity:.65"></div>
<div class="a" style="left:1511.2px;top:195.57px;width:2.0px;height:1px;background:#a07c58;opacity:.65"></div>
<div class="a" style="left:1514.9px;top:195.57px;width:4.0px;height:1px;background:#6f9cb8;opacity:.65"></div>
<div class="a" style="left:1519.7px;top:195.57px;width:0.5px;height:1px;background:#8a8a8a;opacity:.65"></div>
<div class="a" style="left:1511.2px;top:197.24px;width:7.0px;height:1px;background:#8a8a8a;opacity:.65"></div>
<div class="a" style="left:1519.9px;top:197.24px;width:10.0px;height:1px;background:#6f9cb8;opacity:.65"></div>
<div class="a" style="left:1530.7px;top:197.24px;width:3.0px;height:1px;background:#6f9cb8;opacity:.65"></div>
<div class="a" style="left:1534.5px;top:197.24px;width:5.0px;height:1px;background:#3f8c7e;opacity:.65"></div>
<div class="a" style="left:1540.3px;top:197.24px;width:4.0px;height:1px;background:#a06e5a;opacity:.65"></div>
<div class="a" style="left:1546.0px;top:197.24px;width:3.0px;height:1px;background:#a07c58;opacity:.65"></div>
<div class="a" style="left:1549.8px;top:197.24px;width:5.4px;height:1px;background:#a06e5a;opacity:.65"></div>
<div class="a" style="left:1511.2px;top:200.58px;width:2.0px;height:1px;background:#a06e5a;opacity:.65"></div>
<div class="a" style="left:1514.0px;top:200.58px;width:1.2px;height:1px;background:#6f9cb8;opacity:.65"></div>
<div class="a" style="left:1514.5px;top:202.25px;width:7.0px;height:1px;background:#a07c58;opacity:.65"></div>
<div class="a" style="left:1522.3px;top:202.25px;width:8.0px;height:1px;background:#8a8a8a;opacity:.65"></div>
<div class="a" style="left:1531.1px;top:202.25px;width:9.0px;height:1px;background:#6f9cb8;opacity:.65"></div>
<div class="a" style="left:1541.8px;top:202.25px;width:3.0px;height:1px;background:#547a48;opacity:.65"></div>
<div class="a" style="left:1545.6px;top:202.25px;width:7.0px;height:1px;background:#6f9cb8;opacity:.65"></div>
<div class="a" style="left:1554.3px;top:202.25px;width:4.2px;height:1px;background:#4f86a8;opacity:.65"></div>
<div class="a" style="left:1514.5px;top:203.92px;width:4.0px;height:1px;background:#547a48;opacity:.65"></div>
<div class="a" style="left:1519.3px;top:203.92px;width:4.2px;height:1px;background:#a06e5a;opacity:.65"></div>
<div class="a" style="left:1514.5px;top:205.59px;width:5.0px;height:1px;background:#6f9cb8;opacity:.65"></div>
<div class="a" style="left:1520.3px;top:205.59px;width:7.0px;height:1px;background:#8a8a8a;opacity:.65"></div>
<div class="a" style="left:1528.1px;top:205.59px;width:2.0px;height:1px;background:#8a8a8a;opacity:.65"></div>
<div class="a" style="left:1530.9px;top:205.59px;width:2.0px;height:1px;background:#4f86a8;opacity:.65"></div>
<div class="a" style="left:1533.7px;top:205.59px;width:10.0px;height:1px;background:#a06e5a;opacity:.65"></div>
<div class="a" style="left:1544.5px;top:205.59px;width:4.0px;height:1px;background:#6f9cb8;opacity:.65"></div>
<div class="a" style="left:1514.5px;top:207.26px;width:2.0px;height:1px;background:#a06e5a;opacity:.65"></div>
<div class="a" style="left:1518.2px;top:207.26px;width:3.0px;height:1px;background:#547a48;opacity:.65"></div>
<div class="a" style="left:1522.9px;top:207.26px;width:9.0px;height:1px;background:#8c5a8c;opacity:.65"></div>
<div class="a" style="left:1532.7px;top:207.26px;width:2.0px;height:1px;background:#8a8a8a;opacity:.65"></div>
<div class="a" style="left:1535.5px;top:207.26px;width:10.0px;height:1px;background:#a5a57a;opacity:.65"></div>
<div class="a" style="left:1547.2px;top:207.26px;width:2.0px;height:1px;background:#a07c58;opacity:.65"></div>
<div class="a" style="left:1550.0px;top:207.26px;width:8.0px;height:1px;background:#a5a57a;opacity:.65"></div>
<div class="a" style="left:1514.5px;top:208.93px;width:7.0px;height:1px;background:#8a8a8a;opacity:.65"></div>
<div class="a" style="left:1522.3px;top:208.93px;width:4.2px;height:1px;background:#a5a57a;opacity:.65"></div>
<div class="a" style="left:1514.5px;top:210.60px;width:5.0px;height:1px;background:#547a48;opacity:.65"></div>
<div class="a" style="left:1520.3px;top:210.60px;width:9.0px;height:1px;background:#3f8c7e;opacity:.65"></div>
<div class="a" style="left:1530.1px;top:210.60px;width:2.0px;height:1px;background:#6f9cb8;opacity:.65"></div>
<div class="a" style="left:1532.9px;top:210.60px;width:9.0px;height:1px;background:#6f9cb8;opacity:.65"></div>
<div class="a" style="left:1542.7px;top:210.60px;width:5.8px;height:1px;background:#4f86a8;opacity:.65"></div>
<div class="a" style="left:1511.2px;top:212.27px;width:7.0px;height:1px;background:#a06e5a;opacity:.65"></div>
<div class="a" style="left:1519.0px;top:212.27px;width:9.0px;height:1px;background:#a07c58;opacity:.65"></div>
<div class="a" style="left:1528.8px;top:212.27px;width:7.0px;height:1px;background:#4f86a8;opacity:.65"></div>
<div class="a" style="left:1536.6px;top:212.27px;width:4.0px;height:1px;background:#a5a57a;opacity:.65"></div>
<div class="a" style="left:1541.4px;top:212.27px;width:6.0px;height:1px;background:#8a8a8a;opacity:.65"></div>
<div class="a" style="left:1549.1px;top:212.27px;width:6.1px;height:1px;background:#3f8c7e;opacity:.65"></div>
<div class="a" style="left:1511.2px;top:213.94px;width:3.0px;height:1px;background:#547a48;opacity:.65"></div>
<div class="a" style="left:1515.0px;top:213.94px;width:3.0px;height:1px;background:#a5a57a;opacity:.65"></div>
<div class="a" style="left:1518.8px;top:213.94px;width:6.0px;height:1px;background:#3f8c7e;opacity:.65"></div>
<div class="a" style="left:1525.6px;top:213.94px;width:10.0px;height:1px;background:#a06e5a;opacity:.65"></div>
<div class="a" style="left:1536.4px;top:213.94px;width:4.0px;height:1px;background:#547a48;opacity:.65"></div>
<div class="a" style="left:1541.2px;top:213.94px;width:10.0px;height:1px;background:#4f86a8;opacity:.65"></div>
<div class="a" style="left:1552.9px;top:213.94px;width:8.0px;height:1px;background:#8a8a8a;opacity:.65"></div>
<div class="a" style="left:1561.7px;top:213.94px;width:4.5px;height:1px;background:#4f86a8;opacity:.65"></div>
<div class="a" style="left:1507.9px;top:217.28px;width:6.0px;height:1px;background:#a07c58;opacity:.65"></div>
<div class="a" style="left:1507.9px;top:218.95px;width:3.0px;height:1px;background:#547a48;opacity:.65"></div>
<div class="a" style="left:1507.9px;top:220.62px;width:10.0px;height:1px;background:#547a48;opacity:.65"></div>
<div class="a" style="left:1519.6px;top:220.62px;width:8.0px;height:1px;background:#a5a57a;opacity:.65"></div>
<div class="a" style="left:1528.4px;top:220.62px;width:4.0px;height:1px;background:#6f9cb8;opacity:.65"></div>
<div class="a" style="left:1507.9px;top:222.29px;width:8.0px;height:1px;background:#6f9cb8;opacity:.65"></div>
<div class="a" style="left:1517.6px;top:222.29px;width:6.0px;height:1px;background:#8c5a8c;opacity:.65"></div>
<div class="a" style="left:1524.4px;top:222.29px;width:8.0px;height:1px;background:#8a8a8a;opacity:.65"></div>
<div class="a" style="left:1533.2px;top:222.29px;width:7.0px;height:1px;background:#6f9cb8;opacity:.65"></div>
<div class="a" style="left:1541.0px;top:222.29px;width:2.0px;height:1px;background:#a07c58;opacity:.65"></div>
<div class="a" style="left:1544.7px;top:222.29px;width:9.0px;height:1px;background:#4f86a8;opacity:.65"></div>
<div class="a" style="left:1554.5px;top:222.29px;width:3.0px;height:1px;background:#6f9cb8;opacity:.65"></div>
<div class="a" style="left:1558.3px;top:222.29px;width:4.0px;height:1px;background:#3f8c7e;opacity:.65"></div>
<div class="a" style="left:1507.9px;top:223.96px;width:3.0px;height:1px;background:#547a48;opacity:.65"></div>
<div class="a" style="left:1511.7px;top:223.96px;width:2.0px;height:1px;background:#547a48;opacity:.65"></div>
<div class="a" style="left:1514.5px;top:223.96px;width:4.0px;height:1px;background:#a07c58;opacity:.65"></div>
<div class="a" style="left:1507.9px;top:225.63px;width:6.0px;height:1px;background:#8c5a8c;opacity:.65"></div>
<div class="a" style="left:1507.9px;top:230.64px;width:2.0px;height:1px;background:#a5a57a;opacity:.65"></div>
<div class="a" style="left:1510.7px;top:230.64px;width:3.2px;height:1px;background:#8c5a8c;opacity:.65"></div>
<div class="a" style="left:1507.9px;top:232.31px;width:3.0px;height:1px;background:#6f9cb8;opacity:.65"></div>
<div class="a" style="left:1512.6px;top:232.31px;width:3.0px;height:1px;background:#4f86a8;opacity:.65"></div>
<div class="a" style="left:1516.4px;top:232.31px;width:9.0px;height:1px;background:#547a48;opacity:.65"></div>
<div class="a" style="left:1527.1px;top:232.31px;width:10.0px;height:1px;background:#8c5a8c;opacity:.65"></div>
<div class="a" style="left:1538.8px;top:232.31px;width:3.0px;height:1px;background:#547a48;opacity:.65"></div>
<div class="a" style="left:1542.6px;top:232.31px;width:8.0px;height:1px;background:#547a48;opacity:.65"></div>
<div class="a" style="left:1551.4px;top:232.31px;width:9.0px;height:1px;background:#547a48;opacity:.65"></div>
<div class="a" style="left:1561.2px;top:232.31px;width:1.7px;height:1px;background:#3f8c7e;opacity:.65"></div>
<div class="a" style="left:1507.9px;top:233.98px;width:4.0px;height:1px;background:#a07c58;opacity:.65"></div>
<div class="a" style="left:1512.7px;top:233.98px;width:7.0px;height:1px;background:#a07c58;opacity:.65"></div>
<div class="a" style="left:1520.5px;top:233.98px;width:3.0px;height:1px;background:#8a8a8a;opacity:.65"></div>
<div class="a" style="left:1524.3px;top:233.98px;width:3.0px;height:1px;background:#a5a57a;opacity:.65"></div>
<div class="a" style="left:1528.1px;top:233.98px;width:10.0px;height:1px;background:#a5a57a;opacity:.65"></div>
<div class="a" style="left:1538.9px;top:233.98px;width:3.0px;height:1px;background:#8a8a8a;opacity:.65"></div>
<div class="a" style="left:1511.2px;top:235.65px;width:2.0px;height:1px;background:#8a8a8a;opacity:.65"></div>
<div class="a" style="left:1514.0px;top:235.65px;width:2.2px;height:1px;background:#a06e5a;opacity:.65"></div>
<div class="a" style="left:1511.2px;top:237.32px;width:5.0px;height:1px;background:#8a8a8a;opacity:.65"></div>
<div class="a" style="left:1517.0px;top:237.32px;width:1.2px;height:1px;background:#547a48;opacity:.65"></div>
<div class="a" style="left:1511.2px;top:238.99px;width:8.0px;height:1px;background:#3f8c7e;opacity:.65"></div>
<div class="a" style="left:1520.9px;top:238.99px;width:6.0px;height:1px;background:#a06e5a;opacity:.65"></div>
<div class="a" style="left:1528.6px;top:238.99px;width:2.6px;height:1px;background:#6f9cb8;opacity:.65"></div>
<div class="a" style="left:1511.2px;top:240.66px;width:6.0px;height:1px;background:#8a8a8a;opacity:.65"></div>
<div class="a" style="left:1518.0px;top:240.66px;width:2.2px;height:1px;background:#a5a57a;opacity:.65"></div>
<div class="a" style="left:1511.2px;top:242.33px;width:3.0px;height:1px;background:#a5a57a;opacity:.65"></div>
<div class="a" style="left:1515.0px;top:242.33px;width:3.0px;height:1px;background:#547a48;opacity:.65"></div>
<div class="a" style="left:1518.8px;top:242.33px;width:6.0px;height:1px;background:#3f8c7e;opacity:.65"></div>
<div class="a" style="left:1525.6px;top:242.33px;width:5.6px;height:1px;background:#6f9cb8;opacity:.65"></div>
<div class="a" style="left:1511.2px;top:244.00px;width:9.0px;height:1px;background:#a5a57a;opacity:.65"></div>
<div class="a" style="left:1511.2px;top:245.67px;width:2.0px;height:1px;background:#8c5a8c;opacity:.65"></div>
<div class="a" style="left:1514.0px;top:245.67px;width:3.0px;height:1px;background:#8c5a8c;opacity:.65"></div>
<div class="a" style="left:1517.8px;top:245.67px;width:7.0px;height:1px;background:#6f9cb8;opacity:.65"></div>
<div class="a" style="left:1525.6px;top:245.67px;width:8.0px;height:1px;background:#6f9cb8;opacity:.65"></div>
<div class="a" style="left:1534.4px;top:245.67px;width:5.0px;height:1px;background:#6f9cb8;opacity:.65"></div>
<div class="a" style="left:1541.1px;top:245.67px;width:4.1px;height:1px;background:#6f9cb8;opacity:.65"></div>
<div class="a" style="left:1511.2px;top:247.34px;width:8.0px;height:1px;background:#6f9cb8;opacity:.65"></div>
<div class="a" style="left:1520.0px;top:247.34px;width:6.0px;height:1px;background:#8c5a8c;opacity:.65"></div>
<div class="a" style="left:1526.8px;top:247.34px;width:8.0px;height:1px;background:#4f86a8;opacity:.65"></div>
<div class="a" style="left:1535.6px;top:247.34px;width:9.6px;height:1px;background:#8a8a8a;opacity:.65"></div>
<div class="a" style="left:1511.2px;top:249.01px;width:7.0px;height:1px;background:#8c5a8c;opacity:.65"></div>
<div class="a" style="left:1519.0px;top:249.01px;width:4.0px;height:1px;background:#547a48;opacity:.65"></div>
<div class="a" style="left:1523.8px;top:249.01px;width:3.4px;height:1px;background:#547a48;opacity:.65"></div>
<div class="a" style="left:1517.8px;top:250.68px;width:9.0px;height:1px;background:#a06e5a;opacity:.65"></div>
<div class="a" style="left:1527.6px;top:250.68px;width:3.0px;height:1px;background:#8a8a8a;opacity:.65"></div>
<div class="a" style="left:1532.3px;top:250.68px;width:5.0px;height:1px;background:#a06e5a;opacity:.65"></div>
<div class="a" style="left:1517.8px;top:252.35px;width:5.0px;height:1px;background:#8a8a8a;opacity:.65"></div>
<div class="a" style="left:1523.6px;top:252.35px;width:4.0px;height:1px;background:#6f9cb8;opacity:.65"></div>
<div class="a" style="left:1529.3px;top:252.35px;width:9.0px;height:1px;background:#547a48;opacity:.65"></div>
<div class="a" style="left:1540.0px;top:252.35px;width:9.0px;height:1px;background:#8a8a8a;opacity:.65"></div>
<div class="a" style="left:1550.7px;top:252.35px;width:9.0px;height:1px;background:#6f9cb8;opacity:.65"></div>
<div class="a" style="left:1560.5px;top:252.35px;width:1.3px;height:1px;background:#3f8c7e;opacity:.65"></div>
<div class="a" style="left:1517.8px;top:255.69px;width:6.0px;height:1px;background:#a06e5a;opacity:.65"></div>
<div class="a" style="left:1517.8px;top:257.36px;width:6.0px;height:1px;background:#3f8c7e;opacity:.65"></div>
<div class="a" style="left:1524.6px;top:257.36px;width:0.2px;height:1px;background:#8a8a8a;opacity:.65"></div>
<div class="a" style="left:1517.8px;top:259.03px;width:6.0px;height:1px;background:#a07c58;opacity:.65"></div>
<div class="a" style="left:1525.5px;top:259.03px;width:2.0px;height:1px;background:#4f86a8;opacity:.65"></div>
<div class="a" style="left:1528.3px;top:259.03px;width:1.5px;height:1px;background:#547a48;opacity:.65"></div>
<div class="a" style="left:1517.8px;top:260.70px;width:7.0px;height:1px;background:#8c5a8c;opacity:.65"></div>
<div class="a" style="left:1526.5px;top:260.70px;width:7.0px;height:1px;background:#4f86a8;opacity:.65"></div>
<div class="a" style="left:1534.3px;top:260.70px;width:9.0px;height:1px;background:#4f86a8;opacity:.65"></div>
<div class="a" style="left:1545.0px;top:260.70px;width:9.0px;height:1px;background:#a06e5a;opacity:.65"></div>
<div class="a" style="left:1554.8px;top:260.70px;width:2.0px;height:1px;background:#a07c58;opacity:.65"></div>
<div class="a" style="left:1558.5px;top:260.70px;width:2.0px;height:1px;background:#a06e5a;opacity:.65"></div>
<div class="a" style="left:1561.3px;top:260.70px;width:0.5px;height:1px;background:#8a8a8a;opacity:.65"></div>
<div class="a" style="left:1514.5px;top:262.37px;width:8.0px;height:1px;background:#a07c58;opacity:.65"></div>
<div class="a" style="left:1524.2px;top:262.37px;width:6.0px;height:1px;background:#4f86a8;opacity:.65"></div>
<div class="a" style="left:1531.0px;top:262.37px;width:5.0px;height:1px;background:#6f9cb8;opacity:.65"></div>
<div class="a" style="left:1537.7px;top:262.37px;width:10.0px;height:1px;background:#3f8c7e;opacity:.65"></div>
<div class="a" style="left:1514.5px;top:264.04px;width:7.0px;height:1px;background:#8c5a8c;opacity:.65"></div>
<div class="a" style="left:1523.2px;top:264.04px;width:0.3px;height:1px;background:#a06e5a;opacity:.65"></div>
<div class="a" style="left:1514.5px;top:265.71px;width:2.0px;height:1px;background:#8a8a8a;opacity:.65"></div>
<div class="a" style="left:1517.3px;top:265.71px;width:2.0px;height:1px;background:#a06e5a;opacity:.65"></div>
<div class="a" style="left:1520.1px;top:265.71px;width:1.4px;height:1px;background:#a07c58;opacity:.65"></div>
<div class="a" style="left:1514.5px;top:267.38px;width:6.0px;height:1px;background:#547a48;opacity:.65"></div>
<div class="a" style="left:1514.5px;top:270.72px;width:5.0px;height:1px;background:#4f86a8;opacity:.65"></div>
<div class="a" style="left:1521.2px;top:270.72px;width:9.0px;height:1px;background:#8c5a8c;opacity:.65"></div>
<div class="a" style="left:1531.0px;top:270.72px;width:3.0px;height:1px;background:#3f8c7e;opacity:.65"></div>
<div class="a" style="left:1534.8px;top:270.72px;width:3.0px;height:1px;background:#8c5a8c;opacity:.65"></div>
<div class="a" style="left:1538.6px;top:270.72px;width:3.0px;height:1px;background:#8a8a8a;opacity:.65"></div>
<div class="a" style="left:1542.4px;top:270.72px;width:8.0px;height:1px;background:#4f86a8;opacity:.65"></div>
<div class="a" style="left:1551.2px;top:270.72px;width:7.3px;height:1px;background:#4f86a8;opacity:.65"></div>
<div class="a" style="left:1514.5px;top:272.39px;width:4.0px;height:1px;background:#6f9cb8;opacity:.65"></div>
<div class="a" style="left:1519.3px;top:272.39px;width:1.2px;height:1px;background:#a07c58;opacity:.65"></div>
<div class="a" style="left:1514.5px;top:274.06px;width:2.0px;height:1px;background:#547a48;opacity:.65"></div>
<div class="a" style="left:1517.3px;top:274.06px;width:10.0px;height:1px;background:#a07c58;opacity:.65"></div>
<div class="a" style="left:1529.0px;top:274.06px;width:6.0px;height:1px;background:#6f9cb8;opacity:.65"></div>
<div class="a" style="left:1535.8px;top:274.06px;width:8.0px;height:1px;background:#a5a57a;opacity:.65"></div>
<div class="a" style="left:1545.5px;top:274.06px;width:3.0px;height:1px;background:#a06e5a;opacity:.65"></div>
<div class="a" style="left:1514.5px;top:275.73px;width:2.0px;height:1px;background:#a07c58;opacity:.65"></div>
<div class="a" style="left:1518.2px;top:275.73px;width:4.0px;height:1px;background:#3f8c7e;opacity:.65"></div>
<div class="a" style="left:1523.9px;top:275.73px;width:3.0px;height:1px;background:#a5a57a;opacity:.65"></div>
<div class="a" style="left:1527.7px;top:275.73px;width:4.0px;height:1px;background:#547a48;opacity:.65"></div>
<div class="a" style="left:1532.5px;top:275.73px;width:2.0px;height:1px;background:#8c5a8c;opacity:.65"></div>
<div class="a" style="left:1507.9px;top:277.40px;width:7.0px;height:1px;background:#6f9cb8;opacity:.65"></div>
<div class="a" style="left:1515.7px;top:277.40px;width:4.0px;height:1px;background:#3f8c7e;opacity:.65"></div>
<div class="a" style="left:1520.5px;top:277.40px;width:2.0px;height:1px;background:#3f8c7e;opacity:.65"></div>
<div class="a" style="left:1523.3px;top:277.40px;width:6.0px;height:1px;background:#a06e5a;opacity:.65"></div>
<div class="a" style="left:1530.1px;top:277.40px;width:10.0px;height:1px;background:#a5a57a;opacity:.65"></div>
<div class="a" style="left:1540.9px;top:277.40px;width:8.0px;height:1px;background:#a5a57a;opacity:.65"></div>
<div class="a" style="left:1550.6px;top:277.40px;width:1.3px;height:1px;background:#4f86a8;opacity:.65"></div>
<div class="a" style="left:1507.9px;top:279.07px;width:3.0px;height:1px;background:#8c5a8c;opacity:.65"></div>
<div class="a" style="left:1511.7px;top:279.07px;width:5.0px;height:1px;background:#6f9cb8;opacity:.65"></div>
<div class="a" style="left:1518.4px;top:279.07px;width:7.0px;height:1px;background:#6f9cb8;opacity:.65"></div>
<div class="a" style="left:1526.2px;top:279.07px;width:7.0px;height:1px;background:#a5a57a;opacity:.65"></div>
<div class="a" style="left:1534.0px;top:279.07px;width:7.0px;height:1px;background:#3f8c7e;opacity:.65"></div>
<div class="a" style="left:1541.8px;top:279.07px;width:6.0px;height:1px;background:#6f9cb8;opacity:.65"></div>
<div class="a" style="left:1549.5px;top:279.07px;width:3.0px;height:1px;background:#6f9cb8;opacity:.65"></div>
<div class="a" style="left:1553.3px;top:279.07px;width:9.0px;height:1px;background:#8c5a8c;opacity:.65"></div>
<div class="a" style="left:1504.6px;top:280.74px;width:3.0px;height:1px;background:#8c5a8c;opacity:.65"></div>
<div class="a" style="left:1508.4px;top:280.74px;width:6.0px;height:1px;background:#6f9cb8;opacity:.65"></div>
<div class="a" style="left:1516.1px;top:280.74px;width:6.0px;height:1px;background:#6f9cb8;opacity:.65"></div>
<div class="a" style="left:1522.9px;top:280.74px;width:6.0px;height:1px;background:#a5a57a;opacity:.65"></div>
<div class="a" style="left:1529.7px;top:280.74px;width:4.0px;height:1px;background:#3f8c7e;opacity:.65"></div>
<div class="a" style="left:1535.4px;top:280.74px;width:8.0px;height:1px;background:#6f9cb8;opacity:.65"></div>
<div class="a" style="left:1544.2px;top:280.74px;width:4.4px;height:1px;background:#3f8c7e;opacity:.65"></div>
<div class="a" style="left:1504.6px;top:284.08px;width:6.0px;height:1px;background:#4f86a8;opacity:.65"></div>
<div class="a" style="left:1504.6px;top:285.75px;width:5.0px;height:1px;background:#547a48;opacity:.65"></div>
<div class="a" style="left:1510.4px;top:285.75px;width:0.2px;height:1px;background:#a06e5a;opacity:.65"></div>
<div class="a" style="left:1504.6px;top:287.42px;width:9.0px;height:1px;background:#a06e5a;opacity:.65"></div>
<div class="a" style="left:1507.9px;top:289.09px;width:3.0px;height:1px;background:#6f9cb8;opacity:.65"></div>
<div class="a" style="left:1507.9px;top:290.76px;width:8.0px;height:1px;background:#6f9cb8;opacity:.65"></div>
<div class="a" style="left:1516.7px;top:290.76px;width:2.0px;height:1px;background:#a06e5a;opacity:.65"></div>
<div class="a" style="left:1519.5px;top:290.76px;width:6.0px;height:1px;background:#4f86a8;opacity:.65"></div>
<div class="a" style="left:1527.2px;top:290.76px;width:3.0px;height:1px;background:#4f86a8;opacity:.65"></div>
<div class="a" style="left:1531.0px;top:290.76px;width:2.9px;height:1px;background:#547a48;opacity:.65"></div>
<div class="a" style="left:1507.9px;top:292.43px;width:2.0px;height:1px;background:#a5a57a;opacity:.65"></div>
<div class="a" style="left:1510.7px;top:292.43px;width:6.0px;height:1px;background:#8a8a8a;opacity:.65"></div>
<div class="a" style="left:1518.4px;top:292.43px;width:5.5px;height:1px;background:#8c5a8c;opacity:.65"></div>
<div class="a" style="left:1507.9px;top:294.10px;width:9.0px;height:1px;background:#a06e5a;opacity:.65"></div>
<div class="a" style="left:1517.7px;top:294.10px;width:4.0px;height:1px;background:#3f8c7e;opacity:.65"></div>
<div class="a" style="left:1522.5px;top:294.10px;width:7.0px;height:1px;background:#6f9cb8;opacity:.65"></div>
<div class="a" style="left:1530.3px;top:294.10px;width:9.0px;height:1px;background:#547a48;opacity:.65"></div>
<div class="a" style="left:1540.1px;top:294.10px;width:1.8px;height:1px;background:#6f9cb8;opacity:.65"></div>
<div class="a" style="left:1507.9px;top:295.77px;width:4.0px;height:1px;background:#8a8a8a;opacity:.65"></div>
<div class="a" style="left:1513.6px;top:295.77px;width:10.0px;height:1px;background:#a06e5a;opacity:.65"></div>
<div class="a" style="left:1524.4px;top:295.77px;width:3.5px;height:1px;background:#8a8a8a;opacity:.65"></div>
<div class="a" style="left:1507.9px;top:297.44px;width:7.0px;height:1px;background:#547a48;opacity:.65"></div>
<div class="a" style="left:1515.7px;top:297.44px;width:4.0px;height:1px;background:#a5a57a;opacity:.65"></div>
<div class="a" style="left:1521.4px;top:297.44px;width:10.0px;height:1px;background:#a06e5a;opacity:.65"></div>
<div class="a" style="left:1532.2px;top:297.44px;width:6.0px;height:1px;background:#a5a57a;opacity:.65"></div>
<div class="a" style="left:1539.0px;top:297.44px;width:2.9px;height:1px;background:#a07c58;opacity:.65"></div>
<div class="a" style="left:1507.9px;top:299.11px;width:2.0px;height:1px;background:#6f9cb8;opacity:.65"></div>
<div class="a" style="left:1511.6px;top:299.11px;width:6.0px;height:1px;background:#6f9cb8;opacity:.65"></div>
<div class="a" style="left:1518.4px;top:299.11px;width:7.0px;height:1px;background:#3f8c7e;opacity:.65"></div>
<div class="a" style="left:1526.2px;top:299.11px;width:2.0px;height:1px;background:#4f86a8;opacity:.65"></div>
<div class="a" style="left:1529.0px;top:299.11px;width:9.0px;height:1px;background:#4f86a8;opacity:.65"></div>
<div class="a" style="left:1538.8px;top:299.11px;width:9.0px;height:1px;background:#8c5a8c;opacity:.65"></div>
<div class="a" style="left:1548.6px;top:299.11px;width:2.0px;height:1px;background:#a07c58;opacity:.65"></div>
<div class="a" style="left:1551.4px;top:299.11px;width:7.0px;height:1px;background:#a07c58;opacity:.65"></div>
<div class="a" style="left:1559.2px;top:299.11px;width:3.7px;height:1px;background:#4f86a8;opacity:.65"></div>
<div class="a" style="left:1507.9px;top:300.78px;width:6.0px;height:1px;background:#6f9cb8;opacity:.65"></div>
<div class="a" style="left:1514.7px;top:300.78px;width:2.2px;height:1px;background:#6f9cb8;opacity:.65"></div>
<div class="a" style="left:1514.5px;top:302.45px;width:8.0px;height:1px;background:#8a8a8a;opacity:.65"></div>
<div class="a" style="left:1523.3px;top:302.45px;width:6.0px;height:1px;background:#6f9cb8;opacity:.65"></div>
<div class="a" style="left:1530.1px;top:302.45px;width:4.0px;height:1px;background:#a07c58;opacity:.65"></div>
<div class="a" style="left:1514.5px;top:304.12px;width:5.0px;height:1px;background:#a07c58;opacity:.65"></div>
<div class="a" style="left:1514.5px;top:305.79px;width:5.0px;height:1px;background:#a5a57a;opacity:.65"></div>
<div class="a" style="left:1521.2px;top:305.79px;width:3.0px;height:1px;background:#547a48;opacity:.65"></div>
<div class="a" style="left:1525.0px;top:305.79px;width:2.0px;height:1px;background:#547a48;opacity:.65"></div>
<div class="a" style="left:1527.8px;top:305.79px;width:9.0px;height:1px;background:#8a8a8a;opacity:.65"></div>
<div class="a" style="left:1537.6px;top:305.79px;width:3.0px;height:1px;background:#a07c58;opacity:.65"></div>
<div class="a" style="left:1541.4px;top:305.79px;width:7.0px;height:1px;background:#a07c58;opacity:.65"></div>
<div class="a" style="left:1550.1px;top:305.79px;width:9.0px;height:1px;background:#4f86a8;opacity:.65"></div>
<div class="a" style="left:1560.8px;top:305.79px;width:2.0px;height:1px;background:#3f8c7e;opacity:.65"></div>
<div class="a" style="left:1564.5px;top:305.79px;width:5.0px;height:1px;background:#3f8c7e;opacity:.65"></div>
<div class="a" style="left:1514.5px;top:307.46px;width:9.0px;height:1px;background:#8a8a8a;opacity:.65"></div>
<div class="a" style="left:1525.2px;top:307.46px;width:2.0px;height:1px;background:#a07c58;opacity:.65"></div>
<div class="a" style="left:1528.0px;top:307.46px;width:2.0px;height:1px;background:#547a48;opacity:.65"></div>
<div class="a" style="left:1530.8px;top:307.46px;width:3.7px;height:1px;background:#a07c58;opacity:.65"></div>
<div class="a" style="left:1514.5px;top:309.13px;width:6.0px;height:1px;background:#8a8a8a;opacity:.65"></div>
<div class="a" style="left:1521.3px;top:309.13px;width:4.0px;height:1px;background:#6f9cb8;opacity:.65"></div>
<div class="a" style="left:1527.0px;top:309.13px;width:3.5px;height:1px;background:#a07c58;opacity:.65"></div>
<div class="a" style="left:1514.5px;top:310.80px;width:4.0px;height:1px;background:#a06e5a;opacity:.65"></div>
<div class="a" style="left:1520.2px;top:310.80px;width:3.0px;height:1px;background:#3f8c7e;opacity:.65"></div>
<div class="a" style="left:1514.5px;top:312.47px;width:6.0px;height:1px;background:#4f86a8;opacity:.65"></div>
<div class="a" style="left:1511.2px;top:314.14px;width:7.0px;height:1px;background:#8a8a8a;opacity:.65"></div>
<div class="a" style="left:1519.0px;top:314.14px;width:9.0px;height:1px;background:#8c5a8c;opacity:.65"></div>
<div class="a" style="left:1529.7px;top:314.14px;width:5.0px;height:1px;background:#6f9cb8;opacity:.65"></div>
<div class="a" style="left:1536.4px;top:314.14px;width:2.0px;height:1px;background:#a06e5a;opacity:.65"></div>
<div class="a" style="left:1539.2px;top:314.14px;width:6.0px;height:1px;background:#8c5a8c;opacity:.65"></div>
<div class="a" style="left:1546.0px;top:314.14px;width:5.0px;height:1px;background:#547a48;opacity:.65"></div>
<div class="a" style="left:1552.7px;top:314.14px;width:2.5px;height:1px;background:#547a48;opacity:.65"></div>
<div class="a" style="left:1511.2px;top:315.81px;width:6.0px;height:1px;background:#6f9cb8;opacity:.65"></div>
<div class="a" style="left:1518.9px;top:315.81px;width:5.0px;height:1px;background:#4f86a8;opacity:.65"></div>
<div class="a" style="left:1525.6px;top:315.81px;width:5.0px;height:1px;background:#547a48;opacity:.65"></div>
<div class="a" style="left:1531.4px;top:315.81px;width:5.8px;height:1px;background:#547a48;opacity:.65"></div>
<div class="a" style="left:1511.2px;top:317.48px;width:8.0px;height:1px;background:#a06e5a;opacity:.65"></div>
<div class="a" style="left:1520.9px;top:317.48px;width:2.0px;height:1px;background:#a5a57a;opacity:.65"></div>
<div class="a" style="left:1511.2px;top:319.15px;width:7.0px;height:1px;background:#8c5a8c;opacity:.65"></div>
<div class="a" style="left:1519.9px;top:319.15px;width:4.0px;height:1px;background:#3f8c7e;opacity:.65"></div>
<div class="a" style="left:1524.7px;top:319.15px;width:4.0px;height:1px;background:#a5a57a;opacity:.65"></div>
<div class="a" style="left:1530.4px;top:319.15px;width:0.8px;height:1px;background:#4f86a8;opacity:.65"></div>
<div class="a" style="left:1511.2px;top:320.82px;width:9.0px;height:1px;background:#8c5a8c;opacity:.65"></div>
<div class="a" style="left:1521.9px;top:320.82px;width:4.0px;height:1px;background:#a06e5a;opacity:.65"></div>
<div class="a" style="left:1526.7px;top:320.82px;width:9.0px;height:1px;background:#a06e5a;opacity:.65"></div>
<div class="a" style="left:1537.4px;top:320.82px;width:5.0px;height:1px;background:#a07c58;opacity:.65"></div>
<div class="a" style="left:1543.2px;top:320.82px;width:5.0px;height:1px;background:#8a8a8a;opacity:.65"></div>
<div class="a" style="left:1549.0px;top:320.82px;width:3.0px;height:1px;background:#a06e5a;opacity:.65"></div>
<div class="a" style="left:1553.7px;top:320.82px;width:1.5px;height:1px;background:#8c5a8c;opacity:.65"></div>
<div class="a" style="left:1511.2px;top:322.49px;width:2.0px;height:1px;background:#a06e5a;opacity:.65"></div>
<div class="a" style="left:1514.9px;top:322.49px;width:0.3px;height:1px;background:#6f9cb8;opacity:.65"></div>
<div class="a" style="left:1504.6px;top:324.16px;width:3.0px;height:1px;background:#4f86a8;opacity:.65"></div>
<div class="a" style="left:1508.4px;top:324.16px;width:8.0px;height:1px;background:#8c5a8c;opacity:.65"></div>
<div class="a" style="left:1504.6px;top:325.83px;width:5.0px;height:1px;background:#8a8a8a;opacity:.65"></div>
<div class="a" style="left:1510.4px;top:325.83px;width:10.0px;height:1px;background:#a06e5a;opacity:.65"></div>
<div class="a" style="left:1522.1px;top:325.83px;width:8.5px;height:1px;background:#3f8c7e;opacity:.65"></div>
<div class="a" style="left:1504.6px;top:327.50px;width:6.0px;height:1px;background:#4f86a8;opacity:.65"></div>
<div class="a" style="left:1504.6px;top:329.17px;width:5.0px;height:1px;background:#a07c58;opacity:.65"></div>
<div class="a" style="left:1504.6px;top:330.84px;width:9.0px;height:1px;background:#a07c58;opacity:.65"></div>
<div class="a" style="left:1514.4px;top:330.84px;width:8.0px;height:1px;background:#547a48;opacity:.65"></div>
<div class="a" style="left:1523.2px;top:330.84px;width:7.0px;height:1px;background:#a5a57a;opacity:.65"></div>
<div class="a" style="left:1531.0px;top:330.84px;width:7.0px;height:1px;background:#6f9cb8;opacity:.65"></div>
<div class="a" style="left:1538.8px;top:330.84px;width:5.0px;height:1px;background:#3f8c7e;opacity:.65"></div>
<div class="a" style="left:1544.6px;top:330.84px;width:4.0px;height:1px;background:#3f8c7e;opacity:.65"></div>
<div class="a" style="left:1504.6px;top:332.51px;width:9.0px;height:1px;background:#547a48;opacity:.65"></div>
<div class="a" style="left:1514.4px;top:332.51px;width:10.0px;height:1px;background:#8c5a8c;opacity:.65"></div>
<div class="a" style="left:1526.1px;top:332.51px;width:6.0px;height:1px;background:#4f86a8;opacity:.65"></div>
<div class="a" style="left:1532.9px;top:332.51px;width:3.0px;height:1px;background:#6f9cb8;opacity:.65"></div>
<div class="a" style="left:1536.7px;top:332.51px;width:6.0px;height:1px;background:#8a8a8a;opacity:.65"></div>
<div class="a" style="left:1544.4px;top:332.51px;width:5.0px;height:1px;background:#3f8c7e;opacity:.65"></div>
<div class="a" style="left:1550.2px;top:332.51px;width:4.0px;height:1px;background:#4f86a8;opacity:.65"></div>
<div class="a" style="left:1555.0px;top:332.51px;width:4.6px;height:1px;background:#a5a57a;opacity:.65"></div>
<div class="a" style="left:1504.6px;top:335.85px;width:3.0px;height:1px;background:#6f9cb8;opacity:.65"></div>
<div class="a" style="left:1508.4px;top:335.85px;width:7.0px;height:1px;background:#547a48;opacity:.65"></div>
<div class="a" style="left:1517.1px;top:335.85px;width:9.0px;height:1px;background:#8a8a8a;opacity:.65"></div>
<div class="a" style="left:1527.8px;top:335.85px;width:4.0px;height:1px;background:#3f8c7e;opacity:.65"></div>
<div class="a" style="left:1533.5px;top:335.85px;width:5.1px;height:1px;background:#547a48;opacity:.65"></div>
<div class="a" style="left:1504.6px;top:337.52px;width:3.0px;height:1px;background:#a06e5a;opacity:.65"></div>
<div class="a" style="left:1504.6px;top:339.19px;width:5.0px;height:1px;background:#a5a57a;opacity:.65"></div>
<div class="a" style="left:1510.4px;top:339.19px;width:3.0px;height:1px;background:#a07c58;opacity:.65"></div>
<div class="a" style="left:1504.6px;top:340.86px;width:5.0px;height:1px;background:#a06e5a;opacity:.65"></div>
<div class="a" style="left:1511.3px;top:340.86px;width:10.0px;height:1px;background:#3f8c7e;opacity:.65"></div>
<div class="a" style="left:1522.1px;top:340.86px;width:4.0px;height:1px;background:#4f86a8;opacity:.65"></div>
<div class="a" style="left:1526.9px;top:340.86px;width:3.0px;height:1px;background:#a5a57a;opacity:.65"></div>
<div class="a" style="left:1530.7px;top:340.86px;width:2.0px;height:1px;background:#a06e5a;opacity:.65"></div>
<div class="a" style="left:1533.5px;top:340.86px;width:10.0px;height:1px;background:#a07c58;opacity:.65"></div>
<div class="a" style="left:1544.3px;top:340.86px;width:9.0px;height:1px;background:#547a48;opacity:.65"></div>
<div class="a" style="left:1554.1px;top:340.86px;width:5.0px;height:1px;background:#a06e5a;opacity:.65"></div>
<div class="a" style="left:1504.6px;top:342.53px;width:6.0px;height:1px;background:#a5a57a;opacity:.65"></div>
<div class="a" style="left:1511.4px;top:342.53px;width:9.0px;height:1px;background:#4f86a8;opacity:.65"></div>
<div class="a" style="left:1522.1px;top:342.53px;width:4.0px;height:1px;background:#4f86a8;opacity:.65"></div>
<div class="a" style="left:1526.9px;top:342.53px;width:8.0px;height:1px;background:#8c5a8c;opacity:.65"></div>
<div class="a" style="left:1536.6px;top:342.53px;width:4.0px;height:1px;background:#a07c58;opacity:.65"></div>
<div class="a" style="left:1541.4px;top:342.53px;width:5.0px;height:1px;background:#6f9cb8;opacity:.65"></div>
<div class="a" style="left:1548.1px;top:342.53px;width:8.0px;height:1px;background:#8a8a8a;opacity:.65"></div>
<div class="a" style="left:1556.9px;top:342.53px;width:2.7px;height:1px;background:#a06e5a;opacity:.65"></div>
<div class="a" style="left:1501.3px;top:344.20px;width:5.0px;height:1px;background:#6f9cb8;opacity:.65"></div>
<div class="a" style="left:1501.3px;top:345.87px;width:5.0px;height:1px;background:#a07c58;opacity:.65"></div>
<div class="a" style="left:1501.3px;top:347.54px;width:6.0px;height:1px;background:#8c5a8c;opacity:.65"></div>
<div class="a" style="left:1508.1px;top:347.54px;width:7.0px;height:1px;background:#3f8c7e;opacity:.65"></div>
<div class="a" style="left:1515.9px;top:347.54px;width:4.0px;height:1px;background:#a07c58;opacity:.65"></div>
<div class="a" style="left:1520.7px;top:347.54px;width:6.6px;height:1px;background:#a5a57a;opacity:.65"></div>
<div class="a" style="left:1501.3px;top:349.21px;width:4.0px;height:1px;background:#4f86a8;opacity:.65"></div>
<div class="a" style="left:1506.1px;top:349.21px;width:2.0px;height:1px;background:#6f9cb8;opacity:.65"></div>
<div class="a" style="left:1508.9px;top:349.21px;width:8.0px;height:1px;background:#8c5a8c;opacity:.65"></div>
<div class="a" style="left:1501.3px;top:350.88px;width:8.0px;height:1px;background:#a07c58;opacity:.65"></div>
<div class="a" style="left:1510.1px;top:350.88px;width:0.2px;height:1px;background:#a5a57a;opacity:.65"></div>
<div class="a" style="left:1501.3px;top:352.55px;width:5.0px;height:1px;background:#3f8c7e;opacity:.65"></div>
<div class="a" style="left:1507.1px;top:352.55px;width:8.0px;height:1px;background:#3f8c7e;opacity:.65"></div>
<div class="a" style="left:1515.9px;top:352.55px;width:6.0px;height:1px;background:#a06e5a;opacity:.65"></div>
<div class="a" style="left:1522.7px;top:352.55px;width:4.0px;height:1px;background:#a07c58;opacity:.65"></div>
<div class="a" style="left:1501.3px;top:354.22px;width:9.0px;height:1px;background:#3f8c7e;opacity:.65"></div>
<div class="a" style="left:1501.3px;top:357.56px;width:4.0px;height:1px;background:#a06e5a;opacity:.65"></div>
<div class="a" style="left:1506.1px;top:357.56px;width:8.0px;height:1px;background:#a06e5a;opacity:.65"></div>
<div class="a" style="left:1514.9px;top:357.56px;width:2.0px;height:1px;background:#a07c58;opacity:.65"></div>
<div class="a" style="left:1517.7px;top:357.56px;width:8.0px;height:1px;background:#8a8a8a;opacity:.65"></div>
<div class="a" style="left:1527.4px;top:357.56px;width:2.0px;height:1px;background:#3f8c7e;opacity:.65"></div>
<div class="a" style="left:1531.1px;top:357.56px;width:6.0px;height:1px;background:#4f86a8;opacity:.65"></div>
<div class="a" style="left:1537.9px;top:357.56px;width:7.4px;height:1px;background:#3f8c7e;opacity:.65"></div>
<div class="a" style="left:1501.3px;top:359.23px;width:3.0px;height:1px;background:#a07c58;opacity:.65"></div>
<div class="a" style="left:1498.0px;top:360.90px;width:8.0px;height:1px;background:#8a8a8a;opacity:.65"></div>
<div class="a" style="left:1506.8px;top:360.90px;width:7.2px;height:1px;background:#547a48;opacity:.65"></div>
<div class="a" style="left:1498.0px;top:362.57px;width:7.0px;height:1px;background:#3f8c7e;opacity:.65"></div>
<div class="a" style="left:1505.8px;top:362.57px;width:6.0px;height:1px;background:#a5a57a;opacity:.65"></div>
<div class="a" style="left:1512.6px;top:362.57px;width:5.4px;height:1px;background:#a07c58;opacity:.65"></div>
<div class="a" style="left:1498.0px;top:364.24px;width:3.0px;height:1px;background:#a5a57a;opacity:.65"></div>
<div class="a" style="left:1502.7px;top:364.24px;width:3.0px;height:1px;background:#3f8c7e;opacity:.65"></div>
<div class="a" style="left:1506.5px;top:364.24px;width:0.5px;height:1px;background:#a5a57a;opacity:.65"></div>
<div class="a" style="left:1498.0px;top:365.91px;width:3.0px;height:1px;background:#8c5a8c;opacity:.65"></div>
<div class="a" style="left:1502.7px;top:365.91px;width:10.0px;height:1px;background:#a07c58;opacity:.65"></div>
<div class="a" style="left:1514.4px;top:365.91px;width:3.0px;height:1px;background:#a06e5a;opacity:.65"></div>
<div class="a" style="left:1498.0px;top:367.58px;width:4.0px;height:1px;background:#a07c58;opacity:.65"></div>
<div class="a" style="left:1502.8px;top:367.58px;width:8.0px;height:1px;background:#6f9cb8;opacity:.65"></div>
<div class="a" style="left:1511.6px;top:367.58px;width:6.4px;height:1px;background:#6f9cb8;opacity:.65"></div>
<div class="a" style="left:1498.0px;top:369.25px;width:6.0px;height:1px;background:#4f86a8;opacity:.65"></div>
<div class="a" style="left:1504.8px;top:369.25px;width:2.2px;height:1px;background:#a07c58;opacity:.65"></div>
<div class="a" style="left:1498.0px;top:370.92px;width:10.0px;height:1px;background:#a06e5a;opacity:.65"></div>
<div class="a" style="left:1508.8px;top:370.92px;width:3.0px;height:1px;background:#a07c58;opacity:.65"></div>
<div class="a" style="left:1512.6px;top:370.92px;width:10.0px;height:1px;background:#a06e5a;opacity:.65"></div>
<div class="a" style="left:1524.3px;top:370.92px;width:7.0px;height:1px;background:#a06e5a;opacity:.65"></div>
<div class="a" style="left:1501.3px;top:372.59px;width:2.0px;height:1px;background:#a5a57a;opacity:.65"></div>
<div class="a" style="left:1504.1px;top:372.59px;width:8.0px;height:1px;background:#8a8a8a;opacity:.65"></div>
<div class="a" style="left:1512.9px;top:372.59px;width:0.4px;height:1px;background:#a06e5a;opacity:.65"></div>
<div class="a" style="left:1501.3px;top:374.26px;width:9.0px;height:1px;background:#a5a57a;opacity:.65"></div>
<div class="a" style="left:1511.1px;top:374.26px;width:2.0px;height:1px;background:#8c5a8c;opacity:.65"></div>
<div class="a" style="left:1514.8px;top:374.26px;width:2.0px;height:1px;background:#a07c58;opacity:.65"></div>
<div class="a" style="left:1518.5px;top:374.26px;width:8.8px;height:1px;background:#a06e5a;opacity:.65"></div>
<div class="a" style="left:1501.3px;top:375.93px;width:3.0px;height:1px;background:#3f8c7e;opacity:.65"></div>
<div class="a" style="left:1505.1px;top:375.93px;width:8.0px;height:1px;background:#6f9cb8;opacity:.65"></div>
<div class="a" style="left:1513.9px;top:375.93px;width:3.0px;height:1px;background:#6f9cb8;opacity:.65"></div>
<div class="a" style="left:1517.7px;top:375.93px;width:10.0px;height:1px;background:#8a8a8a;opacity:.65"></div>
<div class="a" style="left:1528.5px;top:375.93px;width:5.0px;height:1px;background:#a06e5a;opacity:.65"></div>
<div class="a" style="left:1534.3px;top:375.93px;width:1.0px;height:1px;background:#a5a57a;opacity:.65"></div>
<div class="a" style="left:1501.3px;top:377.60px;width:3.0px;height:1px;background:#547a48;opacity:.65"></div>
<div class="a" style="left:1505.1px;top:377.60px;width:2.0px;height:1px;background:#a5a57a;opacity:.65"></div>
<div class="a" style="left:1508.8px;top:377.60px;width:8.0px;height:1px;background:#a07c58;opacity:.65"></div>
<div class="a" style="left:1501.3px;top:379.27px;width:2.0px;height:1px;background:#a07c58;opacity:.65"></div>
<div class="a" style="left:1504.1px;top:379.27px;width:5.0px;height:1px;background:#4f86a8;opacity:.65"></div>
<div class="a" style="left:1509.9px;top:379.27px;width:3.4px;height:1px;background:#547a48;opacity:.65"></div>
<div class="a" style="left:1501.3px;top:380.94px;width:3.0px;height:1px;background:#3f8c7e;opacity:.65"></div>
<div class="a" style="left:1505.1px;top:380.94px;width:10.0px;height:1px;background:#4f86a8;opacity:.65"></div>
<div class="a" style="left:1516.8px;top:380.94px;width:3.0px;height:1px;background:#4f86a8;opacity:.65"></div>
<div class="a" style="left:1521.5px;top:380.94px;width:7.0px;height:1px;background:#6f9cb8;opacity:.65"></div>
<div class="a" style="left:1529.3px;top:380.94px;width:9.0px;height:1px;background:#4f86a8;opacity:.65"></div>
<div class="a" style="left:1540.0px;top:380.94px;width:5.0px;height:1px;background:#a06e5a;opacity:.65"></div>
<div class="a" style="left:1545.8px;top:380.94px;width:5.0px;height:1px;background:#a5a57a;opacity:.65"></div>
<div class="a" style="left:1551.6px;top:380.94px;width:3.0px;height:1px;background:#4f86a8;opacity:.65"></div>
<div class="a" style="left:1555.4px;top:380.94px;width:0.9px;height:1px;background:#a06e5a;opacity:.65"></div>
<div class="a" style="left:1501.3px;top:382.61px;width:5.0px;height:1px;background:#a07c58;opacity:.65"></div>
<div class="a" style="left:1507.1px;top:382.61px;width:4.0px;height:1px;background:#a07c58;opacity:.65"></div>
<div class="a" style="left:1511.9px;top:382.61px;width:8.0px;height:1px;background:#a06e5a;opacity:.65"></div>
<div class="a" style="left:1520.7px;top:382.61px;width:6.0px;height:1px;background:#a06e5a;opacity:.65"></div>
<div class="a" style="left:1527.5px;top:382.61px;width:2.0px;height:1px;background:#a07c58;opacity:.65"></div>
<div class="a" style="left:1530.3px;top:382.61px;width:10.0px;height:1px;background:#a5a57a;opacity:.65"></div>
<div class="a" style="left:1541.1px;top:382.61px;width:4.0px;height:1px;background:#a5a57a;opacity:.65"></div>
<div class="a" style="left:1501.3px;top:384.28px;width:6.0px;height:1px;background:#a07c58;opacity:.65"></div>
<div class="a" style="left:1508.1px;top:384.28px;width:10.0px;height:1px;background:#3f8c7e;opacity:.65"></div>
<div class="a" style="left:1518.9px;top:384.28px;width:8.0px;height:1px;background:#8a8a8a;opacity:.65"></div>
<div class="a" style="left:1498.0px;top:385.95px;width:10.0px;height:1px;background:#547a48;opacity:.65"></div>
<div class="a" style="left:1508.8px;top:385.95px;width:4.0px;height:1px;background:#6f9cb8;opacity:.65"></div>
<div class="a" style="left:1513.6px;top:385.95px;width:3.0px;height:1px;background:#6f9cb8;opacity:.65"></div>
<div class="a" style="left:1518.3px;top:385.95px;width:4.0px;height:1px;background:#547a48;opacity:.65"></div>
<div class="a" style="left:1524.0px;top:385.95px;width:7.0px;height:1px;background:#547a48;opacity:.65"></div>
<div class="a" style="left:1531.8px;top:385.95px;width:9.0px;height:1px;background:#a07c58;opacity:.65"></div>
<div class="a" style="left:1542.5px;top:385.95px;width:9.0px;height:1px;background:#a07c58;opacity:.65"></div>
<div class="a" style="left:1552.3px;top:385.95px;width:0.7px;height:1px;background:#8c5a8c;opacity:.65"></div>
<div class="a" style="left:1498.0px;top:387.62px;width:5.0px;height:1px;background:#a5a57a;opacity:.65"></div>
<div class="a" style="left:1503.8px;top:387.62px;width:2.0px;height:1px;background:#547a48;opacity:.65"></div>
<div class="a" style="left:1506.6px;top:387.62px;width:8.0px;height:1px;background:#a07c58;opacity:.65"></div>
<div class="a" style="left:1515.4px;top:387.62px;width:3.0px;height:1px;background:#4f86a8;opacity:.65"></div>
<div class="a" style="left:1520.1px;top:387.62px;width:3.9px;height:1px;background:#3f8c7e;opacity:.65"></div>
<div class="a" style="left:1504.6px;top:389.29px;width:6.0px;height:1px;background:#a5a57a;opacity:.65"></div>
<div class="a" style="left:1504.6px;top:392.63px;width:7.0px;height:1px;background:#a07c58;opacity:.65"></div>
<div class="a" style="left:1504.6px;top:394.30px;width:3.0px;height:1px;background:#3f8c7e;opacity:.65"></div>
<div class="a" style="left:1501.3px;top:395.97px;width:4.0px;height:1px;background:#547a48;opacity:.65"></div>
<div class="a" style="left:1506.1px;top:395.97px;width:3.0px;height:1px;background:#a07c58;opacity:.65"></div>
<div class="a" style="left:1509.9px;top:395.97px;width:4.0px;height:1px;background:#3f8c7e;opacity:.65"></div>
<div class="a" style="left:1515.6px;top:395.97px;width:3.0px;height:1px;background:#8a8a8a;opacity:.65"></div>
<div class="a" style="left:1520.3px;top:395.97px;width:1.0px;height:1px;background:#547a48;opacity:.65"></div>
<div class="a" style="left:1501.3px;top:397.64px;width:9.0px;height:1px;background:#a5a57a;opacity:.65"></div>
<div class="a" style="left:1511.1px;top:397.64px;width:3.0px;height:1px;background:#8a8a8a;opacity:.65"></div>
<div class="a" style="left:1514.9px;top:397.64px;width:7.0px;height:1px;background:#a07c58;opacity:.65"></div>
<div class="a" style="left:1523.6px;top:397.64px;width:5.0px;height:1px;background:#547a48;opacity:.65"></div>
<div class="a" style="left:1529.4px;top:397.64px;width:4.0px;height:1px;background:#a06e5a;opacity:.65"></div>
<div class="a" style="left:1534.2px;top:397.64px;width:1.1px;height:1px;background:#a5a57a;opacity:.65"></div>
<div class="a" style="left:1501.3px;top:399.31px;width:9.0px;height:1px;background:#3f8c7e;opacity:.65"></div>
<div class="a" style="left:1501.3px;top:400.98px;width:8.0px;height:1px;background:#6f9cb8;opacity:.65"></div>
<div class="a" style="left:1501.3px;top:402.65px;width:6.0px;height:1px;background:#a06e5a;opacity:.65"></div>
<div class="a" style="left:1501.3px;top:404.32px;width:7.0px;height:1px;background:#3f8c7e;opacity:.65"></div>
<div class="a" style="left:1509.1px;top:404.32px;width:1.2px;height:1px;background:#a06e5a;opacity:.65"></div>
<div class="a" style="left:1498.0px;top:407.66px;width:7.0px;height:1px;background:#8c5a8c;opacity:.65"></div>
<div class="a" style="left:1505.8px;top:407.66px;width:10.0px;height:1px;background:#547a48;opacity:.65"></div>
<div class="a" style="left:1516.6px;top:407.66px;width:5.0px;height:1px;background:#8a8a8a;opacity:.65"></div>
<div class="a" style="left:1522.4px;top:407.66px;width:1.6px;height:1px;background:#547a48;opacity:.65"></div>
<div class="a" style="left:1498.0px;top:409.33px;width:4.0px;height:1px;background:#a5a57a;opacity:.65"></div>
<div class="a" style="left:1503.7px;top:409.33px;width:2.0px;height:1px;background:#8a8a8a;opacity:.65"></div>
<div class="a" style="left:1506.5px;top:409.33px;width:7.0px;height:1px;background:#a07c58;opacity:.65"></div>
<div class="a" style="left:1498.0px;top:411.00px;width:4.0px;height:1px;background:#4f86a8;opacity:.65"></div>
<div class="a" style="left:1498.0px;top:412.67px;width:3.0px;height:1px;background:#a06e5a;opacity:.65"></div>
<div class="a" style="left:1501.8px;top:412.67px;width:4.0px;height:1px;background:#6f9cb8;opacity:.65"></div>
<div class="a" style="left:1507.5px;top:412.67px;width:2.5px;height:1px;background:#a06e5a;opacity:.65"></div>
<div class="a" style="left:1498.0px;top:414.34px;width:6.0px;height:1px;background:#6f9cb8;opacity:.65"></div>
<div class="a" style="left:1498.0px;top:416.01px;width:3.0px;height:1px;background:#8a8a8a;opacity:.65"></div>
<div class="a" style="left:1501.8px;top:416.01px;width:3.0px;height:1px;background:#6f9cb8;opacity:.65"></div>
<div class="a" style="left:1498.0px;top:417.68px;width:4.0px;height:1px;background:#a06e5a;opacity:.65"></div>
<div class="a" style="left:1498.0px;top:419.35px;width:6.0px;height:1px;background:#3f8c7e;opacity:.65"></div>
<div class="a" style="left:1504.8px;top:419.35px;width:9.0px;height:1px;background:#4f86a8;opacity:.65"></div>
<div class="a" style="left:1514.6px;top:419.35px;width:2.0px;height:1px;background:#547a48;opacity:.65"></div>
<div class="a" style="left:1517.4px;top:419.35px;width:3.0px;height:1px;background:#a06e5a;opacity:.65"></div>
<div class="a" style="left:1522.1px;top:419.35px;width:10.0px;height:1px;background:#a5a57a;opacity:.65"></div>
<div class="a" style="left:1532.9px;top:419.35px;width:9.0px;height:1px;background:#6f9cb8;opacity:.65"></div>
<div class="a" style="left:1501.3px;top:421.02px;width:8.0px;height:1px;background:#a07c58;opacity:.65"></div>
<div class="a" style="left:1510.1px;top:421.02px;width:7.0px;height:1px;background:#3f8c7e;opacity:.65"></div>
<div class="a" style="left:1518.8px;top:421.02px;width:5.0px;height:1px;background:#a07c58;opacity:.65"></div>
<div class="a" style="left:1524.6px;top:421.02px;width:10.0px;height:1px;background:#6f9cb8;opacity:.65"></div>
<div class="a" style="left:1501.3px;top:422.69px;width:4.0px;height:1px;background:#8c5a8c;opacity:.65"></div>
<div class="a" style="left:1506.1px;top:422.69px;width:7.0px;height:1px;background:#547a48;opacity:.65"></div>
<div class="a" style="left:1513.9px;top:422.69px;width:7.0px;height:1px;background:#a07c58;opacity:.65"></div>
<div class="a" style="left:1501.3px;top:426.03px;width:4.0px;height:1px;background:#4f86a8;opacity:.65"></div>
<div class="a" style="left:1506.1px;top:426.03px;width:7.0px;height:1px;background:#8a8a8a;opacity:.65"></div>
<div class="a" style="left:1513.9px;top:426.03px;width:7.0px;height:1px;background:#a5a57a;opacity:.65"></div>
<div class="a" style="left:1501.3px;top:427.70px;width:5.0px;height:1px;background:#547a48;opacity:.65"></div>
<div class="a" style="left:1507.1px;top:427.70px;width:4.0px;height:1px;background:#8c5a8c;opacity:.65"></div>
<div class="a" style="left:1511.9px;top:427.70px;width:5.4px;height:1px;background:#6f9cb8;opacity:.65"></div>
<div class="a" style="left:1501.3px;top:429.37px;width:2.0px;height:1px;background:#6f9cb8;opacity:.65"></div>
<div class="a" style="left:1504.1px;top:429.37px;width:7.0px;height:1px;background:#8a8a8a;opacity:.65"></div>
<div class="a" style="left:1511.9px;top:429.37px;width:5.0px;height:1px;background:#4f86a8;opacity:.65"></div>
<div class="a" style="left:1518.6px;top:429.37px;width:9.0px;height:1px;background:#3f8c7e;opacity:.65"></div>
<div class="a" style="left:1528.4px;top:429.37px;width:6.9px;height:1px;background:#3f8c7e;opacity:.65"></div>
<div class="a" style="left:1501.3px;top:431.04px;width:6.0px;height:1px;background:#a06e5a;opacity:.65"></div>
<div class="a" style="left:1508.1px;top:431.04px;width:2.0px;height:1px;background:#8a8a8a;opacity:.65"></div>
<div class="a" style="left:1511.8px;top:431.04px;width:3.0px;height:1px;background:#6f9cb8;opacity:.65"></div>
<div class="a" style="left:1515.6px;top:431.04px;width:2.0px;height:1px;background:#3f8c7e;opacity:.65"></div>
<div class="a" style="left:1519.3px;top:431.04px;width:2.0px;height:1px;background:#a06e5a;opacity:.65"></div>
<div class="a" style="left:1501.3px;top:432.71px;width:8.0px;height:1px;background:#a5a57a;opacity:.65"></div>
<div class="a" style="left:1510.1px;top:432.71px;width:6.0px;height:1px;background:#6f9cb8;opacity:.65"></div>
<div class="a" style="left:1516.9px;top:432.71px;width:5.0px;height:1px;background:#a5a57a;opacity:.65"></div>
<div class="a" style="left:1523.6px;top:432.71px;width:3.7px;height:1px;background:#4f86a8;opacity:.65"></div>
<div class="a" style="left:1501.3px;top:434.38px;width:4.0px;height:1px;background:#8a8a8a;opacity:.65"></div>
<div class="a" style="left:1501.3px;top:436.05px;width:6.0px;height:1px;background:#4f86a8;opacity:.65"></div>
<div class="a" style="left:1508.1px;top:436.05px;width:4.0px;height:1px;background:#8a8a8a;opacity:.65"></div>
<div class="a" style="left:1512.9px;top:436.05px;width:4.0px;height:1px;background:#3f8c7e;opacity:.65"></div>
<div class="a" style="left:1517.7px;top:436.05px;width:5.0px;height:1px;background:#a06e5a;opacity:.65"></div>
<div class="a" style="left:1524.4px;top:436.05px;width:4.0px;height:1px;background:#a07c58;opacity:.65"></div>
<div class="a" style="left:1530.1px;top:436.05px;width:5.2px;height:1px;background:#a06e5a;opacity:.65"></div>
<div class="a" style="left:1498.0px;top:437.72px;width:6.0px;height:1px;background:#8c5a8c;opacity:.65"></div>
<div class="a" style="left:1505.7px;top:437.72px;width:4.3px;height:1px;background:#3f8c7e;opacity:.65"></div>
<div class="a" style="left:1498.0px;top:439.39px;width:4.0px;height:1px;background:#547a48;opacity:.65"></div>
<div class="a" style="left:1502.8px;top:439.39px;width:1.2px;height:1px;background:#4f86a8;opacity:.65"></div>
<div class="a" style="left:1498.0px;top:441.06px;width:2.0px;height:1px;background:#4f86a8;opacity:.65"></div>
<div class="a" style="left:1501.7px;top:441.06px;width:3.0px;height:1px;background:#a07c58;opacity:.65"></div>
<div class="a" style="left:1505.5px;top:441.06px;width:5.0px;height:1px;background:#a06e5a;opacity:.65"></div>
<div class="a" style="left:1511.3px;top:441.06px;width:5.0px;height:1px;background:#8a8a8a;opacity:.65"></div>
<div class="a" style="left:1517.1px;top:441.06px;width:0.9px;height:1px;background:#3f8c7e;opacity:.65"></div>
<div class="a" style="left:1498.0px;top:442.73px;width:3.0px;height:1px;background:#8a8a8a;opacity:.65"></div>
<div class="a" style="left:1502.7px;top:442.73px;width:7.0px;height:1px;background:#a5a57a;opacity:.65"></div>
<div class="a" style="left:1498.0px;top:444.40px;width:2.0px;height:1px;background:#a06e5a;opacity:.65"></div>
<div class="a" style="left:1500.8px;top:444.40px;width:5.0px;height:1px;background:#a5a57a;opacity:.65"></div>
<div class="a" style="left:1507.5px;top:444.40px;width:3.0px;height:1px;background:#6f9cb8;opacity:.65"></div>
<div class="a" style="left:1511.3px;top:444.40px;width:10.0px;height:1px;background:#a07c58;opacity:.65"></div>
<div class="a" style="left:1523.0px;top:444.40px;width:4.0px;height:1px;background:#a5a57a;opacity:.65"></div>
<div class="a" style="left:1527.8px;top:444.40px;width:8.0px;height:1px;background:#a5a57a;opacity:.65"></div>
<div class="a" style="left:1536.6px;top:444.40px;width:4.0px;height:1px;background:#8a8a8a;opacity:.65"></div>
<div class="a" style="left:1541.4px;top:444.40px;width:7.0px;height:1px;background:#4f86a8;opacity:.65"></div>
<div class="a" style="left:1550.1px;top:444.40px;width:2.9px;height:1px;background:#547a48;opacity:.65"></div>
<div class="a" style="left:1501.3px;top:446.07px;width:6.0px;height:1px;background:#8c5a8c;opacity:.65"></div>
<div class="a" style="left:1501.3px;top:447.74px;width:4.0px;height:1px;background:#8c5a8c;opacity:.65"></div>
<div class="a" style="left:1506.1px;top:447.74px;width:4.2px;height:1px;background:#547a48;opacity:.65"></div>
<div class="a" style="left:1501.3px;top:451.08px;width:7.0px;height:1px;background:#6f9cb8;opacity:.65"></div>
<div class="a" style="left:1509.1px;top:451.08px;width:2.0px;height:1px;background:#6f9cb8;opacity:.65"></div>
<div class="a" style="left:1512.8px;top:451.08px;width:0.5px;height:1px;background:#3f8c7e;opacity:.65"></div>
<div class="a" style="left:1501.3px;top:452.75px;width:10.0px;height:1px;background:#3f8c7e;opacity:.65"></div>
<div class="a" style="left:1512.1px;top:452.75px;width:10.0px;height:1px;background:#4f86a8;opacity:.65"></div>
<div class="a" style="left:1522.9px;top:452.75px;width:6.0px;height:1px;background:#3f8c7e;opacity:.65"></div>
<div class="a" style="left:1530.6px;top:452.75px;width:4.0px;height:1px;background:#a5a57a;opacity:.65"></div>
<div class="a" style="left:1501.3px;top:454.42px;width:9.0px;height:1px;background:#a07c58;opacity:.65"></div>
<div class="a" style="left:1501.3px;top:456.09px;width:5.0px;height:1px;background:#8c5a8c;opacity:.65"></div>
<div class="a" style="left:1507.1px;top:456.09px;width:6.0px;height:1px;background:#3f8c7e;opacity:.65"></div>
<div class="a" style="left:1513.9px;top:456.09px;width:3.4px;height:1px;background:#a5a57a;opacity:.65"></div>
<div class="a" style="left:1501.3px;top:457.76px;width:10.0px;height:1px;background:#a07c58;opacity:.65"></div>
<div class="a" style="left:1513.0px;top:457.76px;width:6.0px;height:1px;background:#a07c58;opacity:.65"></div>
<div class="a" style="left:1519.8px;top:457.76px;width:1.5px;height:1px;background:#a06e5a;opacity:.65"></div>
<div class="a" style="left:1501.3px;top:461.10px;width:7.0px;height:1px;background:#3f8c7e;opacity:.65"></div>
<div class="a" style="left:1504.6px;top:462.77px;width:10.0px;height:1px;background:#8c5a8c;opacity:.65"></div>
<div class="a" style="left:1515.4px;top:462.77px;width:9.2px;height:1px;background:#547a48;opacity:.65"></div>
<div class="a" style="left:1504.6px;top:464.44px;width:8.0px;height:1px;background:#a06e5a;opacity:.65"></div>
<div class="a" style="left:1504.6px;top:467.78px;width:3.0px;height:1px;background:#547a48;opacity:.65"></div>
<div class="a" style="left:1508.4px;top:467.78px;width:3.0px;height:1px;background:#8a8a8a;opacity:.65"></div>
<div class="a" style="left:1512.2px;top:467.78px;width:8.0px;height:1px;background:#a07c58;opacity:.65"></div>
<div class="a" style="left:1521.0px;top:467.78px;width:7.0px;height:1px;background:#8a8a8a;opacity:.65"></div>
<div class="a" style="left:1528.8px;top:467.78px;width:8.0px;height:1px;background:#a07c58;opacity:.65"></div>
<div class="a" style="left:1538.5px;top:467.78px;width:0.1px;height:1px;background:#3f8c7e;opacity:.65"></div>
<div class="a" style="left:1504.6px;top:469.45px;width:2.0px;height:1px;background:#8c5a8c;opacity:.65"></div>
<div class="a" style="left:1508.3px;top:469.45px;width:3.3px;height:1px;background:#8c5a8c;opacity:.65"></div>
<div class="a" style="left:1504.6px;top:471.12px;width:8.0px;height:1px;background:#3f8c7e;opacity:.65"></div>
<div class="a" style="left:1513.4px;top:471.12px;width:9.0px;height:1px;background:#4f86a8;opacity:.65"></div>
<div class="a" style="left:1523.2px;top:471.12px;width:9.0px;height:1px;background:#6f9cb8;opacity:.65"></div>
<div class="a" style="left:1533.9px;top:471.12px;width:4.7px;height:1px;background:#3f8c7e;opacity:.65"></div>
<div class="a" style="left:1504.6px;top:472.79px;width:3.0px;height:1px;background:#a06e5a;opacity:.65"></div>
<div class="a" style="left:1504.6px;top:474.46px;width:2.0px;height:1px;background:#8c5a8c;opacity:.65"></div>
<div class="a" style="left:1508.3px;top:474.46px;width:9.0px;height:1px;background:#8c5a8c;opacity:.65"></div>
<div class="a" style="left:1518.1px;top:474.46px;width:7.0px;height:1px;background:#6f9cb8;opacity:.65"></div>
<div class="a" style="left:1525.9px;top:474.46px;width:5.0px;height:1px;background:#4f86a8;opacity:.65"></div>
<div class="a" style="left:1531.7px;top:474.46px;width:9.0px;height:1px;background:#6f9cb8;opacity:.65"></div>
<div class="a" style="left:1541.5px;top:474.46px;width:7.1px;height:1px;background:#6f9cb8;opacity:.65"></div>
<div class="a" style="left:1504.6px;top:476.13px;width:6.0px;height:1px;background:#8a8a8a;opacity:.65"></div>
<div class="a" style="left:1511.4px;top:476.13px;width:5.0px;height:1px;background:#a5a57a;opacity:.65"></div>
<div class="a" style="left:1518.1px;top:476.13px;width:2.5px;height:1px;background:#a5a57a;opacity:.65"></div>
<div class="a" style="left:1511.2px;top:477.80px;width:3.0px;height:1px;background:#a5a57a;opacity:.65"></div>
<div class="a" style="left:1515.9px;top:477.80px;width:3.3px;height:1px;background:#4f86a8;opacity:.65"></div>
<div class="a" style="left:1511.2px;top:479.47px;width:6.0px;height:1px;background:#a5a57a;opacity:.65"></div>
<div class="a" style="left:1518.0px;top:479.47px;width:10.0px;height:1px;background:#547a48;opacity:.65"></div>
<div class="a" style="left:1528.8px;top:479.47px;width:9.0px;height:1px;background:#6f9cb8;opacity:.65"></div>
<div class="a" style="left:1538.6px;top:479.47px;width:3.0px;height:1px;background:#8c5a8c;opacity:.65"></div>
<div class="a" style="left:1543.3px;top:479.47px;width:7.0px;height:1px;background:#6f9cb8;opacity:.65"></div>
<div class="a" style="left:1551.1px;top:479.47px;width:3.0px;height:1px;background:#4f86a8;opacity:.65"></div>
<div class="a" style="left:1511.2px;top:481.14px;width:6.0px;height:1px;background:#6f9cb8;opacity:.65"></div>
<div class="a" style="left:1511.2px;top:482.81px;width:5.0px;height:1px;background:#a06e5a;opacity:.65"></div>
<div class="a" style="left:1511.2px;top:484.48px;width:3.0px;height:1px;background:#8c5a8c;opacity:.65"></div>
<div class="a" style="left:1514.5px;top:486.15px;width:4.0px;height:1px;background:#a06e5a;opacity:.65"></div>
<div class="a" style="left:1519.3px;top:486.15px;width:1.2px;height:1px;background:#8a8a8a;opacity:.65"></div>
<div class="a" style="left:1514.5px;top:487.82px;width:2.0px;height:1px;background:#8c5a8c;opacity:.65"></div>
<div class="a" style="left:1517.3px;top:487.82px;width:4.0px;height:1px;background:#a5a57a;opacity:.65"></div>
<div class="a" style="left:1522.1px;top:487.82px;width:9.0px;height:1px;background:#8a8a8a;opacity:.65"></div>
<div class="a" style="left:1532.8px;top:487.82px;width:2.0px;height:1px;background:#a5a57a;opacity:.65"></div>
<div class="a" style="left:1535.6px;top:487.82px;width:3.0px;height:1px;background:#547a48;opacity:.65"></div>
<div class="a" style="left:1539.4px;top:487.82px;width:3.0px;height:1px;background:#4f86a8;opacity:.65"></div>
<div class="a" style="left:1544.1px;top:487.82px;width:2.0px;height:1px;background:#3f8c7e;opacity:.65"></div>
<div class="a" style="left:1546.9px;top:487.82px;width:1.6px;height:1px;background:#8c5a8c;opacity:.65"></div>
<div class="a" style="left:1514.5px;top:489.49px;width:7.0px;height:1px;background:#a07c58;opacity:.65"></div>
<div class="a" style="left:1522.3px;top:489.49px;width:8.0px;height:1px;background:#8a8a8a;opacity:.65"></div>
<div class="a" style="left:1531.1px;top:489.49px;width:3.4px;height:1px;background:#3f8c7e;opacity:.65"></div>
<div class="a" style="left:1514.5px;top:494.50px;width:3.0px;height:1px;background:#8a8a8a;opacity:.65"></div>
<div class="a" style="left:1518.3px;top:494.50px;width:0.2px;height:1px;background:#a06e5a;opacity:.65"></div>
<div class="a" style="left:1514.5px;top:496.17px;width:6.0px;height:1px;background:#6f9cb8;opacity:.65"></div>
<div class="a" style="left:1522.2px;top:496.17px;width:9.0px;height:1px;background:#8c5a8c;opacity:.65"></div>
<div class="a" style="left:1532.0px;top:496.17px;width:2.0px;height:1px;background:#8c5a8c;opacity:.65"></div>
<div class="a" style="left:1534.8px;top:496.17px;width:4.0px;height:1px;background:#6f9cb8;opacity:.65"></div>
<div class="a" style="left:1540.5px;top:496.17px;width:4.0px;height:1px;background:#547a48;opacity:.65"></div>
<div class="a" style="left:1545.3px;top:496.17px;width:5.0px;height:1px;background:#a06e5a;opacity:.65"></div>
<div class="a" style="left:1552.0px;top:496.17px;width:5.0px;height:1px;background:#8a8a8a;opacity:.65"></div>
<div class="a" style="left:1557.8px;top:496.17px;width:0.7px;height:1px;background:#547a48;opacity:.65"></div>
<div class="a" style="left:1514.5px;top:497.84px;width:10.0px;height:1px;background:#3f8c7e;opacity:.65"></div>
<div class="a" style="left:1526.2px;top:497.84px;width:5.0px;height:1px;background:#8a8a8a;opacity:.65"></div>
<div class="a" style="left:1532.9px;top:497.84px;width:2.0px;height:1px;background:#a07c58;opacity:.65"></div>
<div class="a" style="left:1536.6px;top:497.84px;width:5.0px;height:1px;background:#8c5a8c;opacity:.65"></div>
<div class="a" style="left:1542.4px;top:497.84px;width:10.0px;height:1px;background:#6f9cb8;opacity:.65"></div>
<div class="a" style="left:1553.2px;top:497.84px;width:5.3px;height:1px;background:#8a8a8a;opacity:.65"></div>
<div class="a" style="left:1514.5px;top:499.51px;width:2.0px;height:1px;background:#547a48;opacity:.65"></div>
<div class="a" style="left:1517.3px;top:499.51px;width:5.0px;height:1px;background:#4f86a8;opacity:.65"></div>
<div class="a" style="left:1523.1px;top:499.51px;width:3.0px;height:1px;background:#a5a57a;opacity:.65"></div>
<div class="a" style="left:1527.8px;top:499.51px;width:7.0px;height:1px;background:#8c5a8c;opacity:.65"></div>
<div class="a" style="left:1536.5px;top:499.51px;width:3.0px;height:1px;background:#4f86a8;opacity:.65"></div>
<div class="a" style="left:1541.2px;top:499.51px;width:7.3px;height:1px;background:#8c5a8c;opacity:.65"></div>
<div class="a" style="left:1514.5px;top:502.85px;width:10.0px;height:1px;background:#8a8a8a;opacity:.65"></div>
<div class="a" style="left:1525.3px;top:502.85px;width:1.2px;height:1px;background:#a07c58;opacity:.65"></div>
<div class="a" style="left:1514.5px;top:504.52px;width:7.0px;height:1px;background:#547a48;opacity:.65"></div>
<div class="a" style="left:1523.2px;top:504.52px;width:10.0px;height:1px;background:#a07c58;opacity:.65"></div>
<div class="a" style="left:1534.0px;top:504.52px;width:5.0px;height:1px;background:#a06e5a;opacity:.65"></div>
<div class="a" style="left:1539.8px;top:504.52px;width:5.0px;height:1px;background:#3f8c7e;opacity:.65"></div>
<div class="a" style="left:1545.6px;top:504.52px;width:4.0px;height:1px;background:#547a48;opacity:.65"></div>
<div class="a" style="left:1550.4px;top:504.52px;width:2.0px;height:1px;background:#3f8c7e;opacity:.65"></div>
<div class="a" style="left:1553.2px;top:504.52px;width:5.3px;height:1px;background:#8a8a8a;opacity:.65"></div>
<div class="a" style="left:1517.8px;top:506.19px;width:2.0px;height:1px;background:#547a48;opacity:.65"></div>
<div class="a" style="left:1521.5px;top:506.19px;width:3.0px;height:1px;background:#a5a57a;opacity:.65"></div>
<div class="a" style="left:1525.3px;top:506.19px;width:2.0px;height:1px;background:#547a48;opacity:.65"></div>
<div class="a" style="left:1528.1px;top:506.19px;width:1.7px;height:1px;background:#a06e5a;opacity:.65"></div>
<div class="a" style="left:1517.8px;top:507.86px;width:4.0px;height:1px;background:#8a8a8a;opacity:.65"></div>
<div class="a" style="left:1517.8px;top:509.53px;width:10.0px;height:1px;background:#a06e5a;opacity:.65"></div>
<div class="a" style="left:1528.6px;top:509.53px;width:2.0px;height:1px;background:#547a48;opacity:.65"></div>
<div class="a" style="left:1531.4px;top:509.53px;width:8.0px;height:1px;background:#8a8a8a;opacity:.65"></div>
<div class="a" style="left:1540.2px;top:509.53px;width:4.0px;height:1px;background:#a07c58;opacity:.65"></div>
<div class="a" style="left:1545.0px;top:509.53px;width:7.0px;height:1px;background:#4f86a8;opacity:.65"></div>
<div class="a" style="left:1552.8px;top:509.53px;width:7.0px;height:1px;background:#4f86a8;opacity:.65"></div>
<div class="a" style="left:1561.5px;top:509.53px;width:4.0px;height:1px;background:#547a48;opacity:.65"></div>
<div class="a" style="left:1566.3px;top:509.53px;width:2.0px;height:1px;background:#4f86a8;opacity:.65"></div>
<div class="a" style="left:1569.1px;top:509.53px;width:3.7px;height:1px;background:#4f86a8;opacity:.65"></div>
<div class="a" style="left:1517.8px;top:512.87px;width:6.0px;height:1px;background:#a07c58;opacity:.65"></div>
<div class="a" style="left:1517.8px;top:516.21px;width:8.0px;height:1px;background:#3f8c7e;opacity:.65"></div>
<div class="a" style="left:1526.6px;top:516.21px;width:3.2px;height:1px;background:#a06e5a;opacity:.65"></div>
<div class="a" style="left:1517.8px;top:517.88px;width:9.0px;height:1px;background:#547a48;opacity:.65"></div>
<div class="a" style="left:1527.6px;top:517.88px;width:2.2px;height:1px;background:#a06e5a;opacity:.65"></div>
<div class="a" style="left:1517.8px;top:519.55px;width:5.0px;height:1px;background:#a06e5a;opacity:.65"></div>
<div class="a" style="left:1523.6px;top:519.55px;width:9.0px;height:1px;background:#547a48;opacity:.65"></div>
<div class="a" style="left:1533.4px;top:519.55px;width:0.4px;height:1px;background:#4f86a8;opacity:.65"></div>
<div class="a" style="left:1517.8px;top:521.22px;width:3.0px;height:1px;background:#a06e5a;opacity:.65"></div>
<div class="a" style="left:1521.6px;top:521.22px;width:3.0px;height:1px;background:#6f9cb8;opacity:.65"></div>
<div class="a" style="left:1525.4px;top:521.22px;width:7.0px;height:1px;background:#547a48;opacity:.65"></div>
<div class="a" style="left:1534.1px;top:521.22px;width:3.7px;height:1px;background:#4f86a8;opacity:.65"></div>
<div class="a" style="left:1517.8px;top:522.89px;width:9.0px;height:1px;background:#a07c58;opacity:.65"></div>
<div class="a" style="left:1517.8px;top:524.56px;width:9.0px;height:1px;background:#3f8c7e;opacity:.65"></div>
<div class="a" style="left:1517.8px;top:526.23px;width:3.0px;height:1px;background:#547a48;opacity:.65"></div>
<div class="a" style="left:1522.5px;top:526.23px;width:2.3px;height:1px;background:#8a8a8a;opacity:.65"></div>
<div class="a" style="left:1517.8px;top:527.90px;width:2.0px;height:1px;background:#8c5a8c;opacity:.65"></div>
<div class="a" style="left:1521.5px;top:527.90px;width:6.0px;height:1px;background:#3f8c7e;opacity:.65"></div>
<div class="a" style="left:1529.2px;top:527.90px;width:7.0px;height:1px;background:#3f8c7e;opacity:.65"></div>
<div class="a" style="left:1537.0px;top:527.90px;width:6.8px;height:1px;background:#8c5a8c;opacity:.65"></div>
<div class="a" style="left:1517.8px;top:529.57px;width:2.0px;height:1px;background:#a5a57a;opacity:.65"></div>
<div class="a" style="left:1520.6px;top:529.57px;width:3.0px;height:1px;background:#8c5a8c;opacity:.65"></div>
<div class="a" style="left:1524.4px;top:529.57px;width:2.0px;height:1px;background:#a06e5a;opacity:.65"></div>
<div class="a" style="left:1527.2px;top:529.57px;width:4.0px;height:1px;background:#6f9cb8;opacity:.65"></div>
<div class="a" style="left:1532.0px;top:529.57px;width:8.0px;height:1px;background:#8a8a8a;opacity:.65"></div>
<div class="a" style="left:1540.8px;top:529.57px;width:2.0px;height:1px;background:#4f86a8;opacity:.65"></div>
<div class="a" style="left:1543.6px;top:529.57px;width:10.0px;height:1px;background:#547a48;opacity:.65"></div>
<div class="a" style="left:1555.3px;top:529.57px;width:3.0px;height:1px;background:#3f8c7e;opacity:.65"></div>
<div class="a" style="left:1560.0px;top:529.57px;width:8.0px;height:1px;background:#a5a57a;opacity:.65"></div>
<div class="a" style="left:1568.8px;top:529.57px;width:4.0px;height:1px;background:#8c5a8c;opacity:.65"></div>
<div class="a" style="left:1517.8px;top:531.24px;width:9.0px;height:1px;background:#4f86a8;opacity:.65"></div>
<div class="a" style="left:1517.8px;top:532.91px;width:4.0px;height:1px;background:#547a48;opacity:.65"></div>
<div class="a" style="left:1523.5px;top:532.91px;width:9.0px;height:1px;background:#6f9cb8;opacity:.65"></div>
<div class="a" style="left:1534.2px;top:532.91px;width:2.0px;height:1px;background:#a07c58;opacity:.65"></div>
<div class="a" style="left:1537.0px;top:532.91px;width:10.0px;height:1px;background:#547a48;opacity:.65"></div>
<div class="a" style="left:1547.8px;top:532.91px;width:5.0px;height:1px;background:#a07c58;opacity:.65"></div>
<div class="a" style="left:1553.6px;top:532.91px;width:8.2px;height:1px;background:#4f86a8;opacity:.65"></div>
<div class="a" style="left:1517.8px;top:534.58px;width:3.0px;height:1px;background:#6f9cb8;opacity:.65"></div>
<div class="a" style="left:1517.8px;top:536.25px;width:5.0px;height:1px;background:#8a8a8a;opacity:.65"></div>
<div class="a" style="left:1523.6px;top:536.25px;width:0.2px;height:1px;background:#547a48;opacity:.65"></div>
<div class="a" style="left:1517.8px;top:537.92px;width:8.0px;height:1px;background:#6f9cb8;opacity:.65"></div>
<div class="a" style="left:1527.5px;top:537.92px;width:2.0px;height:1px;background:#3f8c7e;opacity:.65"></div>
<div class="a" style="left:1531.2px;top:537.92px;width:5.0px;height:1px;background:#6f9cb8;opacity:.65"></div>
<div class="a" style="left:1537.9px;top:537.92px;width:9.0px;height:1px;background:#6f9cb8;opacity:.65"></div>
<div class="a" style="left:1548.6px;top:537.92px;width:3.2px;height:1px;background:#a07c58;opacity:.65"></div>
<div class="a" style="left:1517.8px;top:539.59px;width:2.0px;height:1px;background:#a07c58;opacity:.65"></div>
<div class="a" style="left:1520.6px;top:539.59px;width:6.0px;height:1px;background:#6f9cb8;opacity:.65"></div>
<div class="a" style="left:1527.4px;top:539.59px;width:2.0px;height:1px;background:#4f86a8;opacity:.65"></div>
<div class="a" style="left:1531.1px;top:539.59px;width:9.0px;height:1px;background:#a06e5a;opacity:.65"></div>
<div class="a" style="left:1541.8px;top:539.59px;width:9.0px;height:1px;background:#a06e5a;opacity:.65"></div>
<div class="a" style="left:1551.6px;top:539.59px;width:0.2px;height:1px;background:#8c5a8c;opacity:.65"></div>
<div class="a" style="left:1517.8px;top:542.93px;width:6.0px;height:1px;background:#8a8a8a;opacity:.65"></div>
<div class="a" style="left:1524.6px;top:542.93px;width:6.0px;height:1px;background:#4f86a8;opacity:.65"></div>
<div class="a" style="left:1531.4px;top:542.93px;width:10.0px;height:1px;background:#a5a57a;opacity:.65"></div>
<div class="a" style="left:1543.1px;top:542.93px;width:6.0px;height:1px;background:#4f86a8;opacity:.65"></div>
<div class="a" style="left:1550.8px;top:542.93px;width:6.0px;height:1px;background:#8c5a8c;opacity:.65"></div>
<div class="a" style="left:1557.6px;top:542.93px;width:4.0px;height:1px;background:#3f8c7e;opacity:.65"></div>
<div class="a" style="left:1563.3px;top:542.93px;width:7.0px;height:1px;background:#3f8c7e;opacity:.65"></div>
<div class="a" style="left:1571.1px;top:542.93px;width:1.7px;height:1px;background:#8c5a8c;opacity:.65"></div>
<div class="a" style="left:1517.8px;top:544.60px;width:4.0px;height:1px;background:#3f8c7e;opacity:.65"></div>
<div class="a" style="left:1517.8px;top:546.27px;width:3.0px;height:1px;background:#6f9cb8;opacity:.65"></div>
<div class="a" style="left:1517.8px;top:547.94px;width:3.0px;height:1px;background:#6f9cb8;opacity:.65"></div>
<div class="a" style="left:1517.8px;top:549.61px;width:5.0px;height:1px;background:#6f9cb8;opacity:.65"></div>
<div class="a" style="left:1517.8px;top:551.28px;width:10.0px;height:1px;background:#8a8a8a;opacity:.65"></div>
<div class="a" style="left:1529.5px;top:551.28px;width:7.0px;height:1px;background:#a07c58;opacity:.65"></div>
<div class="a" style="left:1537.3px;top:551.28px;width:4.0px;height:1px;background:#4f86a8;opacity:.65"></div>
<div class="a" style="left:1542.1px;top:551.28px;width:1.7px;height:1px;background:#6f9cb8;opacity:.65"></div>
<div class="a" style="left:1517.8px;top:552.95px;width:7.0px;height:1px;background:#8c5a8c;opacity:.65"></div>
<div class="a" style="left:1525.6px;top:552.95px;width:5.0px;height:1px;background:#8c5a8c;opacity:.65"></div>
<div class="a" style="left:1532.3px;top:552.95px;width:5.5px;height:1px;background:#4f86a8;opacity:.65"></div>
<div class="a" style="left:1517.8px;top:557.96px;width:10.0px;height:1px;background:#a06e5a;opacity:.65"></div>
<div class="a" style="left:1529.5px;top:557.96px;width:2.0px;height:1px;background:#6f9cb8;opacity:.65"></div>
<div class="a" style="left:1532.3px;top:557.96px;width:1.5px;height:1px;background:#a5a57a;opacity:.65"></div>
<div class="a" style="left:1517.8px;top:561.30px;width:9.0px;height:1px;background:#4f86a8;opacity:.65"></div>
<div class="a" style="left:1528.5px;top:561.30px;width:5.3px;height:1px;background:#3f8c7e;opacity:.65"></div>
<div class="a" style="left:1517.8px;top:562.97px;width:3.0px;height:1px;background:#6f9cb8;opacity:.65"></div>
<div class="a" style="left:1517.8px;top:564.64px;width:6.0px;height:1px;background:#8a8a8a;opacity:.65"></div>
<div class="a" style="left:1517.8px;top:566.31px;width:6.0px;height:1px;background:#6f9cb8;opacity:.65"></div>
<div class="a" style="left:1525.5px;top:566.31px;width:1.3px;height:1px;background:#a07c58;opacity:.65"></div>
<div class="a" style="left:1517.8px;top:567.98px;width:9.0px;height:1px;background:#a5a57a;opacity:.65"></div>
<div class="a" style="left:1517.8px;top:569.65px;width:3.0px;height:1px;background:#4f86a8;opacity:.65"></div>
<div class="a" style="left:1522.5px;top:569.65px;width:4.0px;height:1px;background:#6f9cb8;opacity:.65"></div>
<div class="a" style="left:1527.3px;top:569.65px;width:3.0px;height:1px;background:#3f8c7e;opacity:.65"></div>
<div class="a" style="left:1531.1px;top:569.65px;width:6.7px;height:1px;background:#4f86a8;opacity:.65"></div>
<div class="a" style="left:1517.8px;top:571.32px;width:2.0px;height:1px;background:#547a48;opacity:.65"></div>
<div class="a" style="left:1520.6px;top:571.32px;width:3.0px;height:1px;background:#4f86a8;opacity:.65"></div>
<div class="a" style="left:1524.4px;top:571.32px;width:9.0px;height:1px;background:#4f86a8;opacity:.65"></div>
<div class="a" style="left:1535.1px;top:571.32px;width:2.7px;height:1px;background:#a5a57a;opacity:.65"></div>
<div class="a" style="left:1517.8px;top:572.99px;width:5.0px;height:1px;background:#a5a57a;opacity:.65"></div>
<div class="a" style="left:1523.6px;top:572.99px;width:9.0px;height:1px;background:#a5a57a;opacity:.65"></div>
<div class="a" style="left:1533.4px;top:572.99px;width:4.4px;height:1px;background:#4f86a8;opacity:.65"></div>
<div class="a" style="left:1517.8px;top:574.66px;width:10.0px;height:1px;background:#4f86a8;opacity:.65"></div>
<div class="a" style="left:1528.6px;top:574.66px;width:1.2px;height:1px;background:#547a48;opacity:.65"></div>
<div class="a" style="left:1517.8px;top:576.33px;width:4.0px;height:1px;background:#3f8c7e;opacity:.65"></div>
<div class="a" style="left:1514.5px;top:578.00px;width:2.0px;height:1px;background:#4f86a8;opacity:.65"></div>
<div class="a" style="left:1517.3px;top:578.00px;width:3.0px;height:1px;background:#a07c58;opacity:.65"></div>
<div class="a" style="left:1521.1px;top:578.00px;width:7.0px;height:1px;background:#3f8c7e;opacity:.65"></div>
<div class="a" style="left:1528.9px;top:578.00px;width:9.0px;height:1px;background:#a07c58;opacity:.65"></div>
<div class="a" style="left:1538.7px;top:578.00px;width:6.0px;height:1px;background:#a5a57a;opacity:.65"></div>
<div class="a" style="left:1545.5px;top:578.00px;width:2.0px;height:1px;background:#3f8c7e;opacity:.65"></div>
<div class="a" style="left:1514.5px;top:579.67px;width:7.0px;height:1px;background:#a07c58;opacity:.65"></div>
<div class="a" style="left:1523.2px;top:579.67px;width:10.0px;height:1px;background:#3f8c7e;opacity:.65"></div>
<div class="a" style="left:1534.0px;top:579.67px;width:6.0px;height:1px;background:#6f9cb8;opacity:.65"></div>
<div class="a" style="left:1540.8px;top:579.67px;width:7.0px;height:1px;background:#a07c58;opacity:.65"></div>
<div class="a" style="left:1548.6px;top:579.67px;width:4.0px;height:1px;background:#a5a57a;opacity:.65"></div>
<div class="a" style="left:1554.3px;top:579.67px;width:5.0px;height:1px;background:#a5a57a;opacity:.65"></div>
<div class="a" style="left:1561.0px;top:579.67px;width:8.5px;height:1px;background:#6f9cb8;opacity:.65"></div>
<div class="a" style="left:1514.5px;top:581.34px;width:7.0px;height:1px;background:#8c5a8c;opacity:.65"></div>
<div class="a" style="left:1514.5px;top:583.01px;width:10.0px;height:1px;background:#a07c58;opacity:.65"></div>
<div class="a" style="left:1526.2px;top:583.01px;width:10.0px;height:1px;background:#8a8a8a;opacity:.65"></div>
<div class="a" style="left:1537.9px;top:583.01px;width:2.6px;height:1px;background:#547a48;opacity:.65"></div>
<div class="a" style="left:1514.5px;top:584.68px;width:4.0px;height:1px;background:#3f8c7e;opacity:.65"></div>
<div class="a" style="left:1519.3px;top:584.68px;width:1.2px;height:1px;background:#4f86a8;opacity:.65"></div>
<div class="a" style="left:1514.5px;top:586.35px;width:7.0px;height:1px;background:#8c5a8c;opacity:.65"></div>
<div class="a" style="left:1523.2px;top:586.35px;width:0.3px;height:1px;background:#a07c58;opacity:.65"></div>
<div class="a" style="left:1514.5px;top:588.02px;width:10.0px;height:1px;background:#4f86a8;opacity:.65"></div>
<div class="a" style="left:1525.3px;top:588.02px;width:7.0px;height:1px;background:#a07c58;opacity:.65"></div>
<div class="a" style="left:1534.0px;top:588.02px;width:2.0px;height:1px;background:#547a48;opacity:.65"></div>
<div class="a" style="left:1536.8px;top:588.02px;width:3.0px;height:1px;background:#a07c58;opacity:.65"></div>
<div class="a" style="left:1541.5px;top:588.02px;width:3.0px;height:1px;background:#6f9cb8;opacity:.65"></div>
<div class="a" style="left:1546.2px;top:588.02px;width:2.3px;height:1px;background:#3f8c7e;opacity:.65"></div>
<div class="a" style="left:1514.5px;top:589.69px;width:6.0px;height:1px;background:#8c5a8c;opacity:.65"></div>
<div class="a" style="left:1514.5px;top:593.03px;width:7.0px;height:1px;background:#a5a57a;opacity:.65"></div>
<div class="a" style="left:1522.3px;top:593.03px;width:1.2px;height:1px;background:#8a8a8a;opacity:.65"></div>
<div class="a" style="left:1514.5px;top:594.70px;width:3.0px;height:1px;background:#a07c58;opacity:.65"></div>
<div class="a" style="left:1518.3px;top:594.70px;width:7.0px;height:1px;background:#8c5a8c;opacity:.65"></div>
<div class="a" style="left:1527.0px;top:594.70px;width:2.0px;height:1px;background:#a07c58;opacity:.65"></div>
<div class="a" style="left:1529.8px;top:594.70px;width:6.0px;height:1px;background:#a07c58;opacity:.65"></div>
<div class="a" style="left:1537.5px;top:594.70px;width:4.0px;height:1px;background:#8a8a8a;opacity:.65"></div>
<div class="a" style="left:1542.3px;top:594.70px;width:3.0px;height:1px;background:#a07c58;opacity:.65"></div>
<div class="a" style="left:1547.0px;top:594.70px;width:1.5px;height:1px;background:#a06e5a;opacity:.65"></div>
<div class="a" style="left:1514.5px;top:596.37px;width:6.0px;height:1px;background:#547a48;opacity:.65"></div>
<div class="a" style="left:1514.5px;top:599.71px;width:2.0px;height:1px;background:#3f8c7e;opacity:.65"></div>
<div class="a" style="left:1517.3px;top:599.71px;width:4.0px;height:1px;background:#8c5a8c;opacity:.65"></div>
<div class="a" style="left:1523.0px;top:599.71px;width:7.0px;height:1px;background:#a06e5a;opacity:.65"></div>
<div class="a" style="left:1530.8px;top:599.71px;width:3.7px;height:1px;background:#a07c58;opacity:.65"></div>
<div class="a" style="left:1514.5px;top:601.38px;width:4.0px;height:1px;background:#a07c58;opacity:.65"></div>
<div class="a" style="left:1520.2px;top:601.38px;width:2.3px;height:1px;background:#a07c58;opacity:.65"></div>
<div class="a" style="left:1514.5px;top:603.05px;width:8.0px;height:1px;background:#a07c58;opacity:.65"></div>
<div class="a" style="left:1514.5px;top:606.39px;width:3.0px;height:1px;background:#547a48;opacity:.65"></div>
<div class="a" style="left:1494.5px;top:152.4px;width:93.5px;height:1.2px;background:#c41a1a"></div>
<div class="a" style="left:1494.5px;top:178.9px;width:93.5px;height:1.2px;background:#c41a1a"></div>
<div class="a" style="left:1494.5px;top:279.4px;width:93.5px;height:1.2px;background:#c41a1a"></div>
<div class="a" style="left:1494.5px;top:283.4px;width:93.5px;height:1.2px;background:#c41a1a"></div>
<div class="a" style="left:1494.5px;top:291.8px;width:93.5px;height:1.2px;background:#c41a1a"></div>
<div class="a" style="left:1494.5px;top:388.8px;width:93.5px;height:1.2px;background:#c41a1a"></div>
<div class="a" style="left:1494.5px;top:397px;width:93.5px;height:1.2px;background:#c41a1a"></div>
<div class="a" style="left:1494.5px;top:457.6px;width:93.5px;height:1.2px;background:#c41a1a"></div>
<div class="a" style="left:1494.5px;top:460.7px;width:93.5px;height:1.2px;background:#c41a1a"></div>
<div class="a" style="left:1494.5px;top:466px;width:93.5px;height:1.2px;background:#c41a1a"></div>
<div class="a" style="left:1494.5px;top:473.8px;width:93.5px;height:1.2px;background:#c41a1a"></div>
<div class="a" style="left:1494.5px;top:507.4px;width:93.5px;height:1.2px;background:#c41a1a"></div>
<div class="a" style="left:1494.5px;top:532.3px;width:93.5px;height:1.2px;background:#c41a1a"></div>
<div class="a" style="left:1494.5px;top:557.2px;width:93.5px;height:1.2px;background:#c41a1a"></div>
<div class="a" style="left:1494.5px;top:561px;width:93.5px;height:1.2px;background:#c41a1a"></div>
<div class="a" style="left:1494.5px;top:574px;width:93.5px;height:1.2px;background:#c41a1a"></div>
<div class="a" style="left:1494.5px;top:587.4px;width:93.5px;height:1.2px;background:#c41a1a"></div>
<div class="a" style="left:1494.5px;top:170px;width:93.5px;height:4px;background:#a98a00"></div>
<div class="a" style="left:1498px;top:242px;width:62px;height:4px;border-top:1px dotted #4b6a3a;border-bottom:1px dotted #4b6a3a"></div>
<div class="a" style="left:1588px;top:76px;width:1px;height:533px;background:#2b2b2b"></div>
<div class="a" style="left:1596.5px;top:79.6px;width:3.5px;height:4px;background:#3794ff"></div>
<div class="a" style="left:1596.5px;top:87.4px;width:3.5px;height:5px;background:#e51400"></div>
<div class="a" style="left:1596.5px;top:92.7px;width:3.5px;height:3px;background:#3794ff"></div>
<div class="a" style="left:1596.5px;top:100.4px;width:3.5px;height:5px;background:#d7406b"></div>
<div class="a" style="left:1596.5px;top:106.7px;width:3.5px;height:4px;background:#3794ff"></div>
<div class="a" style="left:1596.5px;top:117.6px;width:3.5px;height:5px;background:#d7406b"></div>
<div class="a" style="left:1596.5px;top:123.8px;width:3.5px;height:4px;background:#3794ff"></div>
<div class="a" style="left:1596.5px;top:134.7px;width:3.5px;height:5px;background:#d7406b"></div>
<div class="a" style="left:1596.5px;top:141.5px;width:3.5px;height:4px;background:#3794ff"></div>
<div class="a" style="left:1596.5px;top:150.2px;width:3.5px;height:5px;background:#3794ff"></div>
<div class="a" style="left:1596.5px;top:163.6px;width:3.5px;height:5px;background:#3794ff"></div>
<div class="a" style="left:1596.5px;top:168.9px;width:3.5px;height:4px;background:#e51400"></div>
<div class="a" style="left:1596.5px;top:179.8px;width:3.5px;height:5px;background:#3794ff"></div>
<div class="a" style="left:1596.5px;top:200px;width:3.5px;height:4px;background:#3794ff"></div>
<div class="a" style="left:1596.5px;top:208.4px;width:3.5px;height:5px;background:#3794ff"></div>
<div class="a" style="left:1596.5px;top:218.7px;width:3.5px;height:5px;background:#3794ff"></div>
<div class="a" style="left:1596.5px;top:231px;width:3.5px;height:5px;background:#3794ff"></div>
<div class="a" style="left:1596.5px;top:239px;width:3.5px;height:4px;background:#3794ff"></div>
<div class="a" style="left:1596.5px;top:246.7px;width:3.5px;height:4px;background:#e51400"></div>
<div class="a" style="left:1596.5px;top:262.2px;width:3.5px;height:4px;background:#e8b600"></div>
<div class="a" style="left:1596.5px;top:265.4px;width:3.5px;height:4px;background:#e51400"></div>
<div class="a" style="left:1596.5px;top:377px;width:3.5px;height:10px;background:#e51400"></div>
<div class="a" style="left:1596.5px;top:430px;width:3.5px;height:6px;background:#e51400"></div>
<div class="a" style="left:1596.5px;top:464px;width:3.5px;height:10px;background:#e51400"></div>
<div class="a" style="left:1596.5px;top:486px;width:3.5px;height:3px;background:#e51400"></div>
<div class="a" style="left:1596.5px;top:498px;width:3.5px;height:4px;background:#e51400"></div>
<div class="a" style="left:1596.5px;top:511px;width:3.5px;height:3px;background:#e51400"></div>
<div class="a" style="left:1596.5px;top:523.6px;width:3.5px;height:3px;background:#e51400"></div>
<div class="a" style="left:1596.5px;top:542px;width:3.5px;height:19px;background:#e51400"></div>
<div class="a" style="left:1585px;top:77px;width:15px;height:1px;background:#777"></div>
<div class="a" style="left:237px;top:609px;width:1363px;height:232px;background:#181818;border-top:1px solid #2b2b2b"></div>
<div class="t" style="left:253px;top:619px;font-size:9px;color:#9d9d9d">ПРОБЛЕМЫ</div>
<div class="t" style="left:348px;top:619px;font-size:9px;color:#9d9d9d">ВЫХОДНЫЕ ДАННЫЕ</div>
<div class="t" style="left:460px;top:619px;font-size:9px;color:#9d9d9d">КОНСОЛЬ ОТЛАДКИ</div>
<div class="t" style="left:568px;top:619px;font-size:9px;color:#e7e7e7">ТЕРМИНАЛ</div>
<div class="t" style="left:637px;top:619px;font-size:9px;color:#9d9d9d">ПОРТЫ</div>
<div class="t" style="left:689px;top:619px;font-size:9px;color:#9d9d9d">SPELL CHECKER</div>
<div class="a" style="left:307.5px;top:617px;width:22px;height:13px;border-radius:7px;background:#0078d4;color:#fff;font-size:8.5px;line-height:13px;text-align:center">524</div>
<div class="a" style="left:567px;top:632px;width:52px;height:1px;background:#0078d4"></div>
<svg style="left:1391px;top:617px" width="12" height="12" viewBox="0 0 12 12"><path d="M6 1v10M1 6h10" stroke="#cccccc" stroke-width="1.1"/></svg>
<svg style="left:1406px;top:621px" width="7" height="5" viewBox="0 0 7 5"><path d="M.5 1l3 3 3-3" stroke="#cccccc" fill="none"/></svg>
<svg style="left:1422px;top:617px" width="12" height="12" viewBox="0 0 12 12"><rect x=".6" y=".6" width="10.8" height="10.8" rx="1" stroke="#cccccc" stroke-width="1.1" fill="none"/><path d="M3 3.5l2 2-2 2M6 8.5h3" stroke="#cccccc" fill="none"/></svg>
<div class="t" style="left:1438px;top:618px;font-size:10px;color:#cccccc">Python</div>
<svg style="left:1477px;top:618px" width="12" height="12" viewBox="0 0 12 12"><rect x=".6" y=".6" width="10.8" height="10.8" rx="1" stroke="#cccccc" stroke-width="1.1" fill="none"/><path d="M6 1v10" stroke="#cccccc" stroke-width="1.1"/></svg>
<svg style="left:1499px;top:617px" width="12" height="13" viewBox="0 0 12 13"><path d="M1 3h10M4 3V1.5h4V3M2.5 3l.7 9h5.6l.7-9M5 5v5M7 5v5" stroke="#cccccc" stroke-width="1.1" fill="none"/></svg>
<svg style="left:1520px;top:622px" width="14" height="4" viewBox="0 0 14 4"><circle cx="2" cy="2" r="1.1" fill="#cccccc"/><circle cx="7" cy="2" r="1.1" fill="#cccccc"/><circle cx="12" cy="2" r="1.1" fill="#cccccc"/></svg>
<div class="a" style="left:1543px;top:616px;width:1px;height:14px;background:#555"></div>
<svg style="left:1553px;top:617px" width="12" height="12" viewBox="0 0 12 12"><path d="M1 4V1h3M8 1h3v3M11 8v3H8M4 11H1V8" stroke="#cccccc" stroke-width="1.1" fill="none"/></svg>
<svg style="left:1576px;top:618px" width="10" height="10" viewBox="0 0 10 10"><path d="M.5.5l9 9M9.5.5l-9 9" stroke="#cccccc" stroke-width="1.1"/></svg>
<svg style="left:241px;top:646px" width="9" height="9" viewBox="0 0 9 9"><circle cx="4.5" cy="4.5" r="3.4" stroke="#6e6e6e" stroke-width="1.2" fill="none"/></svg>
<div class="t mono" style="left:253.25px;top:645.5px;font-size:11.07px;line-height:14.12px"><span style="color:#23d18b;font-weight:bold">igor@igor-desktop-linux</span><span style="color:#cccccc">:</span><span style="color:#3b8eea;font-weight:bold">/mnt/DATA/Users/Игорь/Documents/Разработка сайтов/aer.iv71.ru</span><span style="color:#cccccc">$  /usr/bin/python3 "/media/igor/WINDOWS 11/Users/Игорь/output/AerosollCalcPallet.py"</span></div>
<div class="t mono" style="left:253.25px;top:659.62px;font-size:11.07px;line-height:14.12px"><span style="color:#cccccc">Exception in Tkinter callback</span></div>
<div class="t mono" style="left:253.25px;top:673.74px;font-size:11.07px;line-height:14.12px"><span style="color:#cccccc">Traceback (most recent call last):</span></div>
<div class="t mono" style="left:253.25px;top:687.86px;font-size:11.07px;line-height:14.12px"><span style="color:#cccccc">  File "/usr/lib/python3.13/tkinter/__init__.py", line 2077, in __call__</span></div>
<div class="t mono" style="left:253.25px;top:701.98px;font-size:11.07px;line-height:14.12px"><span style="color:#cccccc">    return self.func(*args)</span></div>
<div class="t mono" style="left:253.25px;top:716.1px;font-size:11.07px;line-height:14.12px"><span style="color:#cccccc">           ~~~~~~~~~^^^^^^^</span></div>
<div class="t mono" style="left:253.25px;top:730.22px;font-size:11.07px;line-height:14.12px"><span style="color:#cccccc">  File "/media/igor/WINDOWS 11/Users/Игорь/output/AerosollCalcPallet.py", line 494, in calculate</span></div>
<div class="t mono" style="left:253.25px;top:744.34px;font-size:11.07px;line-height:14.12px"><span style="color:#cccccc">    full_pallets = total_items // pallet_total</span></div>
<div class="t mono" style="left:253.25px;top:758.46px;font-size:11.07px;line-height:14.12px"><span style="color:#cccccc">                   ~~~~~~~~~~~~^^~~~~~~~~~~~~~</span></div>
<div class="t mono" style="left:253.25px;top:772.58px;font-size:11.07px;line-height:14.12px"><span style="color:#cccccc">ZeroDivisionError: integer division or modulo by zero</span></div>
<div class="t mono" style="left:253.25px;top:786.7px;font-size:11.07px;line-height:14.12px"><span style="color:#cccccc">Exception in Tkinter callback</span></div>
<div class="t mono" style="left:253.25px;top:800.8199999999999px;font-size:11.07px;line-height:14.12px"><span style="color:#cccccc">Traceback (most recent call last):</span></div>
<div class="t mono" style="left:253.25px;top:814.94px;font-size:11.07px;line-height:14.12px"><span style="color:#cccccc">  File "/usr/lib/python3.13/tkinter/__init__.py", line 2077, in __call__</span></div>
<div class="t mono" style="left:253.25px;top:829.06px;font-size:11.07px;line-height:14.12px"><span style="color:#cccccc">    return self.func(*args)</span></div>
<div class="a" style="left:1588px;top:643px;width:4px;height:6px;background:#444"></div>
<div class="a" style="left:0;top:841px;width:1600px;height:19px;background:#181818;border-top:1px solid #2b2b2b"></div>
<div class="a" style="left:0;top:842px;width:28px;height:18px;background:#0078d4"></div>
<svg style="left:9px;top:845.5px" width="10" height="11" viewBox="0 0 10 11"><path d="M1 5.5l3 2.5-3 2.5M9 .5L6 3l3 2.5" stroke="#fff" stroke-width="1.1" fill="none"/></svg>
<svg style="left:35px;top:846px" width="10" height="10" viewBox="0 0 10 10"><circle cx="5" cy="5" r="4.3" stroke="#cccccc" fill="none"/><path d="M3.3 3.3l3.4 3.4M6.7 3.3L3.3 6.7" stroke="#cccccc"/></svg>
<div class="t" style="left:49px;top:846px;font-size:10.2px;color:#cccccc">34</div>
<svg style="left:62px;top:845px" width="11" height="11" viewBox="0 0 11 11"><path d="M5.5 1L10.3 10H.7z" stroke="#cccccc" fill="none" stroke-linejoin="round"/><path d="M5.5 4v3M5.5 8v1" stroke="#cccccc"/></svg>
<div class="t" style="left:76.5px;top:846px;font-size:10.2px;color:#cccccc">6</div>
<svg style="left:85px;top:846px" width="10" height="10" viewBox="0 0 10 10"><circle cx="5" cy="5" r="4.3" stroke="#cccccc" fill="none"/><path d="M5 4.2v3.5M5 2.5v1" stroke="#cccccc"/></svg>
<div class="t" style="left:98.5px;top:846px;font-size:10.2px;color:#cccccc">484</div>
<div class="t" style="left:129px;top:846px;font-size:10.1px;color:#cccccc">Waiting for an HTML file...</div>
<svg style="left:258px;top:844px" width="9" height="11" viewBox="0 0 9 11"><path d="M6 1L2 6h4l-3 4.5M7 2.5L8 4" stroke="#cccccc" fill="none"/></svg>
<div class="a" style="left:1343.5px;top:842px;width:110.5px;height:18px;background:#313131"></div>
<div class="t" style="left:1037px;top:846.5px;font-size:9.8px;color:#cccccc">Строка 1, столбец 1</div>
<div class="t" style="left:1141px;top:846.5px;font-size:9.8px;color:#cccccc">Пробелов: 4</div>
<div class="t" style="left:1212px;top:846.5px;font-size:9.8px;color:#cccccc">UTF-8</div>
<div class="t" style="left:1251px;top:846.5px;font-size:9.8px;color:#cccccc">CRLF</div>
<div class="t" style="left:1304px;top:846.5px;font-size:9.8px;color:#cccccc">Python</div>
<div class="t" style="left:1461px;top:846.5px;font-size:9.8px;color:#cccccc">3.12.7</div>
<div class="t" style="left:1515.5px;top:846.5px;font-size:9.8px;color:#cccccc">Port: 4002</div>
<div class="t" style="left:1289px;top:844px;font-size:10px;color:#cccccc">{</div>
<svg style="left:1293px;top:845px" width="9" height="10" viewBox="0 0 9 10"><circle cx="4.5" cy="6.5" r="2.5" stroke="#cccccc" fill="none"/></svg>
<svg style="left:1351px;top:844px" width="12" height="12" viewBox="0 0 12 12"><circle cx="6" cy="6" r="4.8" stroke="#cccccc" fill="none"/><circle cx="8" cy="8" r="2.8" fill="#313131" stroke="#cccccc"/><path d="M7 7l2 2M9 7l-2 2" stroke="#cccccc" stroke-width=".8"/></svg>
<div class="t" style="left:1365.5px;top:846.5px;font-size:10.2px;color:#cccccc">Выполнен выход</div>
<svg style="left:1502px;top:844px" width="11" height="11" viewBox="0 0 11 11"><path d="M5.5 4v6.5M3.5 10.5h4M2 1.5a5 5 0 000 6M9 1.5a5 5 0 010 6M3.5 3a2.5 2.5 0 000 3M7.5 3a2.5 2.5 0 010 3" stroke="#cccccc" fill="none"/></svg>
<svg style="left:1576px;top:844px" width="11" height="11" viewBox="0 0 11 11"><path d="M2 8.5h7L8 7V4.5a2.5 2.5 0 00-5 0V7zM4.5 10h2" stroke="#cccccc" fill="none"/></svg>
<div class="a" style="left:0;top:860px;width:1600px;height:40px;background:#241f33"></div>
<div class="a" style="left:568.0px;top:868.0px;width:5px;height:5px;border-radius:1.5px;background:#f2f2f2"></div>
<div class="a" style="left:568.0px;top:877.5px;width:5px;height:5px;border-radius:1.5px;background:#f2f2f2"></div>
<div class="a" style="left:568.0px;top:887.0px;width:5px;height:5px;border-radius:1.5px;background:#f2f2f2"></div>
<div class="a" style="left:577.5px;top:868.0px;width:5px;height:5px;border-radius:1.5px;background:#f2f2f2"></div>
<div class="a" style="left:577.5px;top:877.5px;width:5px;height:5px;border-radius:1.5px;background:#f2f2f2"></div>
<div class="a" style="left:577.5px;top:887.0px;width:5px;height:5px;border-radius:1.5px;background:#f2f2f2"></div>
<div class="a" style="left:587.0px;top:868.0px;width:5px;height:5px;border-radius:1.5px;background:#f2f2f2"></div>
<div class="a" style="left:587.0px;top:877.5px;width:5px;height:5px;border-radius:1.5px;background:#f2f2f2"></div>
<div class="a" style="left:587.0px;top:887.0px;width:5px;height:5px;border-radius:1.5px;background:#f2f2f2"></div>
<div class="t" style="left:617px;top:874px;font-size:12px;color:#e6e6e6">Места</div>
<div class="a" style="left:669px;top:865px;width:34px;height:30px;border-radius:3px;background:linear-gradient(#9e4a64,#c66a52)"></div>
<div class="a" style="left:669px;top:869px;width:34px;height:26px;border-radius:3px;background:linear-gradient(#b5b5b5,#8e8e8e)"></div>
<div class="a" style="left:681px;top:876px;width:10px;height:2px;background:#fff"></div>
<div class="a" style="left:714px;top:861px;width:38px;height:38px;background:#bf0000"></div>
<div class="t" style="left:717px;top:862px;font-size:33px;font-weight:bold;font-style:italic;color:#fff;letter-spacing:-3px">Fz</div>
<svg style="left:759px;top:862px" width="39" height="36" viewBox="0 0 39 36"><defs><linearGradient id="tb" x1="0" y1="0" x2="0" y2="1"><stop offset="0" stop-color="#3d8ae8"/><stop offset="1" stop-color="#1150b8"/></linearGradient></defs><path d="M8 8c-4 5-7 12-5 19 3 6 10 9 17 9 9 0 17-7 17-17 0-6-3-12-8-15 2 0 4 0 5 1-3-4-8-5-12-5-5 0-9 3-11 6 0-3 1-5-3 2z" fill="url(#tb)"/><ellipse cx="19.5" cy="22" rx="10" ry="8" fill="#e6efff"/><path d="M11 19l8.5 6 9-6" stroke="#b8cdee" stroke-width="1.5" fill="none"/><circle cx="20" cy="9.5" r="1.2" fill="#fff"/></svg>
<svg style="left:808px;top:862px" width="36" height="36" viewBox="0 0 36 36"><defs><linearGradient id="ff" x1="0.8" y1="0" x2="0.2" y2="1"><stop offset="0" stop-color="#ffe04a"/><stop offset=".45" stop-color="#ff7a2a"/><stop offset="1" stop-color="#f0287a"/></linearGradient><radialGradient id="fg" cx=".5" cy=".4" r=".6"><stop offset="0" stop-color="#b84cf0"/><stop offset="1" stop-color="#5b2bd8"/></radialGradient></defs><path d="M34 19c0 9-7 16-16 16S2 28 2 19c0-5 2-9 4-11l1 4c1-4 4-7 6-8-1 2-1 3 0 4 3-3 7-3 9-3-1-2-1-4 0-6 6 3 12 10 12 20z" fill="url(#ff)"/><circle cx="18.5" cy="19.5" r="7.5" fill="url(#fg)"/><path d="M9 15c3-2 7-2 10 0-3 0-5 1-6 3z" fill="#ff9a3a"/></svg>
<div class="a" style="left:856px;top:863px;width:34px;height:34px;border-radius:17px;background:linear-gradient(#38a9e0,#2690cc)"></div>
<svg style="left:866px;top:873px" width="18" height="16" viewBox="0 0 18 16"><path d="M17 1L14 15 8 11 6 14V9L16 1 4 8 0 6.5z" fill="#fff"/></svg>
<div class="a" style="left:851.5px;top:863px;width:25.5px;height:19.5px;border-radius:10px;background:#a81515;border:1px solid #1e5a2a;color:#fff;font-size:11px;font-weight:bold;line-height:18px;text-align:center">9+</div>
<svg style="left:904px;top:864.5px" width="30.5" height="31" viewBox="0 0 30 30"><defs><linearGradient id="cg" x1="0" y1="1" x2="1" y2="0"><stop offset="0" stop-color="#2fb0ff"/><stop offset=".5" stop-color="#3a52f0"/><stop offset="1" stop-color="#8a2be0"/></linearGradient></defs><rect width="30" height="30" rx="6" fill="url(#cg)"/><path d="M15 4.5a10.5 10.5 0 1 1-6 19.2L5 25.5l1.2-4.3A10.5 10.5 0 0 1 15 4.5z" fill="#fff"/><circle cx="15.3" cy="14.8" r="5.6" fill="#3a3ae8"/></svg>
<div class="a" style="left:950px;top:864px;width:32px;height:31px;border-radius:4px;background:#5e5e5e"></div>
<div class="a" style="left:966px;top:864px;width:16px;height:31px;border-radius:0 4px 4px 0;background:#f5b82e"></div>
<div class="t" style="left:952px;top:864px;font-size:14px;color:#fff">+</div><div class="t" style="left:953px;top:877px;font-size:14px;color:#fff">−</div><div class="t" style="left:968px;top:870px;font-size:14px;color:#fff">=</div>
<div class="a" style="left:989px;top:860px;width:46px;height:40px;border-radius:4px 4px 0 0;background:#3e3b48"></div>
<div class="a" style="left:989px;top:897px;width:44px;height:3px;background:#e8e8e8"></div>
<svg style="left:995.5px;top:863px" width="34" height="34" viewBox="0 0 100 100"><defs><linearGradient id="vsg" x1="0" y1="0" x2="1" y2="0"><stop offset="0" stop-color="#1a86d0"/><stop offset="1" stop-color="#23a8f2"/></linearGradient></defs><path d="M70.9 99.3L96 87.3C98.6 86 100 83.6 100 80.8V19.2C100 16.4 98.6 14 96 12.7L70.9.7C69.3 0 67.4 0 65.9 1L18.7 44 5.5 34.1C4.2 33.2 2.5 33.3 1.4 34.3L.9 34.8C-.3 35.9-.3 37.9.9 39L12.2 50 .9 61C-.3 62.1-.3 64.1.9 65.2L1.4 65.7C2.5 66.7 4.2 66.8 5.5 65.9L18.7 56 65.9 99C67.4 100 69.3 100 70.9 99.3ZM75 27.3L39.3 50 75 72.7Z" fill="url(#vsg)" fill-rule="evenodd"/></svg>
<div class="a" style="left:686px;top:896px;width:2px;height:4px;background:#ddd"></div>
<div class="a" style="left:779px;top:896px;width:2px;height:4px;background:#ddd"></div>
<div class="a" style="left:825px;top:896px;width:2px;height:4px;background:#ddd"></div>
<div class="a" style="left:872px;top:896px;width:2px;height:4px;background:#ddd"></div>
<svg style="left:1173px;top:873px" width="13" height="12" viewBox="0 0 13 12"><path d="M6.5 1L12 7H1z" fill="#e8e8e8"/><rect x="1" y="9" width="11" height="2" fill="#e8e8e8"/></svg>
<svg style="left:1207px;top:872px" width="16" height="14" viewBox="0 0 16 14"><path d="M1 6.5l13-5-2.5 11-4-3-2 2V8l6-5-8 4.5z" fill="#e8e8e8"/><circle cx="3" cy="12" r="2" fill="#e01b24"/></svg>
<svg style="left:1243px;top:871px" width="13" height="16" viewBox="0 0 13 16"><rect x="1" y="3" width="11" height="12" rx="1.5" stroke="#e8e8e8" stroke-width="1.5" fill="none"/><rect x="4" y="1" width="5" height="3" fill="#e8e8e8"/><path d="M3.5 7h6M3.5 9.5h6M3.5 12h6" stroke="#e8e8e8"/></svg>
<svg style="left:1279px;top:872px" width="14" height="14" viewBox="0 0 14 14"><circle cx="7" cy="7" r="5.5" stroke="#8a8a8a" stroke-width="1.6" fill="none"/></svg>
<div class="t" style="left:1311px;top:874.5px;font-size:12.5px;color:#e8e8e8">ru</div>
<div class="t" style="left:1353px;top:874.5px;font-size:12.5px;color:#e8e8e8">Чт, 6 ноября&nbsp;&nbsp;19:24</div>
<svg style="left:1475px;top:871px" width="13" height="15" viewBox="0 0 13 15"><path d="M2 11.5h9l-1.2-1.5V6a3.3 3.3 0 00-6.6 0v4zM5 13.5h3M6.5 1v1.5" stroke="#e8e8e8" stroke-width="1.3" fill="none"/></svg>
<svg style="left:1499px;top:871px" width="16" height="16" viewBox="0 0 16 16"><circle cx="8" cy="8" r="3.5" fill="#e8e8e8"/><path d="M8 .5v2.5M8 13v2.5M.5 8H3M13 8h2.5M2.7 2.7l1.8 1.8M11.5 11.5l1.8 1.8M2.7 13.3l1.8-1.8M11.5 4.5l1.8-1.8" stroke="#e8e8e8" stroke-width="1.3"/></svg>
<svg style="left:1523px;top:872px" width="15" height="14" viewBox="0 0 15 14"><rect x="5" y="1" width="5" height="4" fill="#e8e8e8"/><rect x="0.5" y="9" width="5" height="4" fill="#e8e8e8"/><rect x="9.5" y="9" width="5" height="4" fill="#e8e8e8"/><path d="M7.5 5v2M3 9V7h9v2" stroke="#e8e8e8" stroke-width="1.3" fill="none"/></svg>
<svg style="left:1546px;top:872px" width="15" height="14" viewBox="0 0 15 14"><path d="M1 4.5h3L8 1v12L4 9.5H1z" fill="#e8e8e8"/><path d="M10.5 4.5a3.5 3.5 0 010 5M12.5 2.5a6.5 6.5 0 010 9" stroke="#e8e8e8" stroke-width="1.2" fill="none"/></svg>
<svg style="left:1570px;top:871px" width="15" height="15" viewBox="0 0 15 15"><path d="M4.5 3.5a5.5 5.5 0 106 0M7.5 1v6" stroke="#e8e8e8" stroke-width="1.5" fill="none"/></svg>
<div class="a" style="left:730px;top:107px;width:576px;height:658px;border-radius:11px 11px 2px 2px;background:#0e0e0e"></div>
<div class="a" style="left:733px;top:110px;width:570px;height:652px;border-radius:9px 9px 0 0;background:#d9d9d9;overflow:hidden">
<div class="a" style="left:0;top:0;width:570px;height:31px;background:#fafafa;border-bottom:1px solid #ececec"></div>
<div class="t" style="left:110px;top:8.5px;font-size:11.96px;font-weight:bold;color:#303030">Расчёт товара в поддонах ООО "Аэрозоль Новомосковск"</div>
<div class="a" style="left:519px;top:6px;width:18px;height:18px;border-radius:9px;background:#ebebeb"></div>
<div class="a" style="left:524.5px;top:16px;width:7px;height:1px;background:#505050"></div>
<div class="a" style="left:546px;top:6px;width:18px;height:18px;border-radius:9px;background:#ebebeb"></div>
<svg style="left:551px;top:11px" width="8" height="8" viewBox="0 0 8 8"><path d="M.5.5l7 7M7.5.5l-7 7" stroke="#3a3a3a" stroke-width="1.1"/></svg>
<div class="t" style="left:6.5px;top:40px;font-size:11.2px;color:#1a1a1a;-webkit-text-stroke:0.2px #1a1a1a">Файл</div>
<div class="t" style="left:46.5px;top:40px;font-size:11.2px;color:#1a1a1a;-webkit-text-stroke:0.2px #1a1a1a">Справка</div>
<div class="a" style="left:0;top:57.5px;width:570px;height:1px;background:#a8a8a8"></div>
<div class="a" style="left:0;top:58.5px;width:570px;height:1px;background:#e6e6e6"></div>
<div class="t" style="left:10px;top:75.5px;font-size:11.7px;color:#1a1a1a;-webkit-text-stroke:0.2px #1a1a1a">Номер линии</div>
<div class="a" style="left:400px;top:71.0px;width:94px;height:20px;background:#d9d9d9;border:1.5px solid;border-color:#8e8e8e #f4f4f4 #f4f4f4 #8e8e8e"></div>
<div class="a" style="left:483px;top:73.0px;width:10px;height:16px;background:#d9d9d9;border:1px solid;border-color:#f4f4f4 #8e8e8e #8e8e8e #f4f4f4"></div>
<svg style="left:485px;top:79.0px" width="7" height="4" viewBox="0 0 7 4"><path d="M0 0h7L3.5 4z" fill="#000"/></svg>
<div class="t" style="left:402.5px;top:75.5px;font-size:11.7px;color:#1a1a1a;-webkit-text-stroke:0.2px #1a1a1a">PolPack</div>
<div class="t" style="left:10px;top:99.7px;font-size:11.7px;color:#1a1a1a;-webkit-text-stroke:0.2px #1a1a1a">Номер смены</div>
<div class="a" style="left:400px;top:95.2px;width:94px;height:20px;background:#d9d9d9;border:1.5px solid;border-color:#8e8e8e #f4f4f4 #f4f4f4 #8e8e8e"></div>
<div class="a" style="left:483px;top:97.2px;width:10px;height:16px;background:#d9d9d9;border:1px solid;border-color:#f4f4f4 #8e8e8e #8e8e8e #f4f4f4"></div>
<svg style="left:485px;top:103.2px" width="7" height="4" viewBox="0 0 7 4"><path d="M0 0h7L3.5 4z" fill="#000"/></svg>
<div class="t" style="left:402.5px;top:99.7px;font-size:11.7px;color:#1a1a1a;-webkit-text-stroke:0.2px #1a1a1a">Смена 1</div>
<div class="t" style="left:10px;top:123.9px;font-size:11.7px;color:#1a1a1a;-webkit-text-stroke:0.2px #1a1a1a">Партия №</div>
<div class="a" style="left:404px;top:119.4px;width:86px;height:21px;background:#fff;border:1.5px solid;border-color:#9a9a9a #e8e8e8 #e8e8e8 #9a9a9a"></div>
<div class="t" style="left:406.5px;top:123.9px;font-size:11.7px;color:#1a1a1a;-webkit-text-stroke:0.2px #1a1a1a">035</div>
<div class="t" style="left:10px;top:148.1px;font-size:11.7px;color:#1a1a1a;-webkit-text-stroke:0.2px #1a1a1a">Общее количество товара</div>
<div class="a" style="left:404px;top:143.6px;width:86px;height:21px;background:#fff;border:1.5px solid;border-color:#9a9a9a #e8e8e8 #e8e8e8 #9a9a9a"></div>
<div class="t" style="left:406.5px;top:148.1px;font-size:11.7px;color:#1a1a1a;-webkit-text-stroke:0.2px #1a1a1a">10000</div>
<div class="t" style="left:10px;top:172.3px;font-size:11.7px;color:#1a1a1a;-webkit-text-stroke:0.2px #1a1a1a">Рядов в каждом поддоне</div>
<div class="a" style="left:404px;top:167.8px;width:86px;height:21px;background:#fff;border:1.5px solid;border-color:#9a9a9a #e8e8e8 #e8e8e8 #9a9a9a"></div>
<div class="t" style="left:406.5px;top:172.3px;font-size:11.7px;color:#1a1a1a;-webkit-text-stroke:0.2px #1a1a1a">7</div>
<div class="t" style="left:10px;top:196.5px;font-size:11.7px;color:#1a1a1a;-webkit-text-stroke:0.2px #1a1a1a">Коробок в одном ряду</div>
<div class="a" style="left:404px;top:192.0px;width:86px;height:21px;background:#fff;border:1.5px solid;border-color:#9a9a9a #e8e8e8 #e8e8e8 #9a9a9a"></div>
<div class="t" style="left:406.5px;top:196.5px;font-size:11.7px;color:#1a1a1a;-webkit-text-stroke:0.2px #1a1a1a">42</div>
<div class="t" style="left:10px;top:220.7px;font-size:11.7px;color:#1a1a1a;-webkit-text-stroke:0.2px #1a1a1a">Товар в одной коробке</div>
<div class="a" style="left:404px;top:216.2px;width:86px;height:21px;background:#fff;border:1.5px solid;border-color:#9a9a9a #e8e8e8 #e8e8e8 #9a9a9a"></div>
<div class="t" style="left:406.5px;top:220.7px;font-size:11.7px;color:#1a1a1a;-webkit-text-stroke:0.2px #1a1a1a">6</div>
<div class="t" style="left:10px;top:244.9px;font-size:11.7px;color:#1a1a1a;-webkit-text-stroke:0.2px #1a1a1a">Пропустить полностью рядов</div>
<div class="a" style="left:404px;top:240.4px;width:86px;height:21px;background:#fff;border:1.5px solid;border-color:#9a9a9a #e8e8e8 #e8e8e8 #9a9a9a"></div>
<div class="t" style="left:406.5px;top:244.9px;font-size:11.7px;color:#1a1a1a;-webkit-text-stroke:0.2px #1a1a1a">0</div>
<div class="t" style="left:10px;top:269.1px;font-size:11.7px;color:#1a1a1a;-webkit-text-stroke:0.2px #1a1a1a">Вычесть коробок в первом учтённом ряду</div>
<div class="a" style="left:404px;top:264.6px;width:86px;height:21px;background:#fff;border:1.5px solid;border-color:#9a9a9a #e8e8e8 #e8e8e8 #9a9a9a"></div>
<div class="t" style="left:406.5px;top:269.1px;font-size:11.7px;color:#1a1a1a;-webkit-text-stroke:0.2px #1a1a1a">0</div>
<div class="a" style="left:167px;top:303.7px;width:68px;height:24px;background:#d9d9d9;border:1px dotted #3a3a3a"></div>
<div class="a" style="left:168px;top:304.7px;width:66px;height:22px;border:1px solid;border-color:#eeeeee #a0a0a0 #a0a0a0 #eeeeee"></div>
<div class="t" style="left:167px;top:311px;width:68px;text-align:center;font-size:11.4px;color:#1a1a1a;-webkit-text-stroke:0.2px #1a1a1a">Рассчитать</div>
<div class="a" style="left:244px;top:303.7px;width:68px;height:24px;background:#d9d9d9;border:1px solid;border-color:#f2f2f2 #8e8e8e #8e8e8e #f2f2f2"></div>
<div class="t" style="left:244px;top:311px;width:68px;text-align:center;font-size:11.4px;color:#1a1a1a;-webkit-text-stroke:0.2px #1a1a1a">Печать</div>
<div class="a" style="left:321px;top:303.7px;width:69px;height:24px;background:#d9d9d9;border:1px solid;border-color:#f2f2f2 #8e8e8e #8e8e8e #f2f2f2"></div>
<div class="t" style="left:321px;top:311px;width:69px;text-align:center;font-size:11.4px;color:#1a1a1a;-webkit-text-stroke:0.2px #1a1a1a">Очистить</div>
<div class="a" style="left:10.3px;top:337.4px;width:538px;height:292px;background:#fff;border:1.5px solid;border-color:#a4a4a4 #f0f0f0 #f0f0f0 #a4a4a4"></div>
<div class="a" style="left:12.3px;top:400.40000000000003px;width:6px;height:6px;border:1px solid #666;z-index:2"></div>
<div class="a" style="left:12.3px;top:414.55px;width:6px;height:6px;border:1px solid #666;z-index:2"></div>
<div class="a" style="left:12.3px;top:428.7px;width:6px;height:6px;border:1px solid #666;z-index:2"></div>
<div class="a" style="left:12.3px;top:442.85px;width:6px;height:6px;border:1px solid #666;z-index:2"></div>
<div class="a" style="left:12.3px;top:457.0px;width:6px;height:6px;border:1px solid #666;z-index:2"></div>
<div class="a" style="left:12.3px;top:471.15000000000003px;width:6px;height:6px;border:1px solid #666;z-index:2"></div>
<div class="a" style="left:12.3px;top:485.3px;width:6px;height:6px;border:1px solid #666;z-index:2"></div>
<div class="a" style="left:12.3px;top:541.9px;width:6px;height:6px;border:1px solid #666;z-index:2"></div>
<div class="a" style="left:12.3px;top:556.05px;width:6px;height:6px;border:1px solid #666;z-index:2"></div>
<div class="a" style="left:12.3px;top:570.1999999999999px;width:6px;height:6px;border:1px solid #666;z-index:2"></div>
<div class="a" style="left:12.3px;top:584.3499999999999px;width:6px;height:6px;border:1px solid #666;z-index:2"></div>
<div class="a" style="left:12.3px;top:598.5px;width:6px;height:6px;border:1px solid #666;z-index:2"></div>
<div class="a" style="left:12.3px;top:612.65px;width:6px;height:6px;border:1px solid #666;z-index:2"></div>
<div class="a mono" style="left:12.5px;top:338px;width:535px;height:290px;overflow:hidden;white-space:pre;font-size:11.12px;line-height:14.15px;color:#000;-webkit-text-stroke:0.25px #000;padding-top:1px">PolPackСмена 1
Партия 035

Поддон 1:, начало (     ), конец (    ).
  Ряд 1, (общий 1): накопительно 252 ед., 252 ед.
  Ряд 2, (общий 2): накопительно 504 ед., 252 ед.
  Ряд 3, (общий 3): накопительно 756 ед., 252 ед.
  Ряд 4, (общий 4): накопительно 1008 ед., 252 ед.
  Ряд 5, (общий 5): накопительно 1260 ед., 252 ед.
  Ряд 6, (общий 6): накопительно 1512 ед., 252 ед.
  Ряд 7, (общий 7): накопительно 1764 ед., 252 ед.
Итого в поддоне 1: 1764 ед.

Поддон 2:, начало (     ), конец (    ).
  Ряд 1, (общий 8): накопительно 2016 ед., 252 ед.
  Ряд 2, (общий 9): накопительно 2268 ед., 252 ед.
  Ряд 3, (общий 10): накопительно 2520 ед., 252 ед.
  Ряд 4, (общий 11): накопительно 2772 ед., 252 ед.
  Ряд 5, (общий 12): накопительно 3024 ед., 252 ед.
  Ряд 6, (общий 13): накопительно 3276 ед., 252 ед.</div>
<div class="a" style="left:548px;top:332px;width:12px;height:297px;background:#c3c3c3;border:1px solid;border-color:#8e8e8e #f0f0f0 #f0f0f0 #8e8e8e"></div>
<div class="a" style="left:549px;top:333px;width:10px;height:11px;background:#d9d9d9;border:1px solid;border-color:#f4f4f4 #8e8e8e #8e8e8e #f4f4f4"></div>
<svg style="left:550.5px;top:336px" width="7" height="4" viewBox="0 0 7 4"><path d="M0 4h7L3.5 0z" fill="#000"/></svg>
<div class="a" style="left:549px;top:344px;width:10px;height:96px;background:#d9d9d9;border:1px solid;border-color:#f4f4f4 #8e8e8e #8e8e8e #f4f4f4"></div>
<div class="a" style="left:549px;top:617px;width:10px;height:11px;background:#d9d9d9;border:1px solid;border-color:#f4f4f4 #8e8e8e #8e8e8e #f4f4f4"></div>
<svg style="left:550.5px;top:621px" width="7" height="4" viewBox="0 0 7 4"><path d="M0 0h7L3.5 4z" fill="#000"/></svg>
<div class="a" style="left:10.5px;top:630px;width:538px;height:11px;background:#c9c9c9;border:1px solid;border-color:#8e8e8e #f0f0f0 #f0f0f0 #8e8e8e"></div>
<div class="a" style="left:11.5px;top:631px;width:10px;height:9px;background:#d9d9d9;border:1px solid;border-color:#f4f4f4 #8e8e8e #8e8e8e #f4f4f4"></div>
<div class="a" style="left:21.5px;top:631px;width:507px;height:9px;background:#d9d9d9;border:1px solid;border-color:#f4f4f4 #8e8e8e #8e8e8e #f4f4f4"></div>
<div class="a" style="left:537px;top:631px;width:10px;height:9px;background:#d9d9d9;border:1px solid;border-color:#f4f4f4 #8e8e8e #8e8e8e #f4f4f4"></div>
<svg style="left:14px;top:633px" width="4" height="6" viewBox="0 0 4 6"><path d="M4 0v6L0 3z" fill="#a0a0a0"/></svg>
<svg style="left:540px;top:633px" width="4" height="6" viewBox="0 0 4 6"><path d="M0 0v6l4-3z" fill="#a0a0a0"/></svg>
</div>
</body></html>
